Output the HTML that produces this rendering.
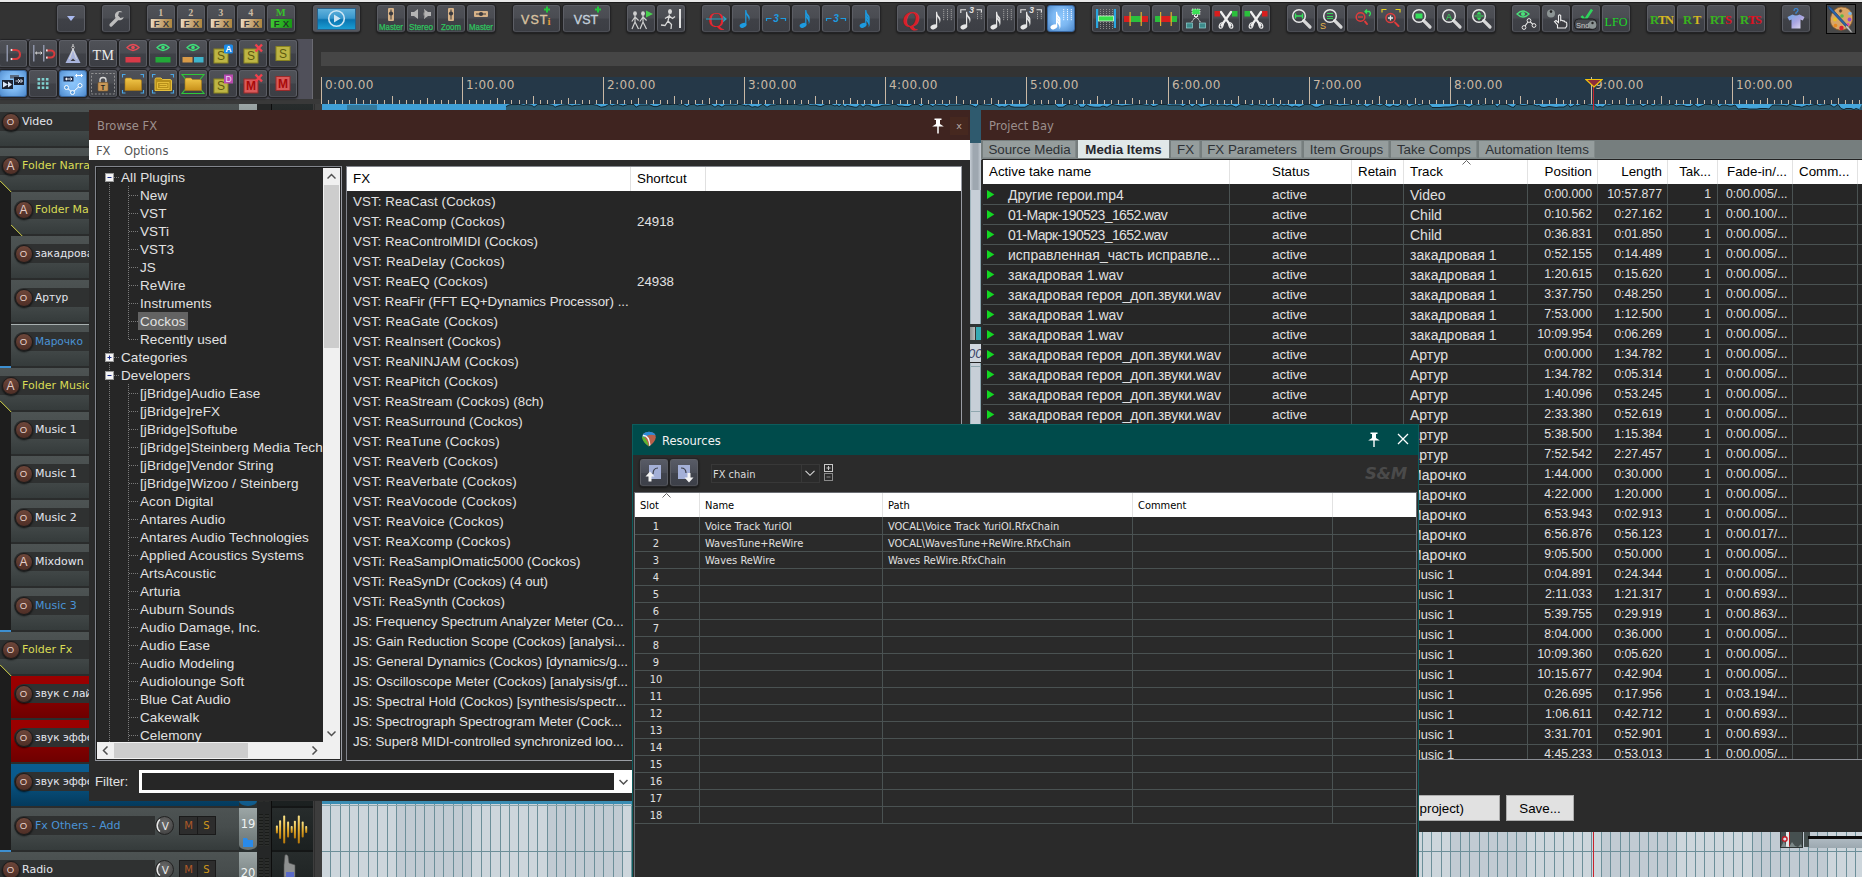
<!DOCTYPE html><html><head><meta charset="utf-8"><title>REAPER</title><style>
*{box-sizing:border-box;margin:0;padding:0}
html,body{width:1862px;height:877px;overflow:hidden;background:#333}
body{position:relative;font-family:"Liberation Sans",sans-serif;font-size:13.33px;color:#ddd}
div,span.t,svg.a{position:absolute}
.t{white-space:nowrap;transform:translateY(-50%);line-height:1}
.t.r{transform:translate(-100%,-50%)}
.t.c{transform:translate(-50%,-50%)}
.win{overflow:hidden}
.btn{width:28px;height:27px;border:1px solid #5c5e65;border-bottom-color:#4b4d54;border-radius:3px;background:linear-gradient(#4f5157 0,#4a4c52 48%,#3f4147 52%,#3c3e44 100%);box-shadow:0 0 0 1px #232325,0 1px 2px 1px rgba(0,0,0,.45)}
.btn.on{background:radial-gradient(ellipse at 50% 45%,#8cc6fc 0,#7db8f2 45%,#4c88cb 100%);border-color:#3a68a0}
.btn svg{position:absolute;left:0;top:0}
.seg{font-family:"DejaVu Sans",sans-serif}
.tah{font-family:"DejaVu Sans Condensed","DejaVu Sans",sans-serif}
</style></head><body>
<div style="left:0px;top:0px;width:1862px;height:2px;background:#e9e9e9"></div>
<div style="left:0px;top:2px;width:1862px;height:1px;background:#1c1c1c"></div>
<div style="left:321px;top:52px;width:1541px;height:14px;background:#464646"></div>
<div style="left:0px;top:39px;width:313px;height:60px;background:#50505a;border-right:1px solid #6a6a72"></div>
<div style="left:0px;top:99px;width:321px;height:5px;background:#393939"></div>
<div style="left:321px;top:104px;width:1541px;height:6px;background:#2c5a6e"></div>
<div style="left:322px;top:104px;width:184px;height:6px;background:#3f9fd6"></div>
<div style="left:347px;top:105px;width:30px;height:5px;background:#2c5a6e;opacity:.55"></div>
<svg class="a" style="left:0;top:104px" width="1862" height="6"><path d="M506 0L506 2.6L509 1.0L511 0.6L516 0.6L519 0.3L524 1.4L526 0.6L530 1.0L532 1.4L534 3.2L538 0.3L543 0.6L546 0.3L551 1.0L553 1.4L555 3.2L558 2.0L562 1.0L567 0.6L572 2.0L577 1.0L579 1.4L582 0.6L587 0.6L592 0.3L597 1.4L601 3.2L605 2.6L609 0.4L612 2.0L615 1.0L618 0.6L623 2.0L628 0.4L631 0.4L634 0.6L636 3.2L640 1.0L643 1.0L647 1.0L649 0.6L654 2.6L657 2.6L662 0.4L667 0.4L669 0.6L672 0.4L674 0.3L677 0.4L680 1.0L683 0.3L687 2.6L690 0.6L694 0.3L697 2.0L700 1.4L704 1.0L708 0.6L711 0.4L715 3.2L718 1.0L722 3.2L725 1.0L728 1.0L731 1.0L733 1.0L736 1.4L739 0.3L743 1.0L746 2.0L748 1.0L752 3.2L755 2.6L758 3.2L763 0.3L767 3.2L771 1.0L775 1.0L777 0.4L781 0.3L784 0.6L787 0.4L790 0.6L793 0.3L795 0.3L800 1.0L805 0.6L808 0.3L810 1.4L815 1.0L818 2.0L821 2.6L825 0.6L827 0.4L831 0.4L835 2.0L837 1.0L839 2.6L842 0.4L845 3.2L847 1.4L852 2.6L855 3.2L857 3.2L860 0.6L863 3.2L866 1.0L869 1.4L874 3.2L879 2.6L882 1.4L885 1.0L888 1.4L893 0.4L896 0.3L898 2.0L902 2.0L905 2.6L909 2.6L912 0.6L915 0.6L918 0.4L921 2.6L924 0.4L929 0.3L933 2.6L935 0.6L939 1.4L943 1.0L947 2.6L949 1.0L953 1.0L955 1.0L958 1.0L960 1.0L965 0.4L968 0.4L971 1.0L976 3.2L979 0.3L981 0.6L986 1.0L990 1.4L993 0.3L996 1.4L999 3.2L1002 2.6L1005 3.2L1009 1.0L1011 2.6L1015 3.2L1019 3.2L1022 3.2L1025 3.2L1030 0.3L1034 1.0L1039 0.3L1042 1.0L1045 0.4L1050 0.6L1055 0.3L1058 3.2L1063 3.2L1067 0.6L1072 0.3L1075 1.4L1078 0.3L1080 3.2L1084 3.2L1086 0.6L1090 2.6L1095 3.2L1100 3.2L1103 2.0L1107 3.2L1112 0.4L1117 1.4L1122 2.0L1127 1.4L1131 1.0L1135 0.6L1139 0.4L1142 0.6L1145 1.0L1147 1.4L1150 0.6L1153 2.6L1156 2.0L1159 0.4L1162 0.6L1166 0.4L1169 1.4L1172 1.0L1177 1.0L1180 1.0L1183 2.6L1186 0.6L1189 0.3L1192 3.2L1196 0.4L1198 1.0L1201 3.2L1206 2.0L1211 0.6L1213 1.4L1215 0.6L1218 2.0L1220 1.0L1223 1.0L1227 2.0L1231 1.0L1236 3.2L1241 0.4L1244 0.6L1247 0.3L1250 1.0L1252 2.0L1254 0.6L1257 0.6L1262 1.4L1264 2.0L1266 0.4L1268 2.6L1273 1.0L1276 1.0L1278 3.2L1281 0.6L1284 2.0L1286 1.0L1289 2.0L1292 3.2L1295 2.0L1299 3.2L1302 2.0L1305 0.3L1308 0.3L1310 0.3L1315 3.2L1318 3.2L1322 1.4L1326 0.6L1330 0.4L1335 1.0L1340 2.0L1343 1.4L1346 1.4L1349 1.0L1352 0.3L1355 0.3L1357 2.0L1361 1.0L1363 0.6L1367 3.2L1370 1.4L1373 0.3L1377 1.0L1380 2.0L1384 0.3L1387 2.6L1390 3.2L1393 1.4L1395 2.0L1398 2.6L1401 0.3L1404 1.0L1406 0.4L1409 3.2L1412 1.4L1417 0.3L1419 2.0L1421 1.0L1425 0.3L1429 0.3L1432 3.5L1435 3.5L1440 3.5L1445 3.0L1449 3.0L1454 2.5L1459 1.0L1464 1.0L1469 3.2L1474 0.3L1479 1.4L1481 0.3L1483 1.0L1486 0.6L1490 0.4L1495 0.3L1497 3.2L1500 0.4L1503 0.3L1507 0.6L1512 3.2L1514 3.2L1516 0.4L1519 0.6L1522 1.4L1525 1.4L1529 0.4L1533 0.6L1537 2.0L1539 1.4L1541 3.0L1544 3.5L1549 2.5L1553 3.0L1556 3.5L1559 3.0L1564 3.0L1568 0.4L1570 3.2L1573 2.0L1575 0.4L1577 2.0L1581 0.6L1586 0.4L1589 1.0L1592 1.4L1594 0.6L1597 3.2L1600 2.6L1603 3.2L1606 0.6L1609 1.4L1613 0.4L1617 0.3L1620 0.3L1624 0.4L1628 2.0L1631 1.0L1634 1.0L1637 0.6L1640 0.3L1643 2.6L1647 0.6L1650 0.3L1653 2.0L1656 0.6L1660 1.0L1665 0.6L1668 1.0L1671 0.3L1674 0.6L1676 2.0L1679 1.4L1682 1.0L1687 2.6L1690 2.6L1694 0.3L1698 3.2L1703 1.4L1705 0.3L1709 0.4L1714 1.0L1717 0.4L1719 3.2L1722 1.0L1726 1.0L1729 2.0L1732 2.0L1735 1.0L1738 5.0L1743 4.5L1746 4.5L1749 5.0L1754 5.0L1757 5.0L1760 4.5L1763 4.5L1766 4.5L1769 5.0L1772 1.4L1774 1.0L1778 1.0L1783 1.4L1787 2.0L1790 0.3L1794 2.0L1799 2.6L1802 3.2L1807 1.4L1809 2.0L1812 1.0L1816 0.4L1820 2.0L1822 1.0L1824 1.0L1828 0.4L1830 0.6L1834 3.2L1838 0.4L1841 4.5L1844 5.5L1846 4.5L1851 4.5L1854 5.5L1856 4.5L1859 5.5L1862 0Z" fill="#45a6dc"/><path d="M506 2.6L509 1.0L511 0.6L516 0.6L519 0.3L524 1.4L526 0.6L530 1.0L532 1.4L534 3.2L538 0.3L543 0.6L546 0.3L551 1.0L553 1.4L555 3.2L558 2.0L562 1.0L567 0.6L572 2.0L577 1.0L579 1.4L582 0.6L587 0.6L592 0.3L597 1.4L601 3.2L605 2.6L609 0.4L612 2.0L615 1.0L618 0.6L623 2.0L628 0.4L631 0.4L634 0.6L636 3.2L640 1.0L643 1.0L647 1.0L649 0.6L654 2.6L657 2.6L662 0.4L667 0.4L669 0.6L672 0.4L674 0.3L677 0.4L680 1.0L683 0.3L687 2.6L690 0.6L694 0.3L697 2.0L700 1.4L704 1.0L708 0.6L711 0.4L715 3.2L718 1.0L722 3.2L725 1.0L728 1.0L731 1.0L733 1.0L736 1.4L739 0.3L743 1.0L746 2.0L748 1.0L752 3.2L755 2.6L758 3.2L763 0.3L767 3.2L771 1.0L775 1.0L777 0.4L781 0.3L784 0.6L787 0.4L790 0.6L793 0.3L795 0.3L800 1.0L805 0.6L808 0.3L810 1.4L815 1.0L818 2.0L821 2.6L825 0.6L827 0.4L831 0.4L835 2.0L837 1.0L839 2.6L842 0.4L845 3.2L847 1.4L852 2.6L855 3.2L857 3.2L860 0.6L863 3.2L866 1.0L869 1.4L874 3.2L879 2.6L882 1.4L885 1.0L888 1.4L893 0.4L896 0.3L898 2.0L902 2.0L905 2.6L909 2.6L912 0.6L915 0.6L918 0.4L921 2.6L924 0.4L929 0.3L933 2.6L935 0.6L939 1.4L943 1.0L947 2.6L949 1.0L953 1.0L955 1.0L958 1.0L960 1.0L965 0.4L968 0.4L971 1.0L976 3.2L979 0.3L981 0.6L986 1.0L990 1.4L993 0.3L996 1.4L999 3.2L1002 2.6L1005 3.2L1009 1.0L1011 2.6L1015 3.2L1019 3.2L1022 3.2L1025 3.2L1030 0.3L1034 1.0L1039 0.3L1042 1.0L1045 0.4L1050 0.6L1055 0.3L1058 3.2L1063 3.2L1067 0.6L1072 0.3L1075 1.4L1078 0.3L1080 3.2L1084 3.2L1086 0.6L1090 2.6L1095 3.2L1100 3.2L1103 2.0L1107 3.2L1112 0.4L1117 1.4L1122 2.0L1127 1.4L1131 1.0L1135 0.6L1139 0.4L1142 0.6L1145 1.0L1147 1.4L1150 0.6L1153 2.6L1156 2.0L1159 0.4L1162 0.6L1166 0.4L1169 1.4L1172 1.0L1177 1.0L1180 1.0L1183 2.6L1186 0.6L1189 0.3L1192 3.2L1196 0.4L1198 1.0L1201 3.2L1206 2.0L1211 0.6L1213 1.4L1215 0.6L1218 2.0L1220 1.0L1223 1.0L1227 2.0L1231 1.0L1236 3.2L1241 0.4L1244 0.6L1247 0.3L1250 1.0L1252 2.0L1254 0.6L1257 0.6L1262 1.4L1264 2.0L1266 0.4L1268 2.6L1273 1.0L1276 1.0L1278 3.2L1281 0.6L1284 2.0L1286 1.0L1289 2.0L1292 3.2L1295 2.0L1299 3.2L1302 2.0L1305 0.3L1308 0.3L1310 0.3L1315 3.2L1318 3.2L1322 1.4L1326 0.6L1330 0.4L1335 1.0L1340 2.0L1343 1.4L1346 1.4L1349 1.0L1352 0.3L1355 0.3L1357 2.0L1361 1.0L1363 0.6L1367 3.2L1370 1.4L1373 0.3L1377 1.0L1380 2.0L1384 0.3L1387 2.6L1390 3.2L1393 1.4L1395 2.0L1398 2.6L1401 0.3L1404 1.0L1406 0.4L1409 3.2L1412 1.4L1417 0.3L1419 2.0L1421 1.0L1425 0.3L1429 0.3L1432 3.5L1435 3.5L1440 3.5L1445 3.0L1449 3.0L1454 2.5L1459 1.0L1464 1.0L1469 3.2L1474 0.3L1479 1.4L1481 0.3L1483 1.0L1486 0.6L1490 0.4L1495 0.3L1497 3.2L1500 0.4L1503 0.3L1507 0.6L1512 3.2L1514 3.2L1516 0.4L1519 0.6L1522 1.4L1525 1.4L1529 0.4L1533 0.6L1537 2.0L1539 1.4L1541 3.0L1544 3.5L1549 2.5L1553 3.0L1556 3.5L1559 3.0L1564 3.0L1568 0.4L1570 3.2L1573 2.0L1575 0.4L1577 2.0L1581 0.6L1586 0.4L1589 1.0L1592 1.4L1594 0.6L1597 3.2L1600 2.6L1603 3.2L1606 0.6L1609 1.4L1613 0.4L1617 0.3L1620 0.3L1624 0.4L1628 2.0L1631 1.0L1634 1.0L1637 0.6L1640 0.3L1643 2.6L1647 0.6L1650 0.3L1653 2.0L1656 0.6L1660 1.0L1665 0.6L1668 1.0L1671 0.3L1674 0.6L1676 2.0L1679 1.4L1682 1.0L1687 2.6L1690 2.6L1694 0.3L1698 3.2L1703 1.4L1705 0.3L1709 0.4L1714 1.0L1717 0.4L1719 3.2L1722 1.0L1726 1.0L1729 2.0L1732 2.0L1735 1.0L1738 5.0L1743 4.5L1746 4.5L1749 5.0L1754 5.0L1757 5.0L1760 4.5L1763 4.5L1766 4.5L1769 5.0L1772 1.4L1774 1.0L1778 1.0L1783 1.4L1787 2.0L1790 0.3L1794 2.0L1799 2.6L1802 3.2L1807 1.4L1809 2.0L1812 1.0L1816 0.4L1820 2.0L1822 1.0L1824 1.0L1828 0.4L1830 0.6L1834 3.2L1838 0.4L1841 4.5L1844 5.5L1846 4.5L1851 4.5L1854 5.5L1856 4.5L1859 5.5" fill="none" stroke="#0e1a20" stroke-width=".9"/></svg>
<div style="left:970px;top:110px;width:11px;height:33px;background:#2f5a6e"></div>
<div style="left:970px;top:143px;width:11px;height:47px;background:linear-gradient(90deg,#c7ced6 0,#9ea7b0 30%,#9ea7b0 70%,#c7ced6 100%)"></div>
<div style="left:970px;top:190px;width:11px;height:240px;background:#c7cfd7;border-left:1px solid #9eb4bc;border-right:1px solid #8aa4ae"></div>
<div style="left:970px;top:324px;width:11px;height:20px;background:#2e3434"></div>
<div style="left:970px;top:327px;width:5px;height:13px;background:linear-gradient(90deg,#8a8e8e,#b8bcbc)"></div>
<div style="left:976px;top:327px;width:5px;height:13px;background:#35a9b3"></div>
<div style="left:970px;top:344px;width:11px;height:19px;overflow:hidden;background:#cfd7de;border-bottom:1px solid #222">
<span class="t" style="left:-2px;top:9px;font-size:13px;font-style:italic;color:#3b4668">00</span>
</div>
<div style="left:971px;top:366px;width:9px;height:1px;background:#8ea6ae"></div>
<div style="left:971px;top:411px;width:9px;height:1px;background:#8ea6ae"></div>
<svg class="a" shape-rendering="crispEdges" style="left:322px;top:800px" width="320" height="77"><rect width="320" height="77" fill="#cdd6dc"/><rect x="75" y="0" width="75" height="77" fill="#c1cbd3"/><rect x="225" y="0" width="75" height="77" fill="#c1cbd3"/><rect x="8" y="0" width="1" height="77" fill="#6c8f99"/><rect x="18" y="0" width="1" height="77" fill="#6c8f99"/><rect x="27" y="0" width="1" height="77" fill="#6c8f99"/><rect x="36" y="0" width="1" height="77" fill="#6c8f99"/><rect x="46" y="0" width="1" height="77" fill="#6c8f99"/><rect x="55" y="0" width="1" height="77" fill="#6c8f99"/><rect x="65" y="0" width="1" height="77" fill="#6c8f99"/><rect x="74" y="0" width="1" height="77" fill="#6c8f99"/><rect x="83" y="0" width="1" height="77" fill="#6c8f99"/><rect x="93" y="0" width="1" height="77" fill="#6c8f99"/><rect x="102" y="0" width="1" height="77" fill="#6c8f99"/><rect x="112" y="0" width="1" height="77" fill="#6c8f99"/><rect x="121" y="0" width="1" height="77" fill="#6c8f99"/><rect x="131" y="0" width="1" height="77" fill="#6c8f99"/><rect x="140" y="0" width="1" height="77" fill="#6c8f99"/><rect x="149" y="0" width="1" height="77" fill="#6c8f99"/><rect x="159" y="0" width="1" height="77" fill="#6c8f99"/><rect x="168" y="0" width="1" height="77" fill="#6c8f99"/><rect x="178" y="0" width="1" height="77" fill="#6c8f99"/><rect x="187" y="0" width="1" height="77" fill="#6c8f99"/><rect x="196" y="0" width="1" height="77" fill="#6c8f99"/><rect x="206" y="0" width="1" height="77" fill="#6c8f99"/><rect x="215" y="0" width="1" height="77" fill="#6c8f99"/><rect x="225" y="0" width="1" height="77" fill="#6c8f99"/><rect x="234" y="0" width="1" height="77" fill="#6c8f99"/><rect x="243" y="0" width="1" height="77" fill="#6c8f99"/><rect x="253" y="0" width="1" height="77" fill="#6c8f99"/><rect x="262" y="0" width="1" height="77" fill="#6c8f99"/><rect x="272" y="0" width="1" height="77" fill="#6c8f99"/><rect x="281" y="0" width="1" height="77" fill="#6c8f99"/><rect x="291" y="0" width="1" height="77" fill="#6c8f99"/><rect x="300" y="0" width="1" height="77" fill="#6c8f99"/><rect x="309" y="0" width="1" height="77" fill="#6c8f99"/><rect x="319" y="0" width="1" height="77" fill="#6c8f99"/></svg>
<div style="left:322px;top:801px;width:320px;height:3px;background:#3a8db3"></div>
<div style="left:322px;top:851px;width:320px;height:1px;background:#6c8f99"></div>
<div style="left:322px;top:805px;width:320px;height:1px;background:#8aa6ae"></div>
<svg class="a" shape-rendering="crispEdges" style="left:1410px;top:832px" width="452" height="45"><rect width="452" height="45" fill="#cdd6dc"/><rect x="41" y="0" width="75" height="45" fill="#c1cbd3"/><rect x="191" y="0" width="76" height="45" fill="#c1cbd3"/><rect x="342" y="0" width="75" height="45" fill="#c1cbd3"/><rect x="3" y="0" width="1" height="45" fill="#6c8f99"/><rect x="12" y="0" width="1" height="45" fill="#6c8f99"/><rect x="21" y="0" width="1" height="45" fill="#6c8f99"/><rect x="31" y="0" width="1" height="45" fill="#6c8f99"/><rect x="40" y="0" width="1" height="45" fill="#6c8f99"/><rect x="50" y="0" width="1" height="45" fill="#6c8f99"/><rect x="59" y="0" width="1" height="45" fill="#6c8f99"/><rect x="69" y="0" width="1" height="45" fill="#6c8f99"/><rect x="78" y="0" width="1" height="45" fill="#6c8f99"/><rect x="87" y="0" width="1" height="45" fill="#6c8f99"/><rect x="97" y="0" width="1" height="45" fill="#6c8f99"/><rect x="106" y="0" width="1" height="45" fill="#6c8f99"/><rect x="116" y="0" width="1" height="45" fill="#6c8f99"/><rect x="125" y="0" width="1" height="45" fill="#6c8f99"/><rect x="134" y="0" width="1" height="45" fill="#6c8f99"/><rect x="144" y="0" width="1" height="45" fill="#6c8f99"/><rect x="153" y="0" width="1" height="45" fill="#6c8f99"/><rect x="163" y="0" width="1" height="45" fill="#6c8f99"/><rect x="172" y="0" width="1" height="45" fill="#6c8f99"/><rect x="181" y="0" width="1" height="45" fill="#6c8f99"/><rect x="191" y="0" width="1" height="45" fill="#6c8f99"/><rect x="200" y="0" width="1" height="45" fill="#6c8f99"/><rect x="210" y="0" width="1" height="45" fill="#6c8f99"/><rect x="219" y="0" width="1" height="45" fill="#6c8f99"/><rect x="229" y="0" width="1" height="45" fill="#6c8f99"/><rect x="238" y="0" width="1" height="45" fill="#6c8f99"/><rect x="247" y="0" width="1" height="45" fill="#6c8f99"/><rect x="257" y="0" width="1" height="45" fill="#6c8f99"/><rect x="266" y="0" width="1" height="45" fill="#6c8f99"/><rect x="276" y="0" width="1" height="45" fill="#6c8f99"/><rect x="285" y="0" width="1" height="45" fill="#6c8f99"/><rect x="294" y="0" width="1" height="45" fill="#6c8f99"/><rect x="304" y="0" width="1" height="45" fill="#6c8f99"/><rect x="313" y="0" width="1" height="45" fill="#6c8f99"/><rect x="323" y="0" width="1" height="45" fill="#6c8f99"/><rect x="332" y="0" width="1" height="45" fill="#6c8f99"/><rect x="342" y="0" width="1" height="45" fill="#6c8f99"/><rect x="351" y="0" width="1" height="45" fill="#6c8f99"/><rect x="360" y="0" width="1" height="45" fill="#6c8f99"/><rect x="370" y="0" width="1" height="45" fill="#6c8f99"/><rect x="379" y="0" width="1" height="45" fill="#6c8f99"/><rect x="389" y="0" width="1" height="45" fill="#6c8f99"/><rect x="398" y="0" width="1" height="45" fill="#6c8f99"/><rect x="407" y="0" width="1" height="45" fill="#6c8f99"/><rect x="417" y="0" width="1" height="45" fill="#6c8f99"/><rect x="426" y="0" width="1" height="45" fill="#6c8f99"/><rect x="436" y="0" width="1" height="45" fill="#6c8f99"/><rect x="445" y="0" width="1" height="45" fill="#6c8f99"/></svg>
<div style="left:1410px;top:851px;width:452px;height:1px;background:#6c8f99"></div>
<div style="left:313px;top:800px;width:9px;height:77px;background:#3b3b3b"></div>
<div style="left:321px;top:77px;width:1541px;height:27px;background:#253848"></div>
<svg class="a" shape-rendering="crispEdges" style="left:0;top:77px" width="1862" height="27" fill="#c9b8a4"><rect x="321" y="0" width="1" height="27"/><rect x="328" y="23" width="1" height="4"/><rect x="335" y="23" width="1" height="4"/><rect x="342" y="23" width="1" height="4"/><rect x="349" y="23" width="1" height="4"/><rect x="356" y="21" width="1" height="6"/><rect x="363" y="23" width="1" height="4"/><rect x="370" y="23" width="1" height="4"/><rect x="377" y="23" width="1" height="4"/><rect x="384" y="23" width="1" height="4"/><rect x="392" y="19" width="1" height="8"/><rect x="399" y="23" width="1" height="4"/><rect x="406" y="23" width="1" height="4"/><rect x="413" y="23" width="1" height="4"/><rect x="420" y="23" width="1" height="4"/><rect x="427" y="21" width="1" height="6"/><rect x="434" y="23" width="1" height="4"/><rect x="441" y="23" width="1" height="4"/><rect x="448" y="23" width="1" height="4"/><rect x="455" y="23" width="1" height="4"/><rect x="462" y="0" width="1" height="27"/><rect x="469" y="23" width="1" height="4"/><rect x="476" y="23" width="1" height="4"/><rect x="483" y="23" width="1" height="4"/><rect x="490" y="23" width="1" height="4"/><rect x="497" y="21" width="1" height="6"/><rect x="504" y="23" width="1" height="4"/><rect x="511" y="23" width="1" height="4"/><rect x="519" y="23" width="1" height="4"/><rect x="526" y="23" width="1" height="4"/><rect x="533" y="19" width="1" height="8"/><rect x="540" y="23" width="1" height="4"/><rect x="547" y="23" width="1" height="4"/><rect x="554" y="23" width="1" height="4"/><rect x="561" y="23" width="1" height="4"/><rect x="568" y="21" width="1" height="6"/><rect x="575" y="23" width="1" height="4"/><rect x="582" y="23" width="1" height="4"/><rect x="589" y="23" width="1" height="4"/><rect x="596" y="23" width="1" height="4"/><rect x="603" y="0" width="1" height="27"/><rect x="610" y="23" width="1" height="4"/><rect x="617" y="23" width="1" height="4"/><rect x="624" y="23" width="1" height="4"/><rect x="631" y="23" width="1" height="4"/><rect x="638" y="21" width="1" height="6"/><rect x="646" y="23" width="1" height="4"/><rect x="653" y="23" width="1" height="4"/><rect x="660" y="23" width="1" height="4"/><rect x="667" y="23" width="1" height="4"/><rect x="674" y="19" width="1" height="8"/><rect x="681" y="23" width="1" height="4"/><rect x="688" y="23" width="1" height="4"/><rect x="695" y="23" width="1" height="4"/><rect x="702" y="23" width="1" height="4"/><rect x="709" y="21" width="1" height="6"/><rect x="716" y="23" width="1" height="4"/><rect x="723" y="23" width="1" height="4"/><rect x="730" y="23" width="1" height="4"/><rect x="737" y="23" width="1" height="4"/><rect x="744" y="0" width="1" height="27"/><rect x="751" y="23" width="1" height="4"/><rect x="758" y="23" width="1" height="4"/><rect x="765" y="23" width="1" height="4"/><rect x="773" y="23" width="1" height="4"/><rect x="780" y="21" width="1" height="6"/><rect x="787" y="23" width="1" height="4"/><rect x="794" y="23" width="1" height="4"/><rect x="801" y="23" width="1" height="4"/><rect x="808" y="23" width="1" height="4"/><rect x="815" y="19" width="1" height="8"/><rect x="822" y="23" width="1" height="4"/><rect x="829" y="23" width="1" height="4"/><rect x="836" y="23" width="1" height="4"/><rect x="843" y="23" width="1" height="4"/><rect x="850" y="21" width="1" height="6"/><rect x="857" y="23" width="1" height="4"/><rect x="864" y="23" width="1" height="4"/><rect x="871" y="23" width="1" height="4"/><rect x="878" y="23" width="1" height="4"/><rect x="885" y="0" width="1" height="27"/><rect x="892" y="23" width="1" height="4"/><rect x="900" y="23" width="1" height="4"/><rect x="907" y="23" width="1" height="4"/><rect x="914" y="23" width="1" height="4"/><rect x="921" y="21" width="1" height="6"/><rect x="928" y="23" width="1" height="4"/><rect x="935" y="23" width="1" height="4"/><rect x="942" y="23" width="1" height="4"/><rect x="949" y="23" width="1" height="4"/><rect x="956" y="19" width="1" height="8"/><rect x="963" y="23" width="1" height="4"/><rect x="970" y="23" width="1" height="4"/><rect x="977" y="23" width="1" height="4"/><rect x="984" y="23" width="1" height="4"/><rect x="991" y="21" width="1" height="6"/><rect x="998" y="23" width="1" height="4"/><rect x="1005" y="23" width="1" height="4"/><rect x="1012" y="23" width="1" height="4"/><rect x="1019" y="23" width="1" height="4"/><rect x="1026" y="0" width="1" height="27"/><rect x="1034" y="23" width="1" height="4"/><rect x="1041" y="23" width="1" height="4"/><rect x="1048" y="23" width="1" height="4"/><rect x="1055" y="23" width="1" height="4"/><rect x="1062" y="21" width="1" height="6"/><rect x="1069" y="23" width="1" height="4"/><rect x="1076" y="23" width="1" height="4"/><rect x="1083" y="23" width="1" height="4"/><rect x="1090" y="23" width="1" height="4"/><rect x="1097" y="19" width="1" height="8"/><rect x="1104" y="23" width="1" height="4"/><rect x="1111" y="23" width="1" height="4"/><rect x="1118" y="23" width="1" height="4"/><rect x="1125" y="23" width="1" height="4"/><rect x="1132" y="21" width="1" height="6"/><rect x="1139" y="23" width="1" height="4"/><rect x="1146" y="23" width="1" height="4"/><rect x="1153" y="23" width="1" height="4"/><rect x="1161" y="23" width="1" height="4"/><rect x="1168" y="0" width="1" height="27"/><rect x="1175" y="23" width="1" height="4"/><rect x="1182" y="23" width="1" height="4"/><rect x="1189" y="23" width="1" height="4"/><rect x="1196" y="23" width="1" height="4"/><rect x="1203" y="21" width="1" height="6"/><rect x="1210" y="23" width="1" height="4"/><rect x="1217" y="23" width="1" height="4"/><rect x="1224" y="23" width="1" height="4"/><rect x="1231" y="23" width="1" height="4"/><rect x="1238" y="19" width="1" height="8"/><rect x="1245" y="23" width="1" height="4"/><rect x="1252" y="23" width="1" height="4"/><rect x="1259" y="23" width="1" height="4"/><rect x="1266" y="23" width="1" height="4"/><rect x="1273" y="21" width="1" height="6"/><rect x="1280" y="23" width="1" height="4"/><rect x="1288" y="23" width="1" height="4"/><rect x="1295" y="23" width="1" height="4"/><rect x="1302" y="23" width="1" height="4"/><rect x="1309" y="0" width="1" height="27"/><rect x="1316" y="23" width="1" height="4"/><rect x="1323" y="23" width="1" height="4"/><rect x="1330" y="23" width="1" height="4"/><rect x="1337" y="23" width="1" height="4"/><rect x="1344" y="21" width="1" height="6"/><rect x="1351" y="23" width="1" height="4"/><rect x="1358" y="23" width="1" height="4"/><rect x="1365" y="23" width="1" height="4"/><rect x="1372" y="23" width="1" height="4"/><rect x="1379" y="19" width="1" height="8"/><rect x="1386" y="23" width="1" height="4"/><rect x="1393" y="23" width="1" height="4"/><rect x="1400" y="23" width="1" height="4"/><rect x="1407" y="23" width="1" height="4"/><rect x="1415" y="21" width="1" height="6"/><rect x="1422" y="23" width="1" height="4"/><rect x="1429" y="23" width="1" height="4"/><rect x="1436" y="23" width="1" height="4"/><rect x="1443" y="23" width="1" height="4"/><rect x="1450" y="0" width="1" height="27"/><rect x="1457" y="23" width="1" height="4"/><rect x="1464" y="23" width="1" height="4"/><rect x="1471" y="23" width="1" height="4"/><rect x="1478" y="23" width="1" height="4"/><rect x="1485" y="21" width="1" height="6"/><rect x="1492" y="23" width="1" height="4"/><rect x="1499" y="23" width="1" height="4"/><rect x="1506" y="23" width="1" height="4"/><rect x="1513" y="23" width="1" height="4"/><rect x="1520" y="19" width="1" height="8"/><rect x="1527" y="23" width="1" height="4"/><rect x="1534" y="23" width="1" height="4"/><rect x="1542" y="23" width="1" height="4"/><rect x="1549" y="23" width="1" height="4"/><rect x="1556" y="21" width="1" height="6"/><rect x="1563" y="23" width="1" height="4"/><rect x="1570" y="23" width="1" height="4"/><rect x="1577" y="23" width="1" height="4"/><rect x="1584" y="23" width="1" height="4"/><rect x="1591" y="0" width="1" height="27"/><rect x="1598" y="23" width="1" height="4"/><rect x="1605" y="23" width="1" height="4"/><rect x="1612" y="23" width="1" height="4"/><rect x="1619" y="23" width="1" height="4"/><rect x="1626" y="21" width="1" height="6"/><rect x="1633" y="23" width="1" height="4"/><rect x="1640" y="23" width="1" height="4"/><rect x="1647" y="23" width="1" height="4"/><rect x="1654" y="23" width="1" height="4"/><rect x="1661" y="19" width="1" height="8"/><rect x="1669" y="23" width="1" height="4"/><rect x="1676" y="23" width="1" height="4"/><rect x="1683" y="23" width="1" height="4"/><rect x="1690" y="23" width="1" height="4"/><rect x="1697" y="21" width="1" height="6"/><rect x="1704" y="23" width="1" height="4"/><rect x="1711" y="23" width="1" height="4"/><rect x="1718" y="23" width="1" height="4"/><rect x="1725" y="23" width="1" height="4"/><rect x="1732" y="0" width="1" height="27"/><rect x="1739" y="23" width="1" height="4"/><rect x="1746" y="23" width="1" height="4"/><rect x="1753" y="23" width="1" height="4"/><rect x="1760" y="23" width="1" height="4"/><rect x="1767" y="21" width="1" height="6"/><rect x="1774" y="23" width="1" height="4"/><rect x="1781" y="23" width="1" height="4"/><rect x="1788" y="23" width="1" height="4"/><rect x="1795" y="23" width="1" height="4"/><rect x="1803" y="19" width="1" height="8"/><rect x="1810" y="23" width="1" height="4"/><rect x="1817" y="23" width="1" height="4"/><rect x="1824" y="23" width="1" height="4"/><rect x="1831" y="23" width="1" height="4"/><rect x="1838" y="21" width="1" height="6"/><rect x="1845" y="23" width="1" height="4"/><rect x="1852" y="23" width="1" height="4"/><rect x="1859" y="23" width="1" height="4"/></svg>
<span class="t seg" style="left:325px;top:85px;font-size:12px;letter-spacing:.400px;color:#c9b8a4">0:00.00</span>
<span class="t seg" style="left:466px;top:85px;font-size:12px;letter-spacing:.400px;color:#c9b8a4">1:00.00</span>
<span class="t seg" style="left:607px;top:85px;font-size:12px;letter-spacing:.400px;color:#c9b8a4">2:00.00</span>
<span class="t seg" style="left:748px;top:85px;font-size:12px;letter-spacing:.400px;color:#c9b8a4">3:00.00</span>
<span class="t seg" style="left:889px;top:85px;font-size:12px;letter-spacing:.400px;color:#c9b8a4">4:00.00</span>
<span class="t seg" style="left:1030px;top:85px;font-size:12px;letter-spacing:.400px;color:#c9b8a4">5:00.00</span>
<span class="t seg" style="left:1172px;top:85px;font-size:12px;letter-spacing:.400px;color:#c9b8a4">6:00.00</span>
<span class="t seg" style="left:1313px;top:85px;font-size:12px;letter-spacing:.400px;color:#c9b8a4">7:00.00</span>
<span class="t seg" style="left:1454px;top:85px;font-size:12px;letter-spacing:.400px;color:#c9b8a4">8:00.00</span>
<span class="t seg" style="left:1595px;top:85px;font-size:12px;letter-spacing:.400px;color:#c9b8a4">9:00.00</span>
<span class="t seg" style="left:1736px;top:85px;font-size:12px;letter-spacing:.400px;color:#c9b8a4">10:00.00</span>
<div style="left:1593px;top:87px;width:1px;height:790px;background:#c8232c"></div>
<svg class="a" style="left:1584.500px;top:77px" width="18" height="12"><path d="M1 2.500H17L9 10Z" fill="#8b2c3c" stroke="#f2c20c" stroke-width="1.200"/></svg>
<div class="btn" style="left:57px;top:5px;width:28px;"><svg width="26" height="25" viewBox="0 0 26 25"><path d="M9 10H17L13 15Z" fill="#a9b9ee"/></svg></div>
<div class="btn" style="left:102px;top:5px;width:28px;"><svg width="26" height="25" viewBox="0 0 26 25"><path d="M8 19L15 12" stroke="#bdbdbd" stroke-width="3.2" stroke-linecap="round"/><path d="M19.5 6.2A4.6 4.6 0 1 0 20.8 11.2L17.3 11.9L15.1 9.7L16 6.3Z" fill="#bdbdbd"/></svg></div>
<svg width="0" height="0" style="position:absolute"><defs><linearGradient id="fxg" x1="0" y1="0" x2="1" y2="0"><stop offset="0" stop-color="#ead9c0"/><stop offset=".5" stop-color="#c9a878"/><stop offset="1" stop-color="#ae863f"/></linearGradient><linearGradient id="fxm" x1="0" y1="0" x2="1" y2="0"><stop offset="0" stop-color="#3fc832"/><stop offset="1" stop-color="#179a14"/></linearGradient></defs></svg>
<div class="btn" style="left:147px;top:5px;width:28px;"><svg width="26" height="25" viewBox="0 0 26 25"><text x="12.8" y="9.8" font-size="10" fill="#cbbba3" font-family="Liberation Serif,serif" font-weight="bold" text-anchor="middle">1</text><rect x="2.800" y="13" width="21.200" height="8.800" fill="url(#fxg)"/><text x="5.7" y="20.6" font-size="9.5" fill="#393b42" font-family="Liberation Sans,sans-serif" font-weight="bold" textLength="15.500" lengthAdjust="spacing">FX</text></svg></div>
<div class="btn" style="left:177px;top:5px;width:28px;"><svg width="26" height="25" viewBox="0 0 26 25"><text x="12.8" y="9.8" font-size="10" fill="#cbbba3" font-family="Liberation Serif,serif" font-weight="bold" text-anchor="middle">2</text><rect x="2.800" y="13" width="21.200" height="8.800" fill="url(#fxg)"/><text x="5.7" y="20.6" font-size="9.5" fill="#393b42" font-family="Liberation Sans,sans-serif" font-weight="bold" textLength="15.500" lengthAdjust="spacing">FX</text></svg></div>
<div class="btn" style="left:207px;top:5px;width:28px;"><svg width="26" height="25" viewBox="0 0 26 25"><text x="12.8" y="9.8" font-size="10" fill="#cbbba3" font-family="Liberation Serif,serif" font-weight="bold" text-anchor="middle">3</text><rect x="2.800" y="13" width="21.200" height="8.800" fill="url(#fxg)"/><text x="5.7" y="20.6" font-size="9.5" fill="#393b42" font-family="Liberation Sans,sans-serif" font-weight="bold" textLength="15.500" lengthAdjust="spacing">FX</text></svg></div>
<div class="btn" style="left:237px;top:5px;width:28px;"><svg width="26" height="25" viewBox="0 0 26 25"><text x="12.8" y="9.8" font-size="10" fill="#cbbba3" font-family="Liberation Serif,serif" font-weight="bold" text-anchor="middle">4</text><rect x="2.800" y="13" width="21.200" height="8.800" fill="url(#fxg)"/><text x="5.7" y="20.6" font-size="9.5" fill="#393b42" font-family="Liberation Sans,sans-serif" font-weight="bold" textLength="15.500" lengthAdjust="spacing">FX</text></svg></div>
<div class="btn" style="left:267px;top:5px;width:28px;"><svg width="26" height="25" viewBox="0 0 26 25"><text x="12.8" y="9.8" font-size="10.5" fill="#39c02c" font-family="Liberation Serif,serif" font-weight="bold" text-anchor="middle">M</text><rect x="2.800" y="13" width="21.200" height="8.800" fill="url(#fxm)"/><text x="5.7" y="20.6" font-size="9.5" fill="#203a28" font-family="Liberation Sans,sans-serif" font-weight="bold" textLength="15.500" lengthAdjust="spacing">FX</text></svg></div>
<div class="btn" style="left:313px;top:5px;width:47px;background:#55585f"><div style="left:3px;top:2px;width:39px;height:22px;border:1px solid #2a5f86;background:linear-gradient(#62b2dc 0,#3796cc 46%,#0a74b0 54%,#1a9cd2 100%)"></div><svg width="45" height="25" viewBox="0 0 45 25"><circle cx="22.5" cy="12.5" r="7.8" fill="none" stroke="#cfe6f4" stroke-width="1.6"/><path d="M20 8.6V16.4L26.6 12.5Z" fill="#cfe6f4"/></svg></div>
<div class="btn" style="left:377px;top:5px;width:28px;"><svg width="26" height="25" viewBox="0 0 26 25"><rect x="10" y="2" width="6" height="13" rx="1" fill="#d6b288"/><rect x="12.5" y="3.5" width="1" height="10" fill="#3a3a3e"/><circle cx="13" cy="7.5" r="2.1" fill="#3a3a3e"/><text x="13" y="24.3" font-size="9.2" fill="#2fc45f" font-family="Liberation Sans,sans-serif" text-anchor="middle" stroke="#2fc45f" stroke-width=".25" textLength="24" lengthAdjust="spacingAndGlyphs">Master</text></svg></div>
<div class="btn" style="left:407px;top:5px;width:28px;"><svg width="26" height="25" viewBox="0 0 26 25"><path d="M3 6H6L10 3V13L6 10H3Z" fill="#b4b4b4"/><path d="M23 6H20L16 3V13L20 10H23Z" fill="#b4b4b4"/><path d="M17 4Q14.5 8 17 12" stroke="#8a8a8a" fill="none"/><text x="13" y="24.3" font-size="9.2" fill="#2fc45f" font-family="Liberation Sans,sans-serif" text-anchor="middle" stroke="#2fc45f" stroke-width=".25" textLength="24" lengthAdjust="spacingAndGlyphs">Stereo</text></svg></div>
<div class="btn" style="left:437px;top:5px;width:28px;"><svg width="26" height="25" viewBox="0 0 26 25"><rect x="10" y="2" width="6" height="13" rx="1" fill="#d6b288"/><rect x="12.5" y="3.5" width="1" height="10" fill="#3a3a3e"/><circle cx="13" cy="7.5" r="2.1" fill="#3a3a3e"/><text x="13" y="24.3" font-size="9.2" fill="#2fc45f" font-family="Liberation Sans,sans-serif" text-anchor="middle" stroke="#2fc45f" stroke-width=".25" textLength="20" lengthAdjust="spacingAndGlyphs">Zoom</text></svg></div>
<div class="btn" style="left:467px;top:5px;width:28px;"><svg width="26" height="25" viewBox="0 0 26 25"><rect x="6" y="5" width="14" height="6" rx="1" fill="#d6b288"/><rect x="8" y="7.5" width="10" height="1" fill="#3a3a3e"/><circle cx="13" cy="8" r="2.1" fill="#3a3a3e"/><text x="13" y="24.3" font-size="9.2" fill="#2fc45f" font-family="Liberation Sans,sans-serif" text-anchor="middle" stroke="#2fc45f" stroke-width=".25" textLength="24" lengthAdjust="spacingAndGlyphs">Master</text></svg></div>
<div class="btn" style="left:513px;top:5px;width:47px;"><svg width="45" height="25" viewBox="0 0 45 25"><text x="7.1" y="18.2" font-size="12.5" fill="#d9c2a0" font-family="Liberation Sans,sans-serif" stroke="#d9c2a0" stroke-width=".35" textLength="26.300" lengthAdjust="spacing">VST</text><text x="33.6" y="18.8" font-size="11" fill="#e09a3a" font-family="Liberation Serif,serif" font-weight="bold">i</text><path d="M30 3.500H36M33 .5V6.500" stroke="#22c83c" stroke-width="2"/></svg></div>
<div class="btn" style="left:563px;top:5px;width:47px;"><svg width="45" height="25" viewBox="0 0 45 25"><text x="9.7" y="18.2" font-size="12.5" fill="#c3d0dc" font-family="Liberation Sans,sans-serif" stroke="#c3d0dc" stroke-width=".35" textLength="24.500" lengthAdjust="spacing">VST</text><path d="M31 3.500H37M34 .5V6.500" stroke="#22c83c" stroke-width="2"/></svg></div>
<div class="btn" style="left:627px;top:5px;width:28px;"><svg width="26" height="25" viewBox="0 0 26 25"><ellipse cx="7" cy="7.5" rx="1.900" ry="2.300" fill="#d0d0d0"/><path d="M7 9.2V16L4 23M7 16L10.5 23M7 11L3.8 15.5M7 11L10.6 14.5" fill="none" stroke="#d0d0d0" stroke-width="1.2"/><ellipse cx="15" cy="7.5" rx="1.900" ry="2.300" fill="#d0d0d0"/><path d="M15 9.2V16L12 23M15 16L18.5 23M15 11L11.8 15.5M15 11L18.6 14.5" fill="none" stroke="#d0d0d0" stroke-width="1.2"/><path d="M18 4.5V11.5L25 8Z" fill="#49d04e"/></svg></div>
<div class="btn" style="left:657px;top:5px;width:28px;"><svg width="26" height="25" viewBox="0 0 26 25"><ellipse cx="12" cy="5.500" rx="2" ry="2.500" fill="#d8d8d8"/><path d="M11.5 8.5L10 15L13.5 18.5L13 23M10 15L7 19.5L3 19M11 10L7 12.5M11.2 10L14.5 12.5L17 10.5" fill="none" stroke="#d8d8d8" stroke-width="1.3"/><rect x="21" y="3" width="2" height="19" fill="#e2e2e2"/></svg></div>
<div class="btn" style="left:702px;top:5px;width:28px;"><svg width="26" height="25" viewBox="0 0 26 25"><text x="13" y="21" font-size="22" fill="#e8232b" font-family="Liberation Serif,serif" text-anchor="middle">Q</text><path d="M3 13H23M20 10.5L23 13L20 15.5" fill="none" stroke="#22a7c8" stroke-width="1.2"/></svg></div>
<div class="btn" style="left:732px;top:5px;width:28px;"><svg width="26" height="25" viewBox="0 0 26 25"><ellipse cx="10" cy="19.3" rx="3.500" ry="2.300" transform="rotate(-22 10 19.3)" fill="#1d9be0"/><rect x="12.2" y="4" width="1.200" height="15.3" fill="#1d9be0"/><path d="M12.8 4Q13.6 7.6 16 9.4Q17.6 12 15.6 15.5Q16.6 12 12.8 8.2Z" fill="#1d9be0"/></svg></div>
<div class="btn" style="left:762px;top:5px;width:28px;"><svg width="26" height="25" viewBox="0 0 26 25"><path d="M3.5 15V12.5H8.5M17.5 12.5H22.5V15" fill="none" stroke="#1d9be0" stroke-width="1.2"/><text x="13" y="16" font-size="10" fill="#1d9be0" font-family="Liberation Sans,sans-serif" font-weight="bold" font-style="italic" text-anchor="middle">3</text></svg></div>
<div class="btn" style="left:792px;top:5px;width:28px;"><svg width="26" height="25" viewBox="0 0 26 25"><ellipse cx="10" cy="19.3" rx="3.500" ry="2.300" transform="rotate(-22 10 19.3)" fill="#1d9be0"/><rect x="12.2" y="4" width="1.200" height="15.3" fill="#1d9be0"/><path d="M12.8 4Q13.6 7.6 16 9.4Q17.6 12 15.6 15.5Q16.6 12 12.8 8.2Z" fill="#1d9be0"/><path d="M12.8 7Q13.6 10.6 16 12.4Q17.6 15 15.6 18.5Q16.6 15 12.8 11.2Z" fill="#1d9be0"/></svg></div>
<div class="btn" style="left:822px;top:5px;width:28px;"><svg width="26" height="25" viewBox="0 0 26 25"><path d="M3.5 15V12.5H8.5M17.5 12.5H22.5V15" fill="none" stroke="#1d9be0" stroke-width="1.2"/><text x="13" y="16" font-size="10" fill="#1d9be0" font-family="Liberation Sans,sans-serif" font-weight="bold" font-style="italic" text-anchor="middle">3</text></svg></div>
<div class="btn" style="left:852px;top:5px;width:28px;"><svg width="26" height="25" viewBox="0 0 26 25"><ellipse cx="10" cy="19.3" rx="3.500" ry="2.300" transform="rotate(-22 10 19.3)" fill="#1d9be0"/><rect x="12.2" y="4" width="1.200" height="15.3" fill="#1d9be0"/><path d="M12.8 4Q13.6 7.6 16 9.4Q17.6 12 15.6 15.5Q16.6 12 12.8 8.2Z" fill="#1d9be0"/><path d="M12.8 7Q13.6 10.6 16 12.4Q17.6 15 15.6 18.5Q16.6 15 12.8 11.2Z" fill="#1d9be0"/><path d="M12.8 10Q13.6 13.6 16 15.4Q17.6 18 15.6 21.5Q16.6 18 12.8 14.2Z" fill="#1d9be0"/></svg></div>
<div class="btn" style="left:897px;top:5px;width:28px;"><svg width="26" height="25" viewBox="0 0 26 25"><text x="13" y="21" font-size="24" fill="#d8202a" font-family="Liberation Serif,serif" font-style="italic" font-weight="bold" text-anchor="middle">Q</text></svg></div>
<div class="btn" style="left:927px;top:5px;width:28px;"><svg width="26" height="25" viewBox="0 0 26 25"><ellipse cx="5.8" cy="20.8" rx="3.500" ry="2.300" transform="rotate(-22 5.8 20.8)" fill="#e4e4e4"/><rect x="8.0" y="5.8" width="1.200" height="15.0" fill="#e4e4e4"/><path d="M8.6 5.8Q9.4 9.4 11.8 11.2Q13.399999999999999 13.8 11.399999999999999 17.3Q12.399999999999999 13.8 8.6 10.0Z" fill="#e4e4e4"/><g fill="#9a9a9a"><rect x="15.2" y="3" width="1" height="1.200"/><rect x="15.2" y="5" width="1" height="1.200"/><rect x="15.2" y="7" width="1" height="1.200"/><rect x="15.2" y="9" width="1" height="1.200"/><rect x="15.2" y="11" width="1" height="1.200"/><rect x="15.2" y="13" width="1" height="1.200"/><rect x="19" y="3" width="1" height="1.200"/><rect x="19" y="5" width="1" height="1.200"/><rect x="19" y="7" width="1" height="1.200"/><rect x="19" y="9" width="1" height="1.200"/><rect x="19" y="11" width="1" height="1.200"/><rect x="19" y="13" width="1" height="1.200"/><rect x="22.8" y="3" width="1" height="1.200"/><rect x="22.8" y="5" width="1" height="1.200"/><rect x="22.8" y="7" width="1" height="1.200"/><rect x="22.8" y="9" width="1" height="1.200"/><rect x="22.8" y="11" width="1" height="1.200"/><rect x="22.8" y="13" width="1" height="1.200"/></g></svg></div>
<div class="btn" style="left:957px;top:5px;width:28px;"><svg width="26" height="25" viewBox="0 0 26 25"><ellipse cx="5.8" cy="20.8" rx="3.500" ry="2.300" transform="rotate(-22 5.8 20.8)" fill="#e4e4e4"/><rect x="8.0" y="5.8" width="1.200" height="15.0" fill="#e4e4e4"/><path d="M8.6 5.8Q9.4 9.4 11.8 11.2Q13.399999999999999 13.8 11.399999999999999 17.3Q12.399999999999999 13.8 8.6 10.0Z" fill="#e4e4e4"/><path d="M2.800 7V3.800H8M18.500 3.800H23.400V7" fill="none" stroke="#e4e4e4" stroke-width="1.100"/><text x="13.6" y="6.6" font-size="8.5" fill="#e4e4e4" font-family="Liberation Sans,sans-serif" font-weight="bold" font-style="italic" text-anchor="middle">3</text><g fill="#9a9a9a"><rect x="19" y="6" width="1" height="1.200"/><rect x="19" y="8" width="1" height="1.200"/><rect x="19" y="10" width="1" height="1.200"/><rect x="19" y="12" width="1" height="1.200"/><rect x="22.8" y="6" width="1" height="1.200"/><rect x="22.8" y="8" width="1" height="1.200"/><rect x="22.8" y="10" width="1" height="1.200"/><rect x="22.8" y="12" width="1" height="1.200"/></g></svg></div>
<div class="btn" style="left:987px;top:5px;width:28px;"><svg width="26" height="25" viewBox="0 0 26 25"><ellipse cx="5.8" cy="20.8" rx="3.500" ry="2.300" transform="rotate(-22 5.8 20.8)" fill="#e4e4e4"/><rect x="8.0" y="5.8" width="1.200" height="15.0" fill="#e4e4e4"/><path d="M8.6 5.8Q9.4 9.4 11.8 11.2Q13.399999999999999 13.8 11.399999999999999 17.3Q12.399999999999999 13.8 8.6 10.0Z" fill="#e4e4e4"/><path d="M8.6 8.8Q9.4 12.4 11.8 14.200000000000001Q13.399999999999999 16.8 11.399999999999999 20.3Q12.399999999999999 16.8 8.6 13.0Z" fill="#e4e4e4"/><g fill="#9a9a9a"><rect x="15.2" y="3" width="1" height="1.200"/><rect x="15.2" y="5" width="1" height="1.200"/><rect x="15.2" y="7" width="1" height="1.200"/><rect x="15.2" y="9" width="1" height="1.200"/><rect x="15.2" y="11" width="1" height="1.200"/><rect x="15.2" y="13" width="1" height="1.200"/><rect x="19" y="3" width="1" height="1.200"/><rect x="19" y="5" width="1" height="1.200"/><rect x="19" y="7" width="1" height="1.200"/><rect x="19" y="9" width="1" height="1.200"/><rect x="19" y="11" width="1" height="1.200"/><rect x="19" y="13" width="1" height="1.200"/><rect x="22.8" y="3" width="1" height="1.200"/><rect x="22.8" y="5" width="1" height="1.200"/><rect x="22.8" y="7" width="1" height="1.200"/><rect x="22.8" y="9" width="1" height="1.200"/><rect x="22.8" y="11" width="1" height="1.200"/><rect x="22.8" y="13" width="1" height="1.200"/></g></svg></div>
<div class="btn" style="left:1017px;top:5px;width:28px;"><svg width="26" height="25" viewBox="0 0 26 25"><ellipse cx="5.8" cy="20.8" rx="3.500" ry="2.300" transform="rotate(-22 5.8 20.8)" fill="#e4e4e4"/><rect x="8.0" y="5.8" width="1.200" height="15.0" fill="#e4e4e4"/><path d="M8.6 5.8Q9.4 9.4 11.8 11.2Q13.399999999999999 13.8 11.399999999999999 17.3Q12.399999999999999 13.8 8.6 10.0Z" fill="#e4e4e4"/><path d="M8.6 8.8Q9.4 12.4 11.8 14.200000000000001Q13.399999999999999 16.8 11.399999999999999 20.3Q12.399999999999999 16.8 8.6 13.0Z" fill="#e4e4e4"/><path d="M2.800 7V3.800H8M18.500 3.800H23.400V7" fill="none" stroke="#e4e4e4" stroke-width="1.100"/><text x="13.6" y="6.6" font-size="8.5" fill="#e4e4e4" font-family="Liberation Sans,sans-serif" font-weight="bold" font-style="italic" text-anchor="middle">3</text><g fill="#9a9a9a"><rect x="19" y="6" width="1" height="1.200"/><rect x="19" y="8" width="1" height="1.200"/><rect x="19" y="10" width="1" height="1.200"/><rect x="19" y="12" width="1" height="1.200"/><rect x="22.8" y="6" width="1" height="1.200"/><rect x="22.8" y="8" width="1" height="1.200"/><rect x="22.8" y="10" width="1" height="1.200"/><rect x="22.8" y="12" width="1" height="1.200"/></g></svg></div>
<div class="btn on" style="left:1047px;top:5px;width:28px;"><svg width="26" height="25" viewBox="0 0 26 25"><ellipse cx="5.8" cy="20.8" rx="3.500" ry="2.300" transform="rotate(-22 5.8 20.8)" fill="#fff"/><rect x="8.0" y="5.8" width="1.200" height="15.0" fill="#fff"/><path d="M8.6 5.8Q9.4 9.4 11.8 11.2Q13.399999999999999 13.8 11.399999999999999 17.3Q12.399999999999999 13.8 8.6 10.0Z" fill="#fff"/><path d="M8.6 8.8Q9.4 12.4 11.8 14.200000000000001Q13.399999999999999 16.8 11.399999999999999 20.3Q12.399999999999999 16.8 8.6 13.0Z" fill="#fff"/><path d="M8.6 11.8Q9.4 15.4 11.8 17.200000000000003Q13.399999999999999 19.8 11.399999999999999 23.3Q12.399999999999999 19.8 8.6 16.0Z" fill="#fff"/><g fill="#eef6ff"><rect x="15.2" y="3" width="1" height="1.200"/><rect x="15.2" y="5" width="1" height="1.200"/><rect x="15.2" y="7" width="1" height="1.200"/><rect x="15.2" y="9" width="1" height="1.200"/><rect x="15.2" y="11" width="1" height="1.200"/><rect x="15.2" y="13" width="1" height="1.200"/><rect x="19" y="3" width="1" height="1.200"/><rect x="19" y="5" width="1" height="1.200"/><rect x="19" y="7" width="1" height="1.200"/><rect x="19" y="9" width="1" height="1.200"/><rect x="19" y="11" width="1" height="1.200"/><rect x="19" y="13" width="1" height="1.200"/><rect x="22.8" y="3" width="1" height="1.200"/><rect x="22.8" y="5" width="1" height="1.200"/><rect x="22.8" y="7" width="1" height="1.200"/><rect x="22.8" y="9" width="1" height="1.200"/><rect x="22.8" y="11" width="1" height="1.200"/><rect x="22.8" y="13" width="1" height="1.200"/></g></svg></div>
<div class="btn" style="left:1092px;top:5px;width:28px;"><svg width="26" height="25" viewBox="0 0 26 25"><g fill="#8c8c8c"><rect x="7" y="3" width="1" height="1"/><rect x="7" y="5" width="1" height="1"/><rect x="7" y="7" width="1" height="1"/><rect x="7" y="9" width="1" height="1"/><rect x="7" y="16" width="1" height="1"/><rect x="7" y="18" width="1" height="1"/><rect x="7" y="20" width="1" height="1"/><rect x="7" y="22" width="1" height="1"/><rect x="10" y="3" width="1" height="1"/><rect x="10" y="5" width="1" height="1"/><rect x="10" y="7" width="1" height="1"/><rect x="10" y="9" width="1" height="1"/><rect x="10" y="16" width="1" height="1"/><rect x="10" y="18" width="1" height="1"/><rect x="10" y="20" width="1" height="1"/><rect x="10" y="22" width="1" height="1"/><rect x="13" y="3" width="1" height="1"/><rect x="13" y="5" width="1" height="1"/><rect x="13" y="7" width="1" height="1"/><rect x="13" y="9" width="1" height="1"/><rect x="13" y="16" width="1" height="1"/><rect x="13" y="18" width="1" height="1"/><rect x="13" y="20" width="1" height="1"/><rect x="13" y="22" width="1" height="1"/><rect x="16" y="3" width="1" height="1"/><rect x="16" y="5" width="1" height="1"/><rect x="16" y="7" width="1" height="1"/><rect x="16" y="9" width="1" height="1"/><rect x="16" y="16" width="1" height="1"/><rect x="16" y="18" width="1" height="1"/><rect x="16" y="20" width="1" height="1"/><rect x="16" y="22" width="1" height="1"/><rect x="19" y="3" width="1" height="1"/><rect x="19" y="5" width="1" height="1"/><rect x="19" y="7" width="1" height="1"/><rect x="19" y="9" width="1" height="1"/><rect x="19" y="16" width="1" height="1"/><rect x="19" y="18" width="1" height="1"/><rect x="19" y="20" width="1" height="1"/><rect x="19" y="22" width="1" height="1"/></g><rect x="3" y="3" width="2.2" height="19" fill="#2aa6e0"/><rect x="20.8" y="3" width="2.2" height="19" fill="#2aa6e0"/><rect x="5.5" y="10" width="15" height="5" fill="#36e04a" stroke="#d8f8d8" stroke-width=".8"/></svg></div>
<div class="btn" style="left:1122px;top:5px;width:28px;"><svg width="26" height="25" viewBox="0 0 26 25"><rect x="1" y="10" width="24" height="6" fill="#d81e1e"/><rect x="7.5" y="10" width="11" height="6" fill="#2bbf3c"/><rect x="6.5" y="6" width="1.2" height="14" fill="#e0b030"/><rect x="17.6" y="6" width="1.2" height="14" fill="#e0b030"/></svg></div>
<div class="btn" style="left:1152px;top:5px;width:28px;"><svg width="26" height="25" viewBox="0 0 26 25"><rect x="2" y="10" width="22" height="6" fill="#2bbf3c"/><rect x="8" y="10" width="10" height="6" fill="#d81e1e"/><rect x="7" y="6" width="1.2" height="14" fill="#e0b030"/><rect x="17.6" y="6" width="1.2" height="14" fill="#e0b030"/></svg></div>
<div class="btn" style="left:1182px;top:5px;width:28px;"><svg width="26" height="25" viewBox="0 0 26 25"><rect x="9" y="3" width="8" height="5.5" fill="#3be056" stroke="#e8e8e8" stroke-dasharray="1.5 1" stroke-width=".8"/><path d="M11 10H15L13 12.5Z" fill="#e8e8e8"/><path d="M11.5 9V12L8 17V22M14.5 9V12L18 17V22" fill="none" stroke="#e8e8e8" stroke-width="1" stroke-dasharray="2 1"/><rect x="3.5" y="17" width="6" height="5" fill="#3d8a8a" stroke="#8fd0d0" stroke-width=".7"/><rect x="16.5" y="17" width="6" height="5" fill="#3d8a8a" stroke="#8fd0d0" stroke-width=".7"/></svg></div>
<div class="btn" style="left:1212px;top:5px;width:28px;"><svg width="26" height="25" viewBox="0 0 26 25"><rect x="1.5" y="5" width="5.5" height="5.5" fill="#d81e1e"/><rect x="19" y="5" width="5.5" height="5.5" fill="#2bbf3c"/><path d="M8 6L17.5 19.5M18 6L8.5 19.5" stroke="#efefef" stroke-width="2.2" stroke-linecap="round"/><ellipse cx="8.2" cy="19.5" rx="1.8" ry="2.8" transform="rotate(20 8.2 19.5)" fill="none" stroke="#efefef" stroke-width="1.2"/><ellipse cx="17.8" cy="19.5" rx="1.8" ry="2.8" transform="rotate(-20 17.8 19.5)" fill="none" stroke="#efefef" stroke-width="1.2"/></svg></div>
<div class="btn" style="left:1242px;top:5px;width:28px;"><svg width="26" height="25" viewBox="0 0 26 25"><rect x="1.5" y="5" width="5.5" height="5.5" fill="#2bbf3c"/><rect x="19" y="5" width="5.5" height="5.5" fill="#d81e1e"/><path d="M8 6L17.5 19.5M18 6L8.5 19.5" stroke="#efefef" stroke-width="2.2" stroke-linecap="round"/><ellipse cx="8.2" cy="19.5" rx="1.8" ry="2.8" transform="rotate(20 8.2 19.5)" fill="none" stroke="#efefef" stroke-width="1.2"/><ellipse cx="17.8" cy="19.5" rx="1.8" ry="2.8" transform="rotate(-20 17.8 19.5)" fill="none" stroke="#efefef" stroke-width="1.2"/></svg></div>
<div class="btn" style="left:1287px;top:5px;width:28px;"><svg width="26" height="25" viewBox="0 0 26 25"><path d="M15.6 14.6L22 21" stroke="#d8d8d8" stroke-width="3.2" stroke-linecap="round"/><circle cx="11" cy="10" r="6.3" fill="none" stroke="#e8e8e8" stroke-width="1.5"/><path d="M7.5 7.5V12.5M14.5 7.5V12.5M7.5 10H14.5" stroke="#35e05a" stroke-width="1.4" fill="none"/></svg></div>
<div class="btn" style="left:1317px;top:5px;width:28px;"><svg width="26" height="25" viewBox="0 0 26 25"><path d="M16.6 14.6L23 21" stroke="#d8d8d8" stroke-width="3.2" stroke-linecap="round"/><circle cx="12" cy="10" r="6.3" fill="none" stroke="#e8e8e8" stroke-width="1.5"/><path d="M9 7.800H15M9 10H15M9 12.200H15" stroke="#35e05a" stroke-width=".9" shape-rendering="crispEdges"/><text x="2" y="23" font-size="9" fill="#e8b64c" font-family="Liberation Sans,sans-serif">S</text></svg></div>
<div class="btn" style="left:1347px;top:5px;width:28px;"><svg width="26" height="25" viewBox="0 0 26 25"><path d="M17.1 15.6L19 18" stroke="#e03c3c" stroke-width="2" stroke-linecap="round"/><circle cx="12.5" cy="11" r="4.3" fill="none" stroke="#e03c3c" stroke-width="1.5"/><path d="M10 11H15" stroke="#e03c3c" stroke-width="1.3"/><path d="M17 5.5H21.5Q23.5 8 21 10M19 3.5L17 5.5L19 7.5" fill="none" stroke="#35e05a" stroke-width="1.3"/></svg></div>
<div class="btn" style="left:1377px;top:5px;width:28px;"><svg width="26" height="25" viewBox="0 0 26 25"><path d="M4 6.5V3.5H8.5M17.5 3.5H22V6.5" fill="none" stroke="#e6d020" stroke-width="1.2"/><path d="M17.1 16.6L20.5 20" stroke="#e03c3c" stroke-width="2" stroke-linecap="round"/><circle cx="12.5" cy="12" r="4.6" fill="none" stroke="#e03c3c" stroke-width="1.5"/><path d="M10 12H15M12.5 9.5V14.5" stroke="#e8e8e8" stroke-width="1.3"/></svg></div>
<div class="btn" style="left:1407px;top:5px;width:28px;"><svg width="26" height="25" viewBox="0 0 26 25"><path d="M15.6 14.6L22 21" stroke="#d8d8d8" stroke-width="3.2" stroke-linecap="round"/><circle cx="11" cy="10" r="6.3" fill="none" stroke="#e8e8e8" stroke-width="1.5"/><rect x="7.5" y="7.5" width="7" height="5" fill="#35e05a"/></svg></div>
<div class="btn" style="left:1437px;top:5px;width:28px;"><svg width="26" height="25" viewBox="0 0 26 25"><path d="M15.6 14.6L22 21" stroke="#d8d8d8" stroke-width="3.2" stroke-linecap="round"/><circle cx="11" cy="10" r="6.3" fill="none" stroke="#e8e8e8" stroke-width="1.5"/><text x="11" y="13.5" font-size="9" fill="#35e05a" font-family="Liberation Sans,sans-serif" text-anchor="middle">A</text></svg></div>
<div class="btn" style="left:1467px;top:5px;width:28px;"><svg width="26" height="25" viewBox="0 0 26 25"><path d="M15.6 14.6L22 21" stroke="#d8d8d8" stroke-width="3.2" stroke-linecap="round"/><circle cx="11" cy="10" r="6.3" fill="none" stroke="#e8e8e8" stroke-width="1.5"/><path d="M6.5 10H15.5" stroke="#35e05a" stroke-width="1"/><path d="M8.5 8.5H13.5L11 5.5ZM8.5 11.5H13.5L11 14.5Z" fill="#35e05a"/></svg></div>
<div class="btn" style="left:1512px;top:5px;width:28px;"><svg width="26" height="25" viewBox="0 0 26 25"><path d="M4 8Q10 2 16 8Q10 14 4 8Z" fill="none" stroke="#4be07a" stroke-width="1.3"/><circle cx="10" cy="8" r="2.1" fill="#4be07a"/><path d="M11 21.5L16 14.5L21 19.5" fill="none" stroke="#e8e8e8" stroke-width="1.1"/><circle cx="11" cy="21.5" r="1.9" fill="#3e3e43" stroke="#e8e8e8"/><circle cx="16" cy="14.5" r="1.9" fill="#3e3e43" stroke="#e8e8e8"/><circle cx="21" cy="19.5" r="1.9" fill="#3e3e43" stroke="#e8e8e8"/></svg></div>
<div class="btn" style="left:1542px;top:5px;width:28px;"><svg width="26" height="25" viewBox="0 0 26 25"><circle cx="8" cy="7.5" r="4" fill="#8c9494"/><circle cx="8" cy="5.6" r="1.3" fill="#222"/><path d="M14.5 22V19L11.5 15.5L13 14.5L15.5 16.5V9.5Q16.6 8.3 17.7 9.5V14.5Q19 13.8 20 15Q21.3 14.6 22 16Q23.6 15.8 23.8 17.5V20L22.5 22Z" fill="#3e3e43" stroke="#f0f0f0" stroke-width="1.1"/></svg></div>
<div class="btn" style="left:1572px;top:5px;width:28px;"><svg width="26" height="25" viewBox="0 0 26 25"><path d="M8.5 10L12 14L19 3.5" fill="none" stroke="#2fd45c" stroke-width="2.6"/><rect x="1.5" y="13" width="22" height="10.5" rx="4" fill="#46484d" stroke="#1e1e20"/><text x="3" y="21.5" font-size="7.5" fill="#c8c8c8" font-family="Liberation Sans,sans-serif">Snd</text><circle cx="19.5" cy="18.8" r="4" fill="#8c9494"/><circle cx="19.5" cy="17" r="1.2" fill="#222"/></svg></div>
<div class="btn" style="left:1602px;top:5px;width:28px;"><svg width="26" height="25" viewBox="0 0 26 25"><text x="13" y="19.8" font-size="13.5" fill="#1fd62a" font-family="Liberation Serif,serif" text-anchor="middle" textLength="23" lengthAdjust="spacingAndGlyphs">LFO</text></svg></div>
<div class="btn" style="left:1647px;top:5px;width:28px;"><svg width="26" height="25" viewBox="0 0 26 25"><text x="2" y="18" font-size="12.5" fill="#39b41e" font-family="Liberation Serif,serif" font-weight="bold">R</text><text x="10" y="18" font-size="12.5" fill="#d6b820" font-family="Liberation Serif,serif" font-weight="bold">T</text><text x="17" y="18" font-size="12.5" fill="#d6b820" font-family="Liberation Serif,serif" font-weight="bold">N</text></svg></div>
<div class="btn" style="left:1677px;top:5px;width:28px;"><svg width="26" height="25" viewBox="0 0 26 25"><text x="5" y="18" font-size="12.5" fill="#39b41e" font-family="Liberation Serif,serif" font-weight="bold">R</text><text x="15" y="18" font-size="12.5" fill="#d6b820" font-family="Liberation Serif,serif" font-weight="bold">T</text></svg></div>
<div class="btn" style="left:1707px;top:5px;width:28px;"><svg width="26" height="25" viewBox="0 0 26 25"><text x="2" y="18" font-size="12.5" fill="#39b41e" font-family="Liberation Serif,serif" font-weight="bold">R</text><text x="10" y="18" font-size="12.5" fill="#39b41e" font-family="Liberation Serif,serif" font-weight="bold">T</text><text x="17" y="18" font-size="12.5" fill="#e01020" font-family="Liberation Serif,serif" font-weight="bold">S</text></svg></div>
<div class="btn" style="left:1737px;top:5px;width:28px;"><svg width="26" height="25" viewBox="0 0 26 25"><text x="2" y="18" font-size="12.5" fill="#39b41e" font-family="Liberation Serif,serif" font-weight="bold">R</text><text x="10" y="18" font-size="12.5" fill="#e01020" font-family="Liberation Serif,serif" font-weight="bold">T</text><text x="17" y="18" font-size="12.5" fill="#e01020" font-family="Liberation Serif,serif" font-weight="bold">S</text></svg></div>
<div class="btn" style="left:1782px;top:5px;width:28px;"><svg width="26" height="25" viewBox="0 0 26 25"><defs><linearGradient id="sh" x1="0" y1="0" x2="1" y2="1"><stop offset="0" stop-color="#6ea8e8"/><stop offset=".5" stop-color="#a9a4e0"/><stop offset="1" stop-color="#e8e4f4"/></linearGradient></defs><path d="M11 5Q11 2.5 13 2.5Q15.2 2.5 15 4.5Q14.6 6 13 6.5V8" fill="none" stroke="#3c8ad8" stroke-width="1.1"/><path d="M4.5 11L9.5 8.5Q13 10.5 16.5 8.5L21.5 11L19.8 14.5L17.5 13.5V22.5H8.5V13.5L6.2 14.5Z" fill="url(#sh)"/></svg></div>
<div style="left:1826px;top:4px;width:30px;height:30px;background:#484848;border:1px solid #050505"><svg width="28" height="28" viewBox="0 0 28 28" style="position:absolute;left:0;top:0"><path d="M14 2Q24 2 25.5 11Q26.5 19 20 23.5Q12 27.5 6 22Q1.5 17 4.5 9.5Q7.5 2.5 14 2ZM13.5 4.5Q11.5 5 12.5 7Q14.5 8 15 6Q15 4.500 13.5 4.5Z" fill="#d9a566" fill-rule="evenodd" stroke="#8a5a2a" stroke-width=".8"/><circle cx="23" cy="8.5" r="1.8" fill="#7ab8e8"/><circle cx="15" cy="11" r="1.8" fill="#58b848"/><circle cx="8" cy="14.5" r="1.9" fill="#e8c020"/><circle cx="22.5" cy="14.5" r="1.9" fill="#9848c8"/><circle cx="8.5" cy="20.5" r="1.8" fill="#e88820"/><circle cx="14.5" cy="23" r="2.2" fill="#d82030"/><circle cx="21" cy="19.5" r="1.5" fill="#e848a8"/><path d="M1 1L4 2.5L21 21L19.5 22.5L2 4Z" fill="#2a62a8" stroke="#173a6a" stroke-width=".6"/><path d="M19.5 20L22 22.5L25.5 27.5L24 27.5L18.5 22Z" fill="#c8c8c8" stroke="#555" stroke-width=".5"/></svg></div>
<div class="btn" style="left:-1px;top:40px;width:28px;"><svg width="26" height="25" viewBox="0 0 26 25"><rect x="6.500" y="4" width="1.500" height="16.500" fill="#8d93a8"/><path d="M11.5 9.0H15.5A4.5 4.5 0 0 1 15.5 18.0H11.5" fill="none" stroke="#d63a3c" stroke-width="2.1"/><rect x="10.7" y="7.95" width="1.600" height="2.1" fill="#e4e4e4"/><rect x="10.7" y="16.95" width="1.600" height="2.1" fill="#e4e4e4"/></svg></div>
<div class="btn" style="left:29px;top:40px;width:28px;"><svg width="26" height="25" viewBox="0 0 26 25"><rect x="3" y="4" width="1.500" height="16.500" fill="#8d93a8"/><rect x="13" y="4" width="1.500" height="16.500" fill="#8d93a8"/><path d="M5.500 12H12M7 10.700L5.500 12L7 13.300M10.500 10.700L12 12L10.500 13.300" fill="none" stroke="#e8e8e8" stroke-width=".9"/><path d="M16.8 9.4H20.8A3.6 3.6 0 0 1 20.8 16.6H16.8" fill="none" stroke="#d63a3c" stroke-width="2"/><rect x="16.0" y="8.4" width="1.600" height="2" fill="#e4e4e4"/><rect x="16.0" y="15.600000000000001" width="1.600" height="2" fill="#e4e4e4"/></svg></div>
<div class="btn" style="left:59px;top:40px;width:28px;"><svg width="26" height="25" viewBox="0 0 26 25"><path d="M13 7L5.500 22H20.500Z" fill="#a9b4dc"/><path d="M13 3V8M13 8L9.500 18M13 8L16.500 18" stroke="#d8d8d8" stroke-width="1" fill="none"/><circle cx="13" cy="6.500" r="1.300" fill="#3e3e43" stroke="#d8d8d8" stroke-width=".8"/><path d="M10.500 20H15.500L13 17.500Z" fill="#3e3e43"/></svg></div>
<div class="btn" style="left:89px;top:40px;width:28px;"><svg width="26" height="25" viewBox="0 0 26 25"><text x="2.5" y="18.5" font-size="14" fill="#ececec" font-family="Liberation Serif,serif" textLength="21.500" lengthAdjust="spacing">TM</text></svg></div>
<div class="btn" style="left:119px;top:40px;width:28px;"><svg width="26" height="25" viewBox="0 0 26 25"><path d="M7 6.5Q13 0.5 19 6.5Q13 12.5 7 6.5Z" fill="none" stroke="#e84a55" stroke-width="1.3"/><circle cx="13" cy="6.5" r="1.8" fill="#e84a55"/><rect x="5.5" y="16" width="15" height="5.500" fill="#d83a48"/></svg></div>
<div class="btn" style="left:149px;top:40px;width:28px;"><svg width="26" height="25" viewBox="0 0 26 25"><path d="M7 6.5Q13 0.5 19 6.5Q13 12.5 7 6.5Z" fill="none" stroke="#3ee07a" stroke-width="1.3"/><circle cx="13" cy="6.5" r="1.8" fill="#3ee07a"/><rect x="5.5" y="16" width="15" height="5.500" fill="#22a838"/></svg></div>
<div class="btn" style="left:179px;top:40px;width:28px;"><svg width="26" height="25" viewBox="0 0 26 25"><path d="M7 6.5Q13 0.5 19 6.5Q13 12.5 7 6.5Z" fill="none" stroke="#3ee07a" stroke-width="1.3"/><circle cx="13" cy="6.5" r="1.8" fill="#3ee07a"/><rect x="2.5" y="16" width="10" height="5.500" fill="#d89a48"/><rect x="14" y="16" width="9.5" height="5.500" fill="#3eb4cc"/></svg></div>
<div class="btn" style="left:209px;top:40px;width:28px;"><svg width="26" height="25" viewBox="0 0 26 25"><rect x="4" y="8" width="14" height="14" fill="#bdb545" stroke="#8a8420" stroke-width="1"/><text x="11.0" y="19" font-size="12" fill="#5e5a10" font-family="Liberation Sans,sans-serif" text-anchor="middle">S</text><rect x="14" y="3.500" width="9" height="9" rx="1.500" fill="#1a8ae8"/><text x="18.5" y="11" font-size="8.5" fill="#fff" font-family="Liberation Sans,sans-serif" font-weight="bold" text-anchor="middle">A</text></svg></div>
<div class="btn" style="left:239px;top:40px;width:28px;"><svg width="26" height="25" viewBox="0 0 26 25"><rect x="4" y="8" width="14" height="14" fill="#bdb545" stroke="#8a8420" stroke-width="1"/><text x="11.0" y="19" font-size="12" fill="#5e5a10" font-family="Liberation Sans,sans-serif" text-anchor="middle">S</text><path d="M15.5 3.5L22.0 10.5M22.0 3.5L15.5 10.5" stroke="#f0404c" stroke-width="2.4"/></svg></div>
<div class="btn" style="left:269px;top:40px;width:28px;"><svg width="26" height="25" viewBox="0 0 26 25"><rect x="6" y="5.5" width="14" height="14" fill="#bdb545" stroke="#8a8420" stroke-width="1"/><text x="13.0" y="16.5" font-size="12" fill="#5e5a10" font-family="Liberation Sans,sans-serif" text-anchor="middle">S</text></svg></div>
<div class="btn on" style="left:-1px;top:70px;width:28px;"><svg width="26" height="25" viewBox="0 0 26 25"><rect x="2" y="9" width="11" height="9" fill="#1c2230"/><path d="M3 10.500L8 13.500L3 16.500ZM8 10.500L12 13.500L8 16.500Z" fill="#dce8f8"/><rect x="10" y="4" width="9" height="3.500" fill="#5a6a80"/><rect x="14" y="6" width="10" height="8" fill="#1c2230"/><path d="M15.500 10H22.500M20.500 8L22.500 10L20.500 12M18 8L20 10L18 12" fill="none" stroke="#dce8f8" stroke-width=".9"/></svg></div>
<div class="btn" style="left:29px;top:70px;width:28px;"><svg width="26" height="25" viewBox="0 0 26 25"><rect x="7.5" y="7" width="2.600" height="2.600" fill="#7fd0cf"/><rect x="7.5" y="11.2" width="2.600" height="2.600" fill="#7fd0cf"/><rect x="7.5" y="15.4" width="2.600" height="2.600" fill="#7fd0cf"/><rect x="11.7" y="7" width="2.600" height="2.600" fill="#7fd0cf"/><rect x="11.7" y="11.2" width="2.600" height="2.600" fill="#7fd0cf"/><rect x="11.7" y="15.4" width="2.600" height="2.600" fill="#7fd0cf"/><rect x="15.9" y="7" width="2.600" height="2.600" fill="#7fd0cf"/><rect x="15.9" y="11.2" width="2.600" height="2.600" fill="#7fd0cf"/><rect x="15.9" y="15.4" width="2.600" height="2.600" fill="#7fd0cf"/></svg></div>
<div class="btn on" style="left:59px;top:70px;width:28px;"><svg width="26" height="25" viewBox="0 0 26 25"><rect x="3.500" y="5.500" width="10" height="5" fill="#1c2a48"/><path d="M5 8H12M10.500 6.700L12 8L10.500 9.300M6.500 6.700V9.300" stroke="#fff" stroke-width=".9" fill="none"/><path d="M15.500 4.500H22.500M17 3L15.500 4.500L17 6M21 3L22.500 4.500L21 6" stroke="#fff" stroke-width="1" fill="none"/><path d="M6.500 16.500L12.500 21.500L20 14.500" fill="none" stroke="#fff" stroke-width="1"/><circle cx="6.500" cy="16.500" r="2" fill="#5a9ee0" stroke="#fff"/><circle cx="12.500" cy="21.500" r="2" fill="#5a9ee0" stroke="#fff"/><circle cx="20" cy="14.500" r="2" fill="#5a9ee0" stroke="#fff"/></svg></div>
<div class="btn" style="left:89px;top:70px;width:28px;"><svg width="26" height="25" viewBox="0 0 26 25"><rect x="1.500" y="2.500" width="23" height="20.500" fill="none" stroke="#a4a4a4" stroke-dasharray="2 1.600" stroke-width=".8"/><path d="M10 11.500V9Q10 6.500 13 6.500Q16 6.500 16 9V11.500" fill="none" stroke="#d8d8d8" stroke-width="1.300"/><rect x="8" y="11.500" width="10" height="8.500" rx="1" fill="#c89858" stroke="#8a6028" stroke-width=".6"/><text x="13" y="18.5" font-size="7" fill="#222" font-family="Liberation Sans,sans-serif" font-weight="bold" text-anchor="middle">T</text></svg></div>
<div class="btn" style="left:119px;top:70px;width:28px;"><svg width="26" height="25" viewBox="0 0 26 25"><defs><linearGradient id="fg" x1="0" y1="0" x2="0" y2="1"><stop offset="0" stop-color="#f2c84a"/><stop offset="1" stop-color="#c8901a"/></linearGradient></defs><path d="M2.500 6.500V3.500H5.500M20.500 3.500H23.500V6.500M2.500 19V22H5.500M20.500 22H23.500V19" fill="none" stroke="#4aa8e8" stroke-width="1.100"/><path d="M5 8.500Q5 7 6.500 7H11L12.500 8.500H20Q21.500 8.500 21.500 10V19.500H5Z" fill="url(#fg)" stroke="#a87818" stroke-width=".6"/></svg></div>
<div class="btn" style="left:149px;top:70px;width:28px;"><svg width="26" height="25" viewBox="0 0 26 25"><defs><linearGradient id="fg" x1="0" y1="0" x2="0" y2="1"><stop offset="0" stop-color="#f2c84a"/><stop offset="1" stop-color="#c8901a"/></linearGradient></defs><path d="M2.500 6.500V3.500H5.500M20.500 3.500H23.500V6.500M2.500 19V22H5.500M20.500 22H23.500V19" fill="none" stroke="#4aa8e8" stroke-width="1.100"/><path d="M5 8.500Q5 7 6.500 7H11L12.500 8.500H20Q21.500 8.500 21.500 10V19.500H5Z" fill="#b8901a" stroke="#f0c840" stroke-width=".9"/><path d="M7.500 11.500H19V17.500H7.500ZM9.500 13.500H17V15.500H9.500" fill="none" stroke="#f0c840" stroke-width=".8"/></svg></div>
<div class="btn" style="left:179px;top:70px;width:28px;"><svg width="26" height="25" viewBox="0 0 26 25"><defs><linearGradient id="fg" x1="0" y1="0" x2="0" y2="1"><stop offset="0" stop-color="#f2c84a"/><stop offset="1" stop-color="#c8901a"/></linearGradient></defs><path d="M2 3.500H24L20.500 8V18L24 22.500H2L5.500 18V8Z" fill="none" stroke="#2fc838" stroke-width="1.100"/><path d="M5 8.500Q5 7 6.500 7H11L12.500 8.500H20Q21.500 8.500 21.500 10V19.500H5Z" fill="url(#fg)" stroke="#a87818" stroke-width=".6"/></svg></div>
<div class="btn" style="left:209px;top:70px;width:28px;"><svg width="26" height="25" viewBox="0 0 26 25"><rect x="4" y="8" width="14" height="14" fill="#bdb545" stroke="#8a8420" stroke-width="1"/><text x="11.0" y="19" font-size="12" fill="#5e5a10" font-family="Liberation Sans,sans-serif" text-anchor="middle">S</text><rect x="14" y="3.500" width="9" height="9" fill="#b84ab0"/><text x="18.5" y="11" font-size="8.5" fill="#f4d8f4" font-family="Liberation Sans,sans-serif" text-anchor="middle">D</text></svg></div>
<div class="btn" style="left:239px;top:70px;width:28px;"><svg width="26" height="25" viewBox="0 0 26 25"><rect x="4" y="8" width="14" height="14" fill="#d85a5a" stroke="#9a2a2a" stroke-width="1"/><text x="11.0" y="19" font-size="12" font-weight="bold" fill="#a80a0a" font-family="Liberation Sans,sans-serif" text-anchor="middle">M</text><path d="M15.5 3.5L22.0 10.5M22.0 3.5L15.5 10.5" stroke="#f0404c" stroke-width="2.4"/></svg></div>
<div class="btn" style="left:269px;top:70px;width:28px;"><svg width="26" height="25" viewBox="0 0 26 25"><rect x="6" y="5.5" width="14" height="14" fill="#d85a5a" stroke="#9a2a2a" stroke-width="1"/><text x="13.0" y="16.5" font-size="12" font-weight="bold" fill="#a80a0a" font-family="Liberation Sans,sans-serif" text-anchor="middle">M</text></svg></div>
<div style="left:0px;top:104px;width:321px;height:773px;background:#1d1d1d"></div>
<div style="left:0px;top:104px;width:239px;height:44px;background:linear-gradient(#4d5353 0,#474d4d 19px,#414747 27px,#353b3b 42px,#2a2c2c 42px);"></div>
<div style="left:0px;top:112px;width:155px;height:19px;background:#2f3131"></div>
<div style="left:1.5px;top:112.5px;width:18px;height:18px;border-radius:9px;background:linear-gradient(#6d463a,#4e2e26);border:1.500px solid #1c1a1a;box-shadow:0 1px 2px rgba(0,0,0,.8)"></div>
<span class="t c" style="left:10.5px;top:122px;font-size:9.500px;color:#e8d2ca">O</span>
<span class="t seg" style="left:22px;top:121.2px;font-size:11px;color:#e4e6ee">Video</span>
<div style="left:155px;top:112px;width:19px;height:19px;border-radius:10px;background:radial-gradient(circle at 50% 35%,#6a6a6a,#3a3a3a);border:1px solid #222"></div>
<svg class="a" style="left:155px;top:112px" width="19" height="19"><path d="M5 15.5A7.800 7.800 0 0 1 5 3.500" fill="none" stroke="#e8e8e8" stroke-width="1.400"/></svg>
<span class="t c seg" style="left:165.3px;top:122px;font-size:10.500px;color:#e8e8e8">V</span>
<div style="left:179px;top:112px;width:19px;height:19px;background:#2d2d2d;border:1px solid #1a1a1a"></div>
<div style="left:197px;top:112px;width:19px;height:19px;background:#2d2d2d;border:1px solid #1a1a1a"></div>
<span class="t c seg" style="left:188.5px;top:122px;font-size:10px;color:#b05a28">M</span>
<span class="t c seg" style="left:206.5px;top:122px;font-size:10px;color:#d0981c">S</span>
<div style="left:239px;top:104px;width:18px;height:44px;background:#2a3030"></div>
<div style="left:239px;top:104px;width:18px;height:42px;background:linear-gradient(#9ca6a6,#7e8888 55%,#687272);border-radius:0 0 9px 9px / 0 0 5px 5px"></div>
<span class="t c seg" style="left:248px;top:120.5px;font-size:11.500px;color:#eef2f2">3</span>
<div style="left:257px;top:104px;width:14px;height:44px;background:#252727"></div>
<div style="left:259px;top:110px;width:4px;height:32px;background:repeating-linear-gradient(#191b19 0,#191b19 1px,#2b2d2b 1px,#2b2d2b 3px)"></div>
<div style="left:265px;top:110px;width:4px;height:32px;background:repeating-linear-gradient(#191b19 0,#191b19 1px,#2b2d2b 1px,#2b2d2b 3px)"></div>
<div style="left:271px;top:104px;width:1px;height:44px;background:#0c0c0c"></div>
<div style="left:272px;top:104px;width:41px;height:42px;background:linear-gradient(#272c2c,#1b2020)"></div>
<div style="left:272px;top:146px;width:41px;height:2px;background:#141616"></div>
<div style="left:0px;top:148px;width:239px;height:44px;background:linear-gradient(#4d5353 0,#474d4d 19px,#414747 27px,#353b3b 42px,#2a2c2c 42px);clip-path:polygon(0 0,100% 0,100% 100%,11px 100%,0 33px);"></div>
<svg class="a" style="left:0px;top:180px" width="13" height="13"><path d="M0 .8L11.500 12.300" stroke="#d8d84a" stroke-width="1"/></svg>
<div style="left:0px;top:156px;width:155px;height:19px;background:#2f3131"></div>
<div style="left:1.5px;top:156.5px;width:18px;height:18px;border-radius:9px;background:linear-gradient(#6d463a,#4e2e26);border:1.500px solid #1c1a1a;box-shadow:0 1px 2px rgba(0,0,0,.8)"></div>
<span class="t c" style="left:10.5px;top:165.5px;font-size:12px;color:#e4ccc6">A</span>
<span class="t seg" style="left:22px;top:165.2px;font-size:11px;color:#d9dc55">Folder Narrator</span>
<div style="left:155px;top:156px;width:19px;height:19px;border-radius:10px;background:radial-gradient(circle at 50% 35%,#6a6a6a,#3a3a3a);border:1px solid #222"></div>
<svg class="a" style="left:155px;top:156px" width="19" height="19"><path d="M5 15.5A7.800 7.800 0 0 1 5 3.500" fill="none" stroke="#e8e8e8" stroke-width="1.400"/></svg>
<span class="t c seg" style="left:165.3px;top:166px;font-size:10.500px;color:#e8e8e8">V</span>
<div style="left:179px;top:156px;width:19px;height:19px;background:#2d2d2d;border:1px solid #1a1a1a"></div>
<div style="left:197px;top:156px;width:19px;height:19px;background:#2d2d2d;border:1px solid #1a1a1a"></div>
<span class="t c seg" style="left:188.5px;top:166px;font-size:10px;color:#b05a28">M</span>
<span class="t c seg" style="left:206.5px;top:166px;font-size:10px;color:#d0981c">S</span>
<div style="left:239px;top:148px;width:18px;height:44px;background:#2a3030"></div>
<div style="left:239px;top:148px;width:18px;height:42px;background:linear-gradient(#9ca6a6,#7e8888 55%,#687272);border-radius:0 0 9px 9px / 0 0 5px 5px"></div>
<span class="t c seg" style="left:248px;top:164.5px;font-size:11.500px;color:#eef2f2">4</span>
<div style="left:257px;top:148px;width:14px;height:44px;background:#252727"></div>
<div style="left:259px;top:154px;width:4px;height:32px;background:repeating-linear-gradient(#191b19 0,#191b19 1px,#2b2d2b 1px,#2b2d2b 3px)"></div>
<div style="left:265px;top:154px;width:4px;height:32px;background:repeating-linear-gradient(#191b19 0,#191b19 1px,#2b2d2b 1px,#2b2d2b 3px)"></div>
<div style="left:271px;top:148px;width:1px;height:44px;background:#0c0c0c"></div>
<div style="left:272px;top:148px;width:41px;height:42px;background:linear-gradient(#272c2c,#1b2020)"></div>
<div style="left:272px;top:190px;width:41px;height:2px;background:#141616"></div>
<div style="left:11px;top:192px;width:228px;height:44px;background:linear-gradient(#4d5353 0,#474d4d 19px,#414747 27px,#353b3b 42px,#2a2c2c 42px);clip-path:polygon(0 0,100% 0,100% 100%,11px 100%,0 33px);"></div>
<svg class="a" style="left:11px;top:224px" width="13" height="13"><path d="M0 .8L11.500 12.300" stroke="#d8d84a" stroke-width="1"/></svg>
<div style="left:14px;top:200px;width:141px;height:19px;background:#2f3131;border-radius:9.500px 0 0 9.500px"></div>
<div style="left:14.5px;top:200.5px;width:18px;height:18px;border-radius:9px;background:linear-gradient(#6d463a,#4e2e26);border:1.500px solid #1c1a1a;box-shadow:0 1px 2px rgba(0,0,0,.8)"></div>
<span class="t c" style="left:23.5px;top:209.5px;font-size:12px;color:#e4ccc6">A</span>
<span class="t seg" style="left:35px;top:209.2px;font-size:11px;color:#d9dc55">Folder Main</span>
<div style="left:155px;top:200px;width:19px;height:19px;border-radius:10px;background:radial-gradient(circle at 50% 35%,#6a6a6a,#3a3a3a);border:1px solid #222"></div>
<svg class="a" style="left:155px;top:200px" width="19" height="19"><path d="M5 15.5A7.800 7.800 0 0 1 5 3.500" fill="none" stroke="#e8e8e8" stroke-width="1.400"/></svg>
<span class="t c seg" style="left:165.3px;top:210px;font-size:10.500px;color:#e8e8e8">V</span>
<div style="left:179px;top:200px;width:19px;height:19px;background:#2d2d2d;border:1px solid #1a1a1a"></div>
<div style="left:197px;top:200px;width:19px;height:19px;background:#2d2d2d;border:1px solid #1a1a1a"></div>
<span class="t c seg" style="left:188.5px;top:210px;font-size:10px;color:#b05a28">M</span>
<span class="t c seg" style="left:206.5px;top:210px;font-size:10px;color:#d0981c">S</span>
<div style="left:239px;top:192px;width:18px;height:44px;background:#2a3030"></div>
<div style="left:239px;top:192px;width:18px;height:42px;background:linear-gradient(#9ca6a6,#7e8888 55%,#687272);border-radius:0 0 9px 9px / 0 0 5px 5px"></div>
<span class="t c seg" style="left:248px;top:208.5px;font-size:11.500px;color:#eef2f2">5</span>
<div style="left:257px;top:192px;width:14px;height:44px;background:#252727"></div>
<div style="left:259px;top:198px;width:4px;height:32px;background:repeating-linear-gradient(#191b19 0,#191b19 1px,#2b2d2b 1px,#2b2d2b 3px)"></div>
<div style="left:265px;top:198px;width:4px;height:32px;background:repeating-linear-gradient(#191b19 0,#191b19 1px,#2b2d2b 1px,#2b2d2b 3px)"></div>
<div style="left:271px;top:192px;width:1px;height:44px;background:#0c0c0c"></div>
<div style="left:272px;top:192px;width:41px;height:42px;background:linear-gradient(#272c2c,#1b2020)"></div>
<div style="left:272px;top:234px;width:41px;height:2px;background:#141616"></div>
<div style="left:11px;top:236px;width:228px;height:44px;background:linear-gradient(#4d5353 0,#474d4d 19px,#414747 27px,#353b3b 42px,#2a2c2c 42px);"></div>
<div style="left:14px;top:244px;width:141px;height:19px;background:#2f3131;border-radius:9.500px 0 0 9.500px"></div>
<div style="left:14.5px;top:244.5px;width:18px;height:18px;border-radius:9px;background:linear-gradient(#6d463a,#4e2e26);border:1.500px solid #1c1a1a;box-shadow:0 1px 2px rgba(0,0,0,.8)"></div>
<span class="t c" style="left:23.5px;top:254px;font-size:9.500px;color:#e8d2ca">O</span>
<span class="t seg" style="left:35px;top:253.2px;font-size:10.600px;color:#e4e6ee">закадровая 1</span>
<div style="left:155px;top:244px;width:19px;height:19px;border-radius:10px;background:radial-gradient(circle at 50% 35%,#6a6a6a,#3a3a3a);border:1px solid #222"></div>
<svg class="a" style="left:155px;top:244px" width="19" height="19"><path d="M5 15.5A7.800 7.800 0 0 1 5 3.500" fill="none" stroke="#e8e8e8" stroke-width="1.400"/></svg>
<span class="t c seg" style="left:165.3px;top:254px;font-size:10.500px;color:#e8e8e8">V</span>
<div style="left:179px;top:244px;width:19px;height:19px;background:#2d2d2d;border:1px solid #1a1a1a"></div>
<div style="left:197px;top:244px;width:19px;height:19px;background:#2d2d2d;border:1px solid #1a1a1a"></div>
<span class="t c seg" style="left:188.5px;top:254px;font-size:10px;color:#b05a28">M</span>
<span class="t c seg" style="left:206.5px;top:254px;font-size:10px;color:#d0981c">S</span>
<div style="left:239px;top:236px;width:18px;height:44px;background:#2a3030"></div>
<div style="left:239px;top:236px;width:18px;height:42px;background:linear-gradient(#9ca6a6,#7e8888 55%,#687272);border-radius:0 0 9px 9px / 0 0 5px 5px"></div>
<span class="t c seg" style="left:248px;top:252.5px;font-size:11.500px;color:#eef2f2">6</span>
<div style="left:257px;top:236px;width:14px;height:44px;background:#252727"></div>
<div style="left:259px;top:242px;width:4px;height:32px;background:repeating-linear-gradient(#191b19 0,#191b19 1px,#2b2d2b 1px,#2b2d2b 3px)"></div>
<div style="left:265px;top:242px;width:4px;height:32px;background:repeating-linear-gradient(#191b19 0,#191b19 1px,#2b2d2b 1px,#2b2d2b 3px)"></div>
<div style="left:271px;top:236px;width:1px;height:44px;background:#0c0c0c"></div>
<div style="left:272px;top:236px;width:41px;height:42px;background:linear-gradient(#272c2c,#1b2020)"></div>
<div style="left:272px;top:278px;width:41px;height:2px;background:#141616"></div>
<div style="left:11px;top:280px;width:228px;height:44px;background:linear-gradient(#4d5353 0,#474d4d 19px,#414747 27px,#353b3b 42px,#2a2c2c 42px);"></div>
<div style="left:14px;top:288px;width:141px;height:19px;background:#2f3131;border-radius:9.500px 0 0 9.500px"></div>
<div style="left:14.5px;top:288.5px;width:18px;height:18px;border-radius:9px;background:linear-gradient(#6d463a,#4e2e26);border:1.500px solid #1c1a1a;box-shadow:0 1px 2px rgba(0,0,0,.8)"></div>
<span class="t c" style="left:23.5px;top:298px;font-size:9.500px;color:#e8d2ca">O</span>
<span class="t seg" style="left:35px;top:297.2px;font-size:10.600px;color:#e4e6ee">Артур</span>
<div style="left:155px;top:288px;width:19px;height:19px;border-radius:10px;background:radial-gradient(circle at 50% 35%,#6a6a6a,#3a3a3a);border:1px solid #222"></div>
<svg class="a" style="left:155px;top:288px" width="19" height="19"><path d="M5 15.5A7.800 7.800 0 0 1 5 3.500" fill="none" stroke="#e8e8e8" stroke-width="1.400"/></svg>
<span class="t c seg" style="left:165.3px;top:298px;font-size:10.500px;color:#e8e8e8">V</span>
<div style="left:179px;top:288px;width:19px;height:19px;background:#2d2d2d;border:1px solid #1a1a1a"></div>
<div style="left:197px;top:288px;width:19px;height:19px;background:#2d2d2d;border:1px solid #1a1a1a"></div>
<span class="t c seg" style="left:188.5px;top:298px;font-size:10px;color:#b05a28">M</span>
<span class="t c seg" style="left:206.5px;top:298px;font-size:10px;color:#d0981c">S</span>
<div style="left:239px;top:280px;width:18px;height:44px;background:#2a3030"></div>
<div style="left:239px;top:280px;width:18px;height:42px;background:linear-gradient(#9ca6a6,#7e8888 55%,#687272);border-radius:0 0 9px 9px / 0 0 5px 5px"></div>
<span class="t c seg" style="left:248px;top:296.5px;font-size:11.500px;color:#eef2f2">7</span>
<div style="left:257px;top:280px;width:14px;height:44px;background:#252727"></div>
<div style="left:259px;top:286px;width:4px;height:32px;background:repeating-linear-gradient(#191b19 0,#191b19 1px,#2b2d2b 1px,#2b2d2b 3px)"></div>
<div style="left:265px;top:286px;width:4px;height:32px;background:repeating-linear-gradient(#191b19 0,#191b19 1px,#2b2d2b 1px,#2b2d2b 3px)"></div>
<div style="left:271px;top:280px;width:1px;height:44px;background:#0c0c0c"></div>
<div style="left:272px;top:280px;width:41px;height:42px;background:linear-gradient(#272c2c,#1b2020)"></div>
<div style="left:272px;top:322px;width:41px;height:2px;background:#141616"></div>
<div style="left:11px;top:324px;width:228px;height:44px;background:linear-gradient(#4d5353 0,#474d4d 19px,#414747 27px,#353b3b 42px,#2a2c2c 42px);"></div>
<div style="left:0px;top:366px;width:11px;height:2px;background:#3d8fd0"></div>
<div style="left:11px;top:324px;width:228px;height:1px;background:#a8b0b0"></div>
<div style="left:14px;top:332px;width:141px;height:19px;background:#2f3131;border-radius:9.500px 0 0 9.500px"></div>
<div style="left:14.5px;top:332.5px;width:18px;height:18px;border-radius:9px;background:linear-gradient(#6d463a,#4e2e26);border:1.500px solid #1c1a1a;box-shadow:0 1px 2px rgba(0,0,0,.8)"></div>
<span class="t c" style="left:23.5px;top:342px;font-size:9.500px;color:#e8d2ca">O</span>
<span class="t seg" style="left:35px;top:341.2px;font-size:10.600px;color:#4a93d6">Марочко</span>
<div style="left:155px;top:332px;width:19px;height:19px;border-radius:10px;background:radial-gradient(circle at 50% 35%,#6a6a6a,#3a3a3a);border:1px solid #222"></div>
<svg class="a" style="left:155px;top:332px" width="19" height="19"><path d="M5 15.5A7.800 7.800 0 0 1 5 3.500" fill="none" stroke="#e8e8e8" stroke-width="1.400"/></svg>
<span class="t c seg" style="left:165.3px;top:342px;font-size:10.500px;color:#e8e8e8">V</span>
<div style="left:179px;top:332px;width:19px;height:19px;background:#2d2d2d;border:1px solid #1a1a1a"></div>
<div style="left:197px;top:332px;width:19px;height:19px;background:#2d2d2d;border:1px solid #1a1a1a"></div>
<span class="t c seg" style="left:188.5px;top:342px;font-size:10px;color:#b05a28">M</span>
<span class="t c seg" style="left:206.5px;top:342px;font-size:10px;color:#d0981c">S</span>
<div style="left:239px;top:324px;width:18px;height:44px;background:#2a3030"></div>
<div style="left:239px;top:324px;width:18px;height:42px;background:linear-gradient(#9ca6a6,#7e8888 55%,#687272);border-radius:0 0 9px 9px / 0 0 5px 5px"></div>
<span class="t c seg" style="left:248px;top:340.5px;font-size:11.500px;color:#eef2f2">8</span>
<div style="left:257px;top:324px;width:14px;height:44px;background:#252727"></div>
<div style="left:259px;top:330px;width:4px;height:32px;background:repeating-linear-gradient(#191b19 0,#191b19 1px,#2b2d2b 1px,#2b2d2b 3px)"></div>
<div style="left:265px;top:330px;width:4px;height:32px;background:repeating-linear-gradient(#191b19 0,#191b19 1px,#2b2d2b 1px,#2b2d2b 3px)"></div>
<div style="left:271px;top:324px;width:1px;height:44px;background:#0c0c0c"></div>
<div style="left:272px;top:324px;width:41px;height:42px;background:linear-gradient(#272c2c,#1b2020)"></div>
<div style="left:272px;top:366px;width:41px;height:2px;background:#141616"></div>
<div style="left:0px;top:368px;width:239px;height:44px;background:linear-gradient(#4d5353 0,#474d4d 19px,#414747 27px,#353b3b 42px,#2a2c2c 42px);clip-path:polygon(0 0,100% 0,100% 100%,11px 100%,0 33px);"></div>
<svg class="a" style="left:0px;top:400px" width="13" height="13"><path d="M0 .8L11.500 12.300" stroke="#d8d84a" stroke-width="1"/></svg>
<div style="left:0px;top:376px;width:155px;height:19px;background:#2f3131"></div>
<div style="left:1.5px;top:376.5px;width:18px;height:18px;border-radius:9px;background:linear-gradient(#6d463a,#4e2e26);border:1.500px solid #1c1a1a;box-shadow:0 1px 2px rgba(0,0,0,.8)"></div>
<span class="t c" style="left:10.5px;top:385.5px;font-size:12px;color:#e4ccc6">A</span>
<span class="t seg" style="left:22px;top:385.2px;font-size:11px;color:#d9dc55">Folder Music</span>
<div style="left:155px;top:376px;width:19px;height:19px;border-radius:10px;background:radial-gradient(circle at 50% 35%,#6a6a6a,#3a3a3a);border:1px solid #222"></div>
<svg class="a" style="left:155px;top:376px" width="19" height="19"><path d="M5 15.5A7.800 7.800 0 0 1 5 3.500" fill="none" stroke="#e8e8e8" stroke-width="1.400"/></svg>
<span class="t c seg" style="left:165.3px;top:386px;font-size:10.500px;color:#e8e8e8">V</span>
<div style="left:179px;top:376px;width:19px;height:19px;background:#2d2d2d;border:1px solid #1a1a1a"></div>
<div style="left:197px;top:376px;width:19px;height:19px;background:#2d2d2d;border:1px solid #1a1a1a"></div>
<span class="t c seg" style="left:188.5px;top:386px;font-size:10px;color:#b05a28">M</span>
<span class="t c seg" style="left:206.5px;top:386px;font-size:10px;color:#d0981c">S</span>
<div style="left:239px;top:368px;width:18px;height:44px;background:#2a3030"></div>
<div style="left:239px;top:368px;width:18px;height:42px;background:linear-gradient(#9ca6a6,#7e8888 55%,#687272);border-radius:0 0 9px 9px / 0 0 5px 5px"></div>
<span class="t c seg" style="left:248px;top:384.5px;font-size:11.500px;color:#eef2f2">9</span>
<div style="left:257px;top:368px;width:14px;height:44px;background:#252727"></div>
<div style="left:259px;top:374px;width:4px;height:32px;background:repeating-linear-gradient(#191b19 0,#191b19 1px,#2b2d2b 1px,#2b2d2b 3px)"></div>
<div style="left:265px;top:374px;width:4px;height:32px;background:repeating-linear-gradient(#191b19 0,#191b19 1px,#2b2d2b 1px,#2b2d2b 3px)"></div>
<div style="left:271px;top:368px;width:1px;height:44px;background:#0c0c0c"></div>
<div style="left:272px;top:368px;width:41px;height:42px;background:linear-gradient(#272c2c,#1b2020)"></div>
<div style="left:272px;top:410px;width:41px;height:2px;background:#141616"></div>
<div style="left:11px;top:412px;width:228px;height:44px;background:linear-gradient(#4d5353 0,#474d4d 19px,#414747 27px,#353b3b 42px,#2a2c2c 42px);"></div>
<div style="left:14px;top:420px;width:141px;height:19px;background:#2f3131;border-radius:9.500px 0 0 9.500px"></div>
<div style="left:14.5px;top:420.5px;width:18px;height:18px;border-radius:9px;background:linear-gradient(#6d463a,#4e2e26);border:1.500px solid #1c1a1a;box-shadow:0 1px 2px rgba(0,0,0,.8)"></div>
<span class="t c" style="left:23.5px;top:430px;font-size:9.500px;color:#e8d2ca">O</span>
<span class="t seg" style="left:35px;top:429.2px;font-size:11px;color:#e4e6ee">Music 1</span>
<div style="left:155px;top:420px;width:19px;height:19px;border-radius:10px;background:radial-gradient(circle at 50% 35%,#6a6a6a,#3a3a3a);border:1px solid #222"></div>
<svg class="a" style="left:155px;top:420px" width="19" height="19"><path d="M5 15.5A7.800 7.800 0 0 1 5 3.500" fill="none" stroke="#e8e8e8" stroke-width="1.400"/></svg>
<span class="t c seg" style="left:165.3px;top:430px;font-size:10.500px;color:#e8e8e8">V</span>
<div style="left:179px;top:420px;width:19px;height:19px;background:#2d2d2d;border:1px solid #1a1a1a"></div>
<div style="left:197px;top:420px;width:19px;height:19px;background:#2d2d2d;border:1px solid #1a1a1a"></div>
<span class="t c seg" style="left:188.5px;top:430px;font-size:10px;color:#b05a28">M</span>
<span class="t c seg" style="left:206.5px;top:430px;font-size:10px;color:#d0981c">S</span>
<div style="left:239px;top:412px;width:18px;height:44px;background:#2a3030"></div>
<div style="left:239px;top:412px;width:18px;height:42px;background:linear-gradient(#9ca6a6,#7e8888 55%,#687272);border-radius:0 0 9px 9px / 0 0 5px 5px"></div>
<span class="t c seg" style="left:248px;top:428.5px;font-size:11.500px;color:#eef2f2">10</span>
<div style="left:257px;top:412px;width:14px;height:44px;background:#252727"></div>
<div style="left:259px;top:418px;width:4px;height:32px;background:repeating-linear-gradient(#191b19 0,#191b19 1px,#2b2d2b 1px,#2b2d2b 3px)"></div>
<div style="left:265px;top:418px;width:4px;height:32px;background:repeating-linear-gradient(#191b19 0,#191b19 1px,#2b2d2b 1px,#2b2d2b 3px)"></div>
<div style="left:271px;top:412px;width:1px;height:44px;background:#0c0c0c"></div>
<div style="left:272px;top:412px;width:41px;height:42px;background:linear-gradient(#272c2c,#1b2020)"></div>
<div style="left:272px;top:454px;width:41px;height:2px;background:#141616"></div>
<div style="left:11px;top:456px;width:228px;height:44px;background:linear-gradient(#4d5353 0,#474d4d 19px,#414747 27px,#353b3b 42px,#2a2c2c 42px);"></div>
<div style="left:14px;top:464px;width:141px;height:19px;background:#2f3131;border-radius:9.500px 0 0 9.500px"></div>
<div style="left:14.5px;top:464.5px;width:18px;height:18px;border-radius:9px;background:linear-gradient(#6d463a,#4e2e26);border:1.500px solid #1c1a1a;box-shadow:0 1px 2px rgba(0,0,0,.8)"></div>
<span class="t c" style="left:23.5px;top:474px;font-size:9.500px;color:#e8d2ca">O</span>
<span class="t seg" style="left:35px;top:473.2px;font-size:11px;color:#e4e6ee">Music 1</span>
<div style="left:155px;top:464px;width:19px;height:19px;border-radius:10px;background:radial-gradient(circle at 50% 35%,#6a6a6a,#3a3a3a);border:1px solid #222"></div>
<svg class="a" style="left:155px;top:464px" width="19" height="19"><path d="M5 15.5A7.800 7.800 0 0 1 5 3.500" fill="none" stroke="#e8e8e8" stroke-width="1.400"/></svg>
<span class="t c seg" style="left:165.3px;top:474px;font-size:10.500px;color:#e8e8e8">V</span>
<div style="left:179px;top:464px;width:19px;height:19px;background:#2d2d2d;border:1px solid #1a1a1a"></div>
<div style="left:197px;top:464px;width:19px;height:19px;background:#2d2d2d;border:1px solid #1a1a1a"></div>
<span class="t c seg" style="left:188.5px;top:474px;font-size:10px;color:#b05a28">M</span>
<span class="t c seg" style="left:206.5px;top:474px;font-size:10px;color:#d0981c">S</span>
<div style="left:239px;top:456px;width:18px;height:44px;background:#2a3030"></div>
<div style="left:239px;top:456px;width:18px;height:42px;background:linear-gradient(#9ca6a6,#7e8888 55%,#687272);border-radius:0 0 9px 9px / 0 0 5px 5px"></div>
<span class="t c seg" style="left:248px;top:472.5px;font-size:11.500px;color:#eef2f2">11</span>
<div style="left:257px;top:456px;width:14px;height:44px;background:#252727"></div>
<div style="left:259px;top:462px;width:4px;height:32px;background:repeating-linear-gradient(#191b19 0,#191b19 1px,#2b2d2b 1px,#2b2d2b 3px)"></div>
<div style="left:265px;top:462px;width:4px;height:32px;background:repeating-linear-gradient(#191b19 0,#191b19 1px,#2b2d2b 1px,#2b2d2b 3px)"></div>
<div style="left:271px;top:456px;width:1px;height:44px;background:#0c0c0c"></div>
<div style="left:272px;top:456px;width:41px;height:42px;background:linear-gradient(#272c2c,#1b2020)"></div>
<div style="left:272px;top:498px;width:41px;height:2px;background:#141616"></div>
<div style="left:11px;top:500px;width:228px;height:44px;background:linear-gradient(#4d5353 0,#474d4d 19px,#414747 27px,#353b3b 42px,#2a2c2c 42px);"></div>
<div style="left:14px;top:508px;width:141px;height:19px;background:#2f3131;border-radius:9.500px 0 0 9.500px"></div>
<div style="left:14.5px;top:508.5px;width:18px;height:18px;border-radius:9px;background:linear-gradient(#6d463a,#4e2e26);border:1.500px solid #1c1a1a;box-shadow:0 1px 2px rgba(0,0,0,.8)"></div>
<span class="t c" style="left:23.5px;top:518px;font-size:9.500px;color:#e8d2ca">O</span>
<span class="t seg" style="left:35px;top:517.2px;font-size:11px;color:#e4e6ee">Music 2</span>
<div style="left:155px;top:508px;width:19px;height:19px;border-radius:10px;background:radial-gradient(circle at 50% 35%,#6a6a6a,#3a3a3a);border:1px solid #222"></div>
<svg class="a" style="left:155px;top:508px" width="19" height="19"><path d="M5 15.5A7.800 7.800 0 0 1 5 3.500" fill="none" stroke="#e8e8e8" stroke-width="1.400"/></svg>
<span class="t c seg" style="left:165.3px;top:518px;font-size:10.500px;color:#e8e8e8">V</span>
<div style="left:179px;top:508px;width:19px;height:19px;background:#2d2d2d;border:1px solid #1a1a1a"></div>
<div style="left:197px;top:508px;width:19px;height:19px;background:#2d2d2d;border:1px solid #1a1a1a"></div>
<span class="t c seg" style="left:188.5px;top:518px;font-size:10px;color:#b05a28">M</span>
<span class="t c seg" style="left:206.5px;top:518px;font-size:10px;color:#d0981c">S</span>
<div style="left:239px;top:500px;width:18px;height:44px;background:#2a3030"></div>
<div style="left:239px;top:500px;width:18px;height:42px;background:linear-gradient(#9ca6a6,#7e8888 55%,#687272);border-radius:0 0 9px 9px / 0 0 5px 5px"></div>
<span class="t c seg" style="left:248px;top:516.5px;font-size:11.500px;color:#eef2f2">12</span>
<div style="left:257px;top:500px;width:14px;height:44px;background:#252727"></div>
<div style="left:259px;top:506px;width:4px;height:32px;background:repeating-linear-gradient(#191b19 0,#191b19 1px,#2b2d2b 1px,#2b2d2b 3px)"></div>
<div style="left:265px;top:506px;width:4px;height:32px;background:repeating-linear-gradient(#191b19 0,#191b19 1px,#2b2d2b 1px,#2b2d2b 3px)"></div>
<div style="left:271px;top:500px;width:1px;height:44px;background:#0c0c0c"></div>
<div style="left:272px;top:500px;width:41px;height:42px;background:linear-gradient(#272c2c,#1b2020)"></div>
<div style="left:272px;top:542px;width:41px;height:2px;background:#141616"></div>
<div style="left:11px;top:544px;width:228px;height:44px;background:linear-gradient(#4d5353 0,#474d4d 19px,#414747 27px,#353b3b 42px,#2a2c2c 42px);"></div>
<div style="left:14px;top:552px;width:141px;height:19px;background:#2f3131;border-radius:9.500px 0 0 9.500px"></div>
<div style="left:14.5px;top:552.5px;width:18px;height:18px;border-radius:9px;background:linear-gradient(#6d463a,#4e2e26);border:1.500px solid #1c1a1a;box-shadow:0 1px 2px rgba(0,0,0,.8)"></div>
<span class="t c" style="left:23.5px;top:561.5px;font-size:12px;color:#e4ccc6">A</span>
<span class="t seg" style="left:35px;top:561.2px;font-size:11px;color:#e4e6ee">Mixdown</span>
<div style="left:155px;top:552px;width:19px;height:19px;border-radius:10px;background:radial-gradient(circle at 50% 35%,#6a6a6a,#3a3a3a);border:1px solid #222"></div>
<svg class="a" style="left:155px;top:552px" width="19" height="19"><path d="M5 15.5A7.800 7.800 0 0 1 5 3.500" fill="none" stroke="#e8e8e8" stroke-width="1.400"/></svg>
<span class="t c seg" style="left:165.3px;top:562px;font-size:10.500px;color:#e8e8e8">V</span>
<div style="left:179px;top:552px;width:19px;height:19px;background:#2d2d2d;border:1px solid #1a1a1a"></div>
<div style="left:197px;top:552px;width:19px;height:19px;background:#2d2d2d;border:1px solid #1a1a1a"></div>
<span class="t c seg" style="left:188.5px;top:562px;font-size:10px;color:#b05a28">M</span>
<span class="t c seg" style="left:206.5px;top:562px;font-size:10px;color:#d0981c">S</span>
<div style="left:239px;top:544px;width:18px;height:44px;background:#2a3030"></div>
<div style="left:239px;top:544px;width:18px;height:42px;background:linear-gradient(#9ca6a6,#7e8888 55%,#687272);border-radius:0 0 9px 9px / 0 0 5px 5px"></div>
<span class="t c seg" style="left:248px;top:560.5px;font-size:11.500px;color:#eef2f2">13</span>
<div style="left:257px;top:544px;width:14px;height:44px;background:#252727"></div>
<div style="left:259px;top:550px;width:4px;height:32px;background:repeating-linear-gradient(#191b19 0,#191b19 1px,#2b2d2b 1px,#2b2d2b 3px)"></div>
<div style="left:265px;top:550px;width:4px;height:32px;background:repeating-linear-gradient(#191b19 0,#191b19 1px,#2b2d2b 1px,#2b2d2b 3px)"></div>
<div style="left:271px;top:544px;width:1px;height:44px;background:#0c0c0c"></div>
<div style="left:272px;top:544px;width:41px;height:42px;background:linear-gradient(#272c2c,#1b2020)"></div>
<div style="left:272px;top:586px;width:41px;height:2px;background:#141616"></div>
<div style="left:11px;top:588px;width:228px;height:44px;background:linear-gradient(#4d5353 0,#474d4d 19px,#414747 27px,#353b3b 42px,#2a2c2c 42px);"></div>
<div style="left:0px;top:630px;width:11px;height:2px;background:#3d8fd0"></div>
<div style="left:14px;top:596px;width:141px;height:19px;background:#2f3131;border-radius:9.500px 0 0 9.500px"></div>
<div style="left:14.5px;top:596.5px;width:18px;height:18px;border-radius:9px;background:linear-gradient(#6d463a,#4e2e26);border:1.500px solid #1c1a1a;box-shadow:0 1px 2px rgba(0,0,0,.8)"></div>
<span class="t c" style="left:23.5px;top:606px;font-size:9.500px;color:#e8d2ca">O</span>
<span class="t seg" style="left:35px;top:605.2px;font-size:11px;color:#4a93d6">Music 3</span>
<div style="left:155px;top:596px;width:19px;height:19px;border-radius:10px;background:radial-gradient(circle at 50% 35%,#6a6a6a,#3a3a3a);border:1px solid #222"></div>
<svg class="a" style="left:155px;top:596px" width="19" height="19"><path d="M5 15.5A7.800 7.800 0 0 1 5 3.500" fill="none" stroke="#e8e8e8" stroke-width="1.400"/></svg>
<span class="t c seg" style="left:165.3px;top:606px;font-size:10.500px;color:#e8e8e8">V</span>
<div style="left:179px;top:596px;width:19px;height:19px;background:#2d2d2d;border:1px solid #1a1a1a"></div>
<div style="left:197px;top:596px;width:19px;height:19px;background:#2d2d2d;border:1px solid #1a1a1a"></div>
<span class="t c seg" style="left:188.5px;top:606px;font-size:10px;color:#b05a28">M</span>
<span class="t c seg" style="left:206.5px;top:606px;font-size:10px;color:#d0981c">S</span>
<div style="left:239px;top:588px;width:18px;height:44px;background:#2a3030"></div>
<div style="left:239px;top:588px;width:18px;height:42px;background:linear-gradient(#9ca6a6,#7e8888 55%,#687272);border-radius:0 0 9px 9px / 0 0 5px 5px"></div>
<span class="t c seg" style="left:248px;top:604.5px;font-size:11.500px;color:#eef2f2">14</span>
<div style="left:257px;top:588px;width:14px;height:44px;background:#252727"></div>
<div style="left:259px;top:594px;width:4px;height:32px;background:repeating-linear-gradient(#191b19 0,#191b19 1px,#2b2d2b 1px,#2b2d2b 3px)"></div>
<div style="left:265px;top:594px;width:4px;height:32px;background:repeating-linear-gradient(#191b19 0,#191b19 1px,#2b2d2b 1px,#2b2d2b 3px)"></div>
<div style="left:271px;top:588px;width:1px;height:44px;background:#0c0c0c"></div>
<div style="left:272px;top:588px;width:41px;height:42px;background:linear-gradient(#272c2c,#1b2020)"></div>
<div style="left:272px;top:630px;width:41px;height:2px;background:#141616"></div>
<div style="left:0px;top:632px;width:239px;height:44px;background:linear-gradient(#4d5353 0,#474d4d 19px,#414747 27px,#353b3b 42px,#2a2c2c 42px);clip-path:polygon(0 0,100% 0,100% 100%,11px 100%,0 33px);"></div>
<svg class="a" style="left:0px;top:664px" width="13" height="13"><path d="M0 .8L11.500 12.300" stroke="#d8d84a" stroke-width="1"/></svg>
<div style="left:0px;top:640px;width:155px;height:19px;background:#2f3131"></div>
<div style="left:1.5px;top:640.5px;width:18px;height:18px;border-radius:9px;background:linear-gradient(#6d463a,#4e2e26);border:1.500px solid #1c1a1a;box-shadow:0 1px 2px rgba(0,0,0,.8)"></div>
<span class="t c" style="left:10.5px;top:650px;font-size:9.500px;color:#e8d2ca">O</span>
<span class="t seg" style="left:22px;top:649.2px;font-size:11px;color:#d9dc55">Folder Fx</span>
<div style="left:155px;top:640px;width:19px;height:19px;border-radius:10px;background:radial-gradient(circle at 50% 35%,#6a6a6a,#3a3a3a);border:1px solid #222"></div>
<svg class="a" style="left:155px;top:640px" width="19" height="19"><path d="M5 15.5A7.800 7.800 0 0 1 5 3.500" fill="none" stroke="#e8e8e8" stroke-width="1.400"/></svg>
<span class="t c seg" style="left:165.3px;top:650px;font-size:10.500px;color:#e8e8e8">V</span>
<div style="left:179px;top:640px;width:19px;height:19px;background:#2d2d2d;border:1px solid #1a1a1a"></div>
<div style="left:197px;top:640px;width:19px;height:19px;background:#2d2d2d;border:1px solid #1a1a1a"></div>
<span class="t c seg" style="left:188.5px;top:650px;font-size:10px;color:#b05a28">M</span>
<span class="t c seg" style="left:206.5px;top:650px;font-size:10px;color:#d0981c">S</span>
<div style="left:239px;top:632px;width:18px;height:44px;background:#2a3030"></div>
<div style="left:239px;top:632px;width:18px;height:42px;background:linear-gradient(#9ca6a6,#7e8888 55%,#687272);border-radius:0 0 9px 9px / 0 0 5px 5px"></div>
<span class="t c seg" style="left:248px;top:648.5px;font-size:11.500px;color:#eef2f2">15</span>
<div style="left:257px;top:632px;width:14px;height:44px;background:#252727"></div>
<div style="left:259px;top:638px;width:4px;height:32px;background:repeating-linear-gradient(#191b19 0,#191b19 1px,#2b2d2b 1px,#2b2d2b 3px)"></div>
<div style="left:265px;top:638px;width:4px;height:32px;background:repeating-linear-gradient(#191b19 0,#191b19 1px,#2b2d2b 1px,#2b2d2b 3px)"></div>
<div style="left:271px;top:632px;width:1px;height:44px;background:#0c0c0c"></div>
<div style="left:272px;top:632px;width:41px;height:42px;background:linear-gradient(#272c2c,#1b2020)"></div>
<div style="left:272px;top:674px;width:41px;height:2px;background:#141616"></div>
<div style="left:11px;top:676px;width:228px;height:44px;background:linear-gradient(#9b0000 0,#960000 19px,#800000 27px,#6e0000 42px,#2b2d2d 42px);"></div>
<div style="left:14px;top:684px;width:141px;height:19px;background:#2f3131;border-radius:9.500px 0 0 9.500px"></div>
<div style="left:14.5px;top:684.5px;width:18px;height:18px;border-radius:9px;background:linear-gradient(#6d463a,#4e2e26);border:1.500px solid #1c1a1a;box-shadow:0 1px 2px rgba(0,0,0,.8)"></div>
<span class="t c" style="left:23.5px;top:694px;font-size:9.500px;color:#e8d2ca">O</span>
<span class="t seg" style="left:35px;top:693.2px;font-size:10.600px;color:#e4e6ee">звук с лайв</span>
<div style="left:155px;top:684px;width:19px;height:19px;border-radius:10px;background:radial-gradient(circle at 50% 35%,#6a6a6a,#3a3a3a);border:1px solid #222"></div>
<svg class="a" style="left:155px;top:684px" width="19" height="19"><path d="M5 15.5A7.800 7.800 0 0 1 5 3.500" fill="none" stroke="#e8e8e8" stroke-width="1.400"/></svg>
<span class="t c seg" style="left:165.3px;top:694px;font-size:10.500px;color:#e8e8e8">V</span>
<div style="left:179px;top:684px;width:19px;height:19px;background:#2d2d2d;border:1px solid #1a1a1a"></div>
<div style="left:197px;top:684px;width:19px;height:19px;background:#2d2d2d;border:1px solid #1a1a1a"></div>
<span class="t c seg" style="left:188.5px;top:694px;font-size:10px;color:#b05a28">M</span>
<span class="t c seg" style="left:206.5px;top:694px;font-size:10px;color:#d0981c">S</span>
<div style="left:239px;top:676px;width:18px;height:44px;background:#2a3030"></div>
<div style="left:239px;top:676px;width:18px;height:42px;background:linear-gradient(#a01818,#801010);border-radius:0 0 9px 9px / 0 0 5px 5px"></div>
<span class="t c seg" style="left:248px;top:692.5px;font-size:11.500px;color:#eef2f2">16</span>
<div style="left:257px;top:676px;width:14px;height:44px;background:#252727"></div>
<div style="left:259px;top:682px;width:4px;height:32px;background:repeating-linear-gradient(#191b19 0,#191b19 1px,#2b2d2b 1px,#2b2d2b 3px)"></div>
<div style="left:265px;top:682px;width:4px;height:32px;background:repeating-linear-gradient(#191b19 0,#191b19 1px,#2b2d2b 1px,#2b2d2b 3px)"></div>
<div style="left:271px;top:676px;width:1px;height:44px;background:#0c0c0c"></div>
<div style="left:272px;top:676px;width:41px;height:42px;background:linear-gradient(#272c2c,#1b2020)"></div>
<div style="left:272px;top:718px;width:41px;height:2px;background:#141616"></div>
<div style="left:11px;top:720px;width:228px;height:44px;background:linear-gradient(#9b0000 0,#960000 19px,#800000 27px,#6e0000 42px,#2b2d2d 42px);"></div>
<div style="left:14px;top:728px;width:141px;height:19px;background:#2f3131;border-radius:9.500px 0 0 9.500px"></div>
<div style="left:14.5px;top:728.5px;width:18px;height:18px;border-radius:9px;background:linear-gradient(#6d463a,#4e2e26);border:1.500px solid #1c1a1a;box-shadow:0 1px 2px rgba(0,0,0,.8)"></div>
<span class="t c" style="left:23.5px;top:738px;font-size:9.500px;color:#e8d2ca">O</span>
<span class="t seg" style="left:35px;top:737.2px;font-size:10.600px;color:#e4e6ee">звук эффекты</span>
<div style="left:155px;top:728px;width:19px;height:19px;border-radius:10px;background:radial-gradient(circle at 50% 35%,#6a6a6a,#3a3a3a);border:1px solid #222"></div>
<svg class="a" style="left:155px;top:728px" width="19" height="19"><path d="M5 15.5A7.800 7.800 0 0 1 5 3.500" fill="none" stroke="#e8e8e8" stroke-width="1.400"/></svg>
<span class="t c seg" style="left:165.3px;top:738px;font-size:10.500px;color:#e8e8e8">V</span>
<div style="left:179px;top:728px;width:19px;height:19px;background:#2d2d2d;border:1px solid #1a1a1a"></div>
<div style="left:197px;top:728px;width:19px;height:19px;background:#2d2d2d;border:1px solid #1a1a1a"></div>
<span class="t c seg" style="left:188.5px;top:738px;font-size:10px;color:#b05a28">M</span>
<span class="t c seg" style="left:206.5px;top:738px;font-size:10px;color:#d0981c">S</span>
<div style="left:239px;top:720px;width:18px;height:44px;background:#2a3030"></div>
<div style="left:239px;top:720px;width:18px;height:42px;background:linear-gradient(#a01818,#801010);border-radius:0 0 9px 9px / 0 0 5px 5px"></div>
<span class="t c seg" style="left:248px;top:736.5px;font-size:11.500px;color:#eef2f2">17</span>
<div style="left:257px;top:720px;width:14px;height:44px;background:#252727"></div>
<div style="left:259px;top:726px;width:4px;height:32px;background:repeating-linear-gradient(#191b19 0,#191b19 1px,#2b2d2b 1px,#2b2d2b 3px)"></div>
<div style="left:265px;top:726px;width:4px;height:32px;background:repeating-linear-gradient(#191b19 0,#191b19 1px,#2b2d2b 1px,#2b2d2b 3px)"></div>
<div style="left:271px;top:720px;width:1px;height:44px;background:#0c0c0c"></div>
<div style="left:272px;top:720px;width:41px;height:42px;background:linear-gradient(#272c2c,#1b2020)"></div>
<div style="left:272px;top:762px;width:41px;height:2px;background:#141616"></div>
<div style="left:11px;top:764px;width:228px;height:44px;background:linear-gradient(#0a5c90 0,#0a5888 19px,#074a74 27px,#043a5c 42px,#2b2d2d 42px);"></div>
<div style="left:14px;top:772px;width:141px;height:19px;background:#2f3131;border-radius:9.500px 0 0 9.500px"></div>
<div style="left:14.5px;top:772.5px;width:18px;height:18px;border-radius:9px;background:linear-gradient(#6d463a,#4e2e26);border:1.500px solid #1c1a1a;box-shadow:0 1px 2px rgba(0,0,0,.8)"></div>
<span class="t c" style="left:23.5px;top:782px;font-size:9.500px;color:#e8d2ca">O</span>
<span class="t seg" style="left:35px;top:781.2px;font-size:10.600px;color:#e4e6ee">звук эффекты</span>
<div style="left:155px;top:772px;width:19px;height:19px;border-radius:10px;background:radial-gradient(circle at 50% 35%,#6a6a6a,#3a3a3a);border:1px solid #222"></div>
<svg class="a" style="left:155px;top:772px" width="19" height="19"><path d="M5 15.5A7.800 7.800 0 0 1 5 3.500" fill="none" stroke="#e8e8e8" stroke-width="1.400"/></svg>
<span class="t c seg" style="left:165.3px;top:782px;font-size:10.500px;color:#e8e8e8">V</span>
<div style="left:179px;top:772px;width:19px;height:19px;background:#2d2d2d;border:1px solid #1a1a1a"></div>
<div style="left:197px;top:772px;width:19px;height:19px;background:#2d2d2d;border:1px solid #1a1a1a"></div>
<span class="t c seg" style="left:188.5px;top:782px;font-size:10px;color:#b05a28">M</span>
<span class="t c seg" style="left:206.5px;top:782px;font-size:10px;color:#d0981c">S</span>
<div style="left:239px;top:764px;width:18px;height:44px;background:#2a3030"></div>
<div style="left:239px;top:764px;width:18px;height:42px;background:linear-gradient(#1a75ad,#105a8a);border-radius:0 0 9px 9px / 0 0 5px 5px"></div>
<span class="t c seg" style="left:248px;top:780.5px;font-size:11.500px;color:#eef2f2">18</span>
<div style="left:257px;top:764px;width:14px;height:44px;background:#252727"></div>
<div style="left:259px;top:770px;width:4px;height:32px;background:repeating-linear-gradient(#191b19 0,#191b19 1px,#2b2d2b 1px,#2b2d2b 3px)"></div>
<div style="left:265px;top:770px;width:4px;height:32px;background:repeating-linear-gradient(#191b19 0,#191b19 1px,#2b2d2b 1px,#2b2d2b 3px)"></div>
<div style="left:271px;top:764px;width:1px;height:44px;background:#0c0c0c"></div>
<div style="left:272px;top:764px;width:41px;height:42px;background:linear-gradient(#272c2c,#1b2020)"></div>
<div style="left:272px;top:806px;width:41px;height:2px;background:#141616"></div>
<div style="left:11px;top:808px;width:228px;height:44px;background:linear-gradient(#4d5353 0,#474d4d 19px,#414747 27px,#353b3b 42px,#2a2c2c 42px);"></div>
<div style="left:0px;top:850px;width:11px;height:2px;background:#3d8fd0"></div>
<div style="left:14px;top:816px;width:141px;height:19px;background:#2f3131;border-radius:9.500px 0 0 9.500px"></div>
<div style="left:14.5px;top:816.5px;width:18px;height:18px;border-radius:9px;background:linear-gradient(#6d463a,#4e2e26);border:1.500px solid #1c1a1a;box-shadow:0 1px 2px rgba(0,0,0,.8)"></div>
<span class="t c" style="left:23.5px;top:826px;font-size:9.500px;color:#e8d2ca">O</span>
<span class="t seg" style="left:35px;top:825.2px;font-size:11px;color:#4a93d6">Fx Others - Add</span>
<div style="left:155px;top:816px;width:19px;height:19px;border-radius:10px;background:radial-gradient(circle at 50% 35%,#6a6a6a,#3a3a3a);border:1px solid #222"></div>
<svg class="a" style="left:155px;top:816px" width="19" height="19"><path d="M5 15.5A7.800 7.800 0 0 1 5 3.500" fill="none" stroke="#e8e8e8" stroke-width="1.400"/></svg>
<span class="t c seg" style="left:165.3px;top:826px;font-size:10.500px;color:#e8e8e8">V</span>
<div style="left:179px;top:816px;width:19px;height:19px;background:#2d2d2d;border:1px solid #1a1a1a"></div>
<div style="left:197px;top:816px;width:19px;height:19px;background:#2d2d2d;border:1px solid #1a1a1a"></div>
<span class="t c seg" style="left:188.5px;top:826px;font-size:10px;color:#b05a28">M</span>
<span class="t c seg" style="left:206.5px;top:826px;font-size:10px;color:#d0981c">S</span>
<div style="left:239px;top:808px;width:18px;height:44px;background:#2a3030"></div>
<div style="left:239px;top:808px;width:18px;height:42px;background:linear-gradient(#9ca6a6,#7e8888 55%,#687272);border-radius:0 0 9px 9px / 0 0 5px 5px"></div>
<span class="t c seg" style="left:248px;top:824.5px;font-size:11.500px;color:#eef2f2">19</span>
<div style="left:257px;top:808px;width:14px;height:44px;background:#252727"></div>
<div style="left:259px;top:814px;width:4px;height:32px;background:repeating-linear-gradient(#191b19 0,#191b19 1px,#2b2d2b 1px,#2b2d2b 3px)"></div>
<div style="left:265px;top:814px;width:4px;height:32px;background:repeating-linear-gradient(#191b19 0,#191b19 1px,#2b2d2b 1px,#2b2d2b 3px)"></div>
<div style="left:271px;top:808px;width:1px;height:44px;background:#0c0c0c"></div>
<div style="left:272px;top:808px;width:41px;height:42px;background:linear-gradient(#272c2c,#1b2020)"></div>
<div style="left:272px;top:850px;width:41px;height:2px;background:#141616"></div>
<div style="left:0px;top:852px;width:239px;height:44px;background:linear-gradient(#4d5353 0,#474d4d 19px,#414747 27px,#353b3b 42px,#2a2c2c 42px);"></div>
<div style="left:0px;top:860px;width:155px;height:19px;background:#2f3131"></div>
<div style="left:1.5px;top:860.5px;width:18px;height:18px;border-radius:9px;background:linear-gradient(#6d463a,#4e2e26);border:1.500px solid #1c1a1a;box-shadow:0 1px 2px rgba(0,0,0,.8)"></div>
<span class="t c" style="left:10.5px;top:870px;font-size:9.500px;color:#e8d2ca">O</span>
<span class="t seg" style="left:22px;top:869.2px;font-size:11px;color:#e4e6ee">Radio</span>
<div style="left:155px;top:860px;width:19px;height:19px;border-radius:10px;background:radial-gradient(circle at 50% 35%,#6a6a6a,#3a3a3a);border:1px solid #222"></div>
<svg class="a" style="left:155px;top:860px" width="19" height="19"><path d="M5 15.5A7.800 7.800 0 0 1 5 3.500" fill="none" stroke="#e8e8e8" stroke-width="1.400"/></svg>
<span class="t c seg" style="left:165.3px;top:870px;font-size:10.500px;color:#e8e8e8">V</span>
<div style="left:179px;top:860px;width:19px;height:19px;background:#2d2d2d;border:1px solid #1a1a1a"></div>
<div style="left:197px;top:860px;width:19px;height:19px;background:#2d2d2d;border:1px solid #1a1a1a"></div>
<span class="t c seg" style="left:188.5px;top:870px;font-size:10px;color:#b05a28">M</span>
<span class="t c seg" style="left:206.5px;top:870px;font-size:10px;color:#d0981c">S</span>
<div style="left:239px;top:852px;width:18px;height:44px;background:#2a3030"></div>
<div style="left:239px;top:852px;width:18px;height:42px;background:linear-gradient(#9ca6a6,#7e8888 55%,#687272);border-radius:0 0 9px 9px / 0 0 5px 5px"></div>
<span class="t c seg" style="left:248px;top:873.5px;font-size:11.500px;color:#eef2f2">20</span>
<div style="left:257px;top:852px;width:14px;height:44px;background:#252727"></div>
<div style="left:259px;top:858px;width:4px;height:32px;background:repeating-linear-gradient(#191b19 0,#191b19 1px,#2b2d2b 1px,#2b2d2b 3px)"></div>
<div style="left:265px;top:858px;width:4px;height:32px;background:repeating-linear-gradient(#191b19 0,#191b19 1px,#2b2d2b 1px,#2b2d2b 3px)"></div>
<div style="left:271px;top:852px;width:1px;height:44px;background:#0c0c0c"></div>
<div style="left:272px;top:852px;width:41px;height:42px;background:linear-gradient(#272c2c,#1b2020)"></div>
<div style="left:272px;top:894px;width:41px;height:2px;background:#141616"></div>
<svg class="a" style="left:243px;top:838px" width="10" height="9"><path d="M0 0H4L5 2H10V9H0Z" fill="#2a8ae8"/></svg>
<svg class="a" style="left:272px;top:808px" width="41" height="44"><defs><linearGradient id="wg" x1="0" y1="0" x2="0" y2="1"><stop offset="0" stop-color="#fbe48a"/><stop offset=".5" stop-color="#e8b030"/><stop offset="1" stop-color="#b87808"/></linearGradient></defs><rect x="3.9" y="17.6" width="2" height="8" rx=".8" fill="url(#wg)"/><rect x="7.1" y="12.3" width="2" height="18.6" rx=".8" fill="url(#wg)"/><rect x="11.2" y="7.6" width="2" height="28" rx=".8" fill="url(#wg)"/><rect x="15.1" y="13.6" width="2" height="16" rx=".8" fill="url(#wg)"/><rect x="18.7" y="18.1" width="2" height="7" rx=".8" fill="url(#wg)"/><rect x="21.9" y="12.8" width="2" height="17.7" rx=".8" fill="url(#wg)"/><rect x="25.8" y="7.6" width="2" height="28" rx=".8" fill="url(#wg)"/><rect x="29.7" y="13.6" width="2" height="16" rx=".8" fill="url(#wg)"/><rect x="33.2" y="18.1" width="2" height="7" rx=".8" fill="url(#wg)"/></svg>
<svg class="a" style="left:282px;top:854px" width="18" height="23"><path d="M3 1Q5 0 6 2L7 9L13 11V23H2V11Z" fill="#8e9090" stroke="#555" stroke-width=".6"/><rect x="4" y="18" width="8" height="5" fill="#5a6ac8"/></svg>
<div style="left:313px;top:104px;width:9px;height:773px;background:#3d3d3d"></div>
<div style="left:314px;top:104px;width:1px;height:773px;background:#2e2e2e"></div>
<div class="win" style="left:89px;top:110px;width:881px;height:691px;background:#2b2b2b">
<div style="left:0px;top:0px;width:881px;height:30px;background:#3f2420"></div>
<span class="t seg" style="left:8px;top:16.5px;font-size:11.500px;color:#9c8f8d">Browse FX</span>
<svg class="a" style="left:842px;top:8px" width="14" height="16"><path d="M3.500 1.300H10.500M7 8V15.500" fill="none" stroke="#fff" stroke-width="1.500"/><path d="M5 1.500H9V6L12.800 8.500H1.200L5 6Z" fill="#fff"/></svg>
<div style="left:861px;top:7px;width:18px;height:18px;background:#46281f"></div>
<span class="t c seg" style="left:870px;top:16px;font-size:9.500px;color:#b8aaa6">x</span>
<div style="left:0px;top:30px;width:881px;height:20px;background:#fff"></div>
<span class="t seg" style="left:7px;top:41.5px;font-size:11.500px;color:#555">FX</span>
<span class="t seg" style="left:35px;top:41.5px;font-size:11.500px;color:#555">Options</span>
<div style="left:6px;top:56px;width:247px;height:595px;background:#262626;border:1px solid #82858c;border-right-color:#9a9da4;border-bottom-color:#9a9da4"></div>
<div style="left:7px;top:57px;width:1px;height:593px;background:#1a1a1a"></div>
<div style="left:7px;top:57px;width:245px;height:1px;background:#1a1a1a"></div>
<div style="left:20px;top:73px;width:1px;height:560px;background-image:linear-gradient(#7a7a7a 50%,transparent 50%);background-size:1px 2px"></div>
<div style="left:39px;top:76px;width:1px;height:153px;background-image:linear-gradient(#7a7a7a 50%,transparent 50%);background-size:1px 2px"></div>
<div style="left:39px;top:274px;width:1px;height:360px;background-image:linear-gradient(#7a7a7a 50%,transparent 50%);background-size:1px 2px"></div>
<div style="left:8px;top:58px;width:226px;height:574px;overflow:hidden">
<div style="left:17px;top:9px;width:5px;height:1px;background-image:linear-gradient(90deg,#7a7a7a 50%,transparent 50%);background-size:2px 1px"></div>
<svg class="a" style="left:7.5px;top:5px" width="10" height="10"><rect x=".5" y=".5" width="8" height="8" fill="#f4f4f4" stroke="#9a9a9a"/><path d="M2.500 4.500H6.500" stroke="#1a2a8a" stroke-width="1"/></svg>
<span class="t" style="left:24px;top:9.7px;font-size:13.500px;letter-spacing:.100px;color:#e2e2e2">All Plugins</span>
<div style="left:32px;top:27px;width:9px;height:1px;background-image:linear-gradient(90deg,#7a7a7a 50%,transparent 50%);background-size:2px 1px"></div>
<span class="t" style="left:43px;top:27.7px;font-size:13.500px;letter-spacing:.100px;color:#e2e2e2">New</span>
<div style="left:32px;top:45px;width:9px;height:1px;background-image:linear-gradient(90deg,#7a7a7a 50%,transparent 50%);background-size:2px 1px"></div>
<span class="t" style="left:43px;top:45.7px;font-size:13.500px;letter-spacing:.100px;color:#e2e2e2">VST</span>
<div style="left:32px;top:63px;width:9px;height:1px;background-image:linear-gradient(90deg,#7a7a7a 50%,transparent 50%);background-size:2px 1px"></div>
<span class="t" style="left:43px;top:63.7px;font-size:13.500px;letter-spacing:.100px;color:#e2e2e2">VSTi</span>
<div style="left:32px;top:81px;width:9px;height:1px;background-image:linear-gradient(90deg,#7a7a7a 50%,transparent 50%);background-size:2px 1px"></div>
<span class="t" style="left:43px;top:81.7px;font-size:13.500px;letter-spacing:.100px;color:#e2e2e2">VST3</span>
<div style="left:32px;top:99px;width:9px;height:1px;background-image:linear-gradient(90deg,#7a7a7a 50%,transparent 50%);background-size:2px 1px"></div>
<span class="t" style="left:43px;top:99.7px;font-size:13.500px;letter-spacing:.100px;color:#e2e2e2">JS</span>
<div style="left:32px;top:117px;width:9px;height:1px;background-image:linear-gradient(90deg,#7a7a7a 50%,transparent 50%);background-size:2px 1px"></div>
<span class="t" style="left:43px;top:117.7px;font-size:13.500px;letter-spacing:.100px;color:#e2e2e2">ReWire</span>
<div style="left:32px;top:135px;width:9px;height:1px;background-image:linear-gradient(90deg,#7a7a7a 50%,transparent 50%);background-size:2px 1px"></div>
<span class="t" style="left:43px;top:135.7px;font-size:13.500px;letter-spacing:.100px;color:#e2e2e2">Instruments</span>
<div style="left:32px;top:153px;width:9px;height:1px;background-image:linear-gradient(90deg,#7a7a7a 50%,transparent 50%);background-size:2px 1px"></div>
<div style="left:41px;top:144px;width:50px;height:18px;background:#636363"></div>
<span class="t" style="left:43px;top:153.7px;font-size:13.500px;letter-spacing:.100px;color:#e2e2e2">Cockos</span>
<div style="left:32px;top:171px;width:9px;height:1px;background-image:linear-gradient(90deg,#7a7a7a 50%,transparent 50%);background-size:2px 1px"></div>
<span class="t" style="left:43px;top:171.7px;font-size:13.500px;letter-spacing:.100px;color:#e2e2e2">Recently used</span>
<div style="left:17px;top:189px;width:5px;height:1px;background-image:linear-gradient(90deg,#7a7a7a 50%,transparent 50%);background-size:2px 1px"></div>
<svg class="a" style="left:7.5px;top:185px" width="10" height="10"><rect x=".5" y=".5" width="8" height="8" fill="#f4f4f4" stroke="#9a9a9a"/><path d="M2.500 4.500H6.500M4.500 2.500V6.500" stroke="#1a2a8a" stroke-width="1"/></svg>
<span class="t" style="left:24px;top:189.7px;font-size:13.500px;letter-spacing:.100px;color:#e2e2e2">Categories</span>
<div style="left:17px;top:207px;width:5px;height:1px;background-image:linear-gradient(90deg,#7a7a7a 50%,transparent 50%);background-size:2px 1px"></div>
<svg class="a" style="left:7.5px;top:203px" width="10" height="10"><rect x=".5" y=".5" width="8" height="8" fill="#f4f4f4" stroke="#9a9a9a"/><path d="M2.500 4.500H6.500" stroke="#1a2a8a" stroke-width="1"/></svg>
<span class="t" style="left:24px;top:207.7px;font-size:13.500px;letter-spacing:.100px;color:#e2e2e2">Developers</span>
<div style="left:32px;top:225px;width:9px;height:1px;background-image:linear-gradient(90deg,#7a7a7a 50%,transparent 50%);background-size:2px 1px"></div>
<span class="t" style="left:43px;top:225.7px;font-size:13.500px;letter-spacing:.100px;color:#e2e2e2">[jBridge]Audio Ease</span>
<div style="left:32px;top:243px;width:9px;height:1px;background-image:linear-gradient(90deg,#7a7a7a 50%,transparent 50%);background-size:2px 1px"></div>
<span class="t" style="left:43px;top:243.7px;font-size:13.500px;letter-spacing:.100px;color:#e2e2e2">[jBridge]reFX</span>
<div style="left:32px;top:261px;width:9px;height:1px;background-image:linear-gradient(90deg,#7a7a7a 50%,transparent 50%);background-size:2px 1px"></div>
<span class="t" style="left:43px;top:261.7px;font-size:13.500px;letter-spacing:.100px;color:#e2e2e2">[jBridge]Softube</span>
<div style="left:32px;top:279px;width:9px;height:1px;background-image:linear-gradient(90deg,#7a7a7a 50%,transparent 50%);background-size:2px 1px"></div>
<span class="t" style="left:43px;top:279.7px;font-size:13.500px;letter-spacing:.100px;color:#e2e2e2">[jBridge]Steinberg Media Technologies</span>
<div style="left:32px;top:297px;width:9px;height:1px;background-image:linear-gradient(90deg,#7a7a7a 50%,transparent 50%);background-size:2px 1px"></div>
<span class="t" style="left:43px;top:297.7px;font-size:13.500px;letter-spacing:.100px;color:#e2e2e2">[jBridge]Vendor String</span>
<div style="left:32px;top:315px;width:9px;height:1px;background-image:linear-gradient(90deg,#7a7a7a 50%,transparent 50%);background-size:2px 1px"></div>
<span class="t" style="left:43px;top:315.7px;font-size:13.500px;letter-spacing:.100px;color:#e2e2e2">[jBridge]Wizoo / Steinberg</span>
<div style="left:32px;top:333px;width:9px;height:1px;background-image:linear-gradient(90deg,#7a7a7a 50%,transparent 50%);background-size:2px 1px"></div>
<span class="t" style="left:43px;top:333.7px;font-size:13.500px;letter-spacing:.100px;color:#e2e2e2">Acon Digital</span>
<div style="left:32px;top:351px;width:9px;height:1px;background-image:linear-gradient(90deg,#7a7a7a 50%,transparent 50%);background-size:2px 1px"></div>
<span class="t" style="left:43px;top:351.7px;font-size:13.500px;letter-spacing:.100px;color:#e2e2e2">Antares Audio</span>
<div style="left:32px;top:369px;width:9px;height:1px;background-image:linear-gradient(90deg,#7a7a7a 50%,transparent 50%);background-size:2px 1px"></div>
<span class="t" style="left:43px;top:369.7px;font-size:13.500px;letter-spacing:.100px;color:#e2e2e2">Antares Audio Technologies</span>
<div style="left:32px;top:387px;width:9px;height:1px;background-image:linear-gradient(90deg,#7a7a7a 50%,transparent 50%);background-size:2px 1px"></div>
<span class="t" style="left:43px;top:387.7px;font-size:13.500px;letter-spacing:.100px;color:#e2e2e2">Applied Acoustics Systems</span>
<div style="left:32px;top:405px;width:9px;height:1px;background-image:linear-gradient(90deg,#7a7a7a 50%,transparent 50%);background-size:2px 1px"></div>
<span class="t" style="left:43px;top:405.7px;font-size:13.500px;letter-spacing:.100px;color:#e2e2e2">ArtsAcoustic</span>
<div style="left:32px;top:423px;width:9px;height:1px;background-image:linear-gradient(90deg,#7a7a7a 50%,transparent 50%);background-size:2px 1px"></div>
<span class="t" style="left:43px;top:423.7px;font-size:13.500px;letter-spacing:.100px;color:#e2e2e2">Arturia</span>
<div style="left:32px;top:441px;width:9px;height:1px;background-image:linear-gradient(90deg,#7a7a7a 50%,transparent 50%);background-size:2px 1px"></div>
<span class="t" style="left:43px;top:441.7px;font-size:13.500px;letter-spacing:.100px;color:#e2e2e2">Auburn Sounds</span>
<div style="left:32px;top:459px;width:9px;height:1px;background-image:linear-gradient(90deg,#7a7a7a 50%,transparent 50%);background-size:2px 1px"></div>
<span class="t" style="left:43px;top:459.7px;font-size:13.500px;letter-spacing:.100px;color:#e2e2e2">Audio Damage, Inc.</span>
<div style="left:32px;top:477px;width:9px;height:1px;background-image:linear-gradient(90deg,#7a7a7a 50%,transparent 50%);background-size:2px 1px"></div>
<span class="t" style="left:43px;top:477.7px;font-size:13.500px;letter-spacing:.100px;color:#e2e2e2">Audio Ease</span>
<div style="left:32px;top:495px;width:9px;height:1px;background-image:linear-gradient(90deg,#7a7a7a 50%,transparent 50%);background-size:2px 1px"></div>
<span class="t" style="left:43px;top:495.7px;font-size:13.500px;letter-spacing:.100px;color:#e2e2e2">Audio Modeling</span>
<div style="left:32px;top:513px;width:9px;height:1px;background-image:linear-gradient(90deg,#7a7a7a 50%,transparent 50%);background-size:2px 1px"></div>
<span class="t" style="left:43px;top:513.7px;font-size:13.500px;letter-spacing:.100px;color:#e2e2e2">Audiolounge Soft</span>
<div style="left:32px;top:531px;width:9px;height:1px;background-image:linear-gradient(90deg,#7a7a7a 50%,transparent 50%);background-size:2px 1px"></div>
<span class="t" style="left:43px;top:531.7px;font-size:13.500px;letter-spacing:.100px;color:#e2e2e2">Blue Cat Audio</span>
<div style="left:32px;top:549px;width:9px;height:1px;background-image:linear-gradient(90deg,#7a7a7a 50%,transparent 50%);background-size:2px 1px"></div>
<span class="t" style="left:43px;top:549.7px;font-size:13.500px;letter-spacing:.100px;color:#e2e2e2">Cakewalk</span>
<div style="left:32px;top:567px;width:9px;height:1px;background-image:linear-gradient(90deg,#7a7a7a 50%,transparent 50%);background-size:2px 1px"></div>
<span class="t" style="left:43px;top:567.7px;font-size:13.500px;letter-spacing:.100px;color:#e2e2e2">Celemony</span>
</div>
<div style="left:234px;top:58px;width:17px;height:574px;background:#f0f0f0"></div>
<div style="left:235px;top:75px;width:15px;height:163px;background:#cdcdcd"></div>
<div style="left:8px;top:632px;width:243px;height:17px;background:#f0f0f0"></div>
<div style="left:25px;top:633px;width:134px;height:15px;background:#cdcdcd"></div>
<svg class="a" style="left:238px;top:62px" width="9" height="9"><path d="M.5 6.500L4.500 2.500L8.500 6.500" fill="none" stroke="#505050" stroke-width="1.500"/></svg>
<svg class="a" style="left:238px;top:619px" width="9" height="9"><path d="M.5 2.500L4.500 6.500L8.500 2.500" fill="none" stroke="#505050" stroke-width="1.500"/></svg>
<svg class="a" style="left:12px;top:636px" width="9" height="9"><path d="M6.500 .5L2.500 4.500L6.500 8.500" fill="none" stroke="#505050" stroke-width="1.500"/></svg>
<svg class="a" style="left:221px;top:636px" width="9" height="9"><path d="M2.500 .5L6.500 4.500L2.500 8.500" fill="none" stroke="#505050" stroke-width="1.500"/></svg>
<div style="left:257px;top:56px;width:616px;height:595px;background:#262626;border:1px solid #82858c;border-right-color:#9a9da4;border-bottom-color:#9a9da4"></div>
<div style="left:258px;top:57px;width:614px;height:24px;background:#fff"></div>
<div style="left:541px;top:57px;width:1px;height:24px;background:#e0e0e0"></div>
<div style="left:616px;top:57px;width:1px;height:24px;background:#e0e0e0"></div>
<span class="t" style="left:264px;top:68.80000000000001px;font-size:13.330px;color:#000">FX</span>
<span class="t" style="left:548px;top:68.80000000000001px;font-size:13.330px;color:#000">Shortcut</span>
<span class="t" style="left:264px;top:91.69999999999999px;font-size:13.300px;color:#e2e2e2;letter-spacing:0.108px">VST: ReaCast (Cockos)</span>
<span class="t" style="left:264px;top:111.69999999999999px;font-size:13.300px;color:#e2e2e2;letter-spacing:0.164px">VST: ReaComp (Cockos)</span>
<span class="t" style="left:548px;top:111.69999999999999px;font-size:13.300px;color:#e2e2e2">24918</span>
<span class="t" style="left:264px;top:131.7px;font-size:13.300px;color:#e2e2e2;letter-spacing:0.035px">VST: ReaControlMIDI (Cockos)</span>
<span class="t" style="left:264px;top:151.7px;font-size:13.300px;color:#e2e2e2;letter-spacing:0.223px">VST: ReaDelay (Cockos)</span>
<span class="t" style="left:264px;top:171.7px;font-size:13.300px;color:#e2e2e2;letter-spacing:0.132px">VST: ReaEQ (Cockos)</span>
<span class="t" style="left:548px;top:171.7px;font-size:13.300px;color:#e2e2e2">24938</span>
<span class="t" style="left:264px;top:191.7px;font-size:13.300px;color:#e2e2e2;letter-spacing:0.000px">VST: ReaFir (FFT EQ+Dynamics Processor) ...</span>
<span class="t" style="left:264px;top:211.7px;font-size:13.300px;color:#e2e2e2;letter-spacing:0.152px">VST: ReaGate (Cockos)</span>
<span class="t" style="left:264px;top:231.7px;font-size:13.300px;color:#e2e2e2;letter-spacing:0.068px">VST: ReaInsert (Cockos)</span>
<span class="t" style="left:264px;top:251.7px;font-size:13.300px;color:#e2e2e2;letter-spacing:0.140px">VST: ReaNINJAM (Cockos)</span>
<span class="t" style="left:264px;top:271.7px;font-size:13.300px;color:#e2e2e2;letter-spacing:0.111px">VST: ReaPitch (Cockos)</span>
<span class="t" style="left:264px;top:291.7px;font-size:13.300px;color:#e2e2e2;letter-spacing:0.029px">VST: ReaStream (Cockos) (8ch)</span>
<span class="t" style="left:264px;top:311.7px;font-size:13.300px;color:#e2e2e2;letter-spacing:0.084px">VST: ReaSurround (Cockos)</span>
<span class="t" style="left:264px;top:331.7px;font-size:13.300px;color:#e2e2e2;letter-spacing:0.186px">VST: ReaTune (Cockos)</span>
<span class="t" style="left:264px;top:351.7px;font-size:13.300px;color:#e2e2e2;letter-spacing:0.222px">VST: ReaVerb (Cockos)</span>
<span class="t" style="left:264px;top:371.7px;font-size:13.300px;color:#e2e2e2;letter-spacing:0.211px">VST: ReaVerbate (Cockos)</span>
<span class="t" style="left:264px;top:391.7px;font-size:13.300px;color:#e2e2e2;letter-spacing:0.285px">VST: ReaVocode (Cockos)</span>
<span class="t" style="left:264px;top:411.70000000000005px;font-size:13.300px;color:#e2e2e2;letter-spacing:0.245px">VST: ReaVoice (Cockos)</span>
<span class="t" style="left:264px;top:431.70000000000005px;font-size:13.300px;color:#e2e2e2;letter-spacing:0.151px">VST: ReaXcomp (Cockos)</span>
<span class="t" style="left:264px;top:451.70000000000005px;font-size:13.300px;color:#e2e2e2;letter-spacing:0.036px">VSTi: ReaSamplOmatic5000 (Cockos)</span>
<span class="t" style="left:264px;top:471.70000000000005px;font-size:13.300px;color:#e2e2e2;letter-spacing:-0.036px">VSTi: ReaSynDr (Cockos) (4 out)</span>
<span class="t" style="left:264px;top:491.70000000000005px;font-size:13.300px;color:#e2e2e2;letter-spacing:0.042px">VSTi: ReaSynth (Cockos)</span>
<span class="t" style="left:264px;top:511.70000000000005px;font-size:13.300px;color:#e2e2e2;letter-spacing:-0.099px">JS: Frequency Spectrum Analyzer Meter (Co...</span>
<span class="t" style="left:264px;top:531.7px;font-size:13.300px;color:#e2e2e2;letter-spacing:-0.011px">JS: Gain Reduction Scope (Cockos) [analysi...</span>
<span class="t" style="left:264px;top:551.7px;font-size:13.300px;color:#e2e2e2;letter-spacing:0.001px">JS: General Dynamics (Cockos) [dynamics/g...</span>
<span class="t" style="left:264px;top:571.7px;font-size:13.300px;color:#e2e2e2;letter-spacing:0.017px">JS: Oscilloscope Meter (Cockos) [analysis/gf...</span>
<span class="t" style="left:264px;top:591.7px;font-size:13.300px;color:#e2e2e2;letter-spacing:0.012px">JS: Spectral Hold (Cockos) [synthesis/spectr...</span>
<span class="t" style="left:264px;top:611.7px;font-size:13.300px;color:#e2e2e2;letter-spacing:-0.021px">JS: Spectrograph Spectrogram Meter (Cock...</span>
<span class="t" style="left:264px;top:631.7px;font-size:13.300px;color:#e2e2e2;letter-spacing:-0.080px">JS: Super8 MIDI-controlled synchronized loo...</span>
<span class="t" style="left:6px;top:671.7px;font-size:13.300px;color:#e2e2e2">Filter:</span>
<div style="left:50px;top:660px;width:494px;height:23px;background:#262626;border:3px solid #fff"></div>
<div style="left:525px;top:662px;width:18px;height:19px;background:#fff"></div>
<svg class="a" style="left:530px;top:668px" width="9" height="9"><path d="M.5 2L4.500 6L8.500 2" fill="none" stroke="#505050" stroke-width="1.500"/></svg>
</div>
<div class="win" style="left:981px;top:110px;width:881px;height:722px;background:#2b2b2b">
<div style="left:0px;top:0px;width:881px;height:30px;background:#3f2420"></div>
<span class="t seg" style="left:8px;top:16.5px;font-size:11.500px;color:#9c8f8d">Project Bay</span>
<div style="left:0px;top:30px;width:881px;height:20px;background:#767e7e"></div>
<div style="left:0px;top:48px;width:881px;height:2px;background:#7c8484"></div>
<div style="left:2px;top:31px;width:93px;height:17px;background:#959d9d;border-right:1px solid #828a8a;border-bottom:1px solid #868e8e"></div>
<span class="t c" style="left:48.5px;top:39.69999999999999px;font-size:13.330px;color:#2e3236">Source Media</span>
<div style="left:97px;top:30px;width:91px;height:18px;background:#e0e8e8"></div>
<span class="t c" style="left:142.5px;top:39.69999999999999px;font-size:13.330px;color:#26262e;font-weight:bold">Media Items</span>
<div style="left:190px;top:31px;width:29px;height:17px;background:#959d9d;border-right:1px solid #828a8a;border-bottom:1px solid #868e8e"></div>
<span class="t c" style="left:204.5px;top:39.69999999999999px;font-size:13.330px;color:#2e3236">FX</span>
<div style="left:221px;top:31px;width:100px;height:17px;background:#959d9d;border-right:1px solid #828a8a;border-bottom:1px solid #868e8e"></div>
<span class="t c" style="left:271.0px;top:39.69999999999999px;font-size:13.330px;color:#2e3236">FX Parameters</span>
<div style="left:323px;top:31px;width:85px;height:17px;background:#959d9d;border-right:1px solid #828a8a;border-bottom:1px solid #868e8e"></div>
<span class="t c" style="left:365.5px;top:39.69999999999999px;font-size:13.330px;color:#2e3236">Item Groups</span>
<div style="left:410px;top:31px;width:86px;height:17px;background:#959d9d;border-right:1px solid #828a8a;border-bottom:1px solid #868e8e"></div>
<span class="t c" style="left:453.0px;top:39.69999999999999px;font-size:13.330px;color:#2e3236">Take Comps</span>
<div style="left:498px;top:31px;width:116px;height:17px;background:#959d9d;border-right:1px solid #828a8a;border-bottom:1px solid #868e8e"></div>
<span class="t c" style="left:556.0px;top:39.69999999999999px;font-size:13.330px;color:#2e3236">Automation Items</span>
<div style="left:1px;top:49px;width:880px;height:601px;background:#262626;border:1px solid #8a8d94;border-top-color:#232323;border-left-color:#2b2b2b;border-right:none"></div>
<div style="left:2px;top:50px;width:879px;height:24px;background:#fff"></div>
<div style="left:248px;top:50px;width:1px;height:24px;background:#e2e2e2"></div>
<div style="left:248px;top:74px;width:1px;height:575px;background:#4a5252"></div>
<div style="left:370px;top:50px;width:1px;height:24px;background:#e2e2e2"></div>
<div style="left:370px;top:74px;width:1px;height:575px;background:#4a5252"></div>
<div style="left:422px;top:50px;width:1px;height:24px;background:#e2e2e2"></div>
<div style="left:422px;top:74px;width:1px;height:575px;background:#4a5252"></div>
<div style="left:546px;top:50px;width:1px;height:24px;background:#e2e2e2"></div>
<div style="left:546px;top:74px;width:1px;height:575px;background:#4a5252"></div>
<div style="left:616px;top:50px;width:1px;height:24px;background:#e2e2e2"></div>
<div style="left:616px;top:74px;width:1px;height:575px;background:#4a5252"></div>
<div style="left:686px;top:50px;width:1px;height:24px;background:#e2e2e2"></div>
<div style="left:686px;top:74px;width:1px;height:575px;background:#4a5252"></div>
<div style="left:736px;top:50px;width:1px;height:24px;background:#e2e2e2"></div>
<div style="left:736px;top:74px;width:1px;height:575px;background:#4a5252"></div>
<div style="left:811px;top:50px;width:1px;height:24px;background:#e2e2e2"></div>
<div style="left:811px;top:74px;width:1px;height:575px;background:#4a5252"></div>
<div style="left:876px;top:50px;width:1px;height:24px;background:#e2e2e2"></div>
<div style="left:876px;top:74px;width:1px;height:575px;background:#4a5252"></div>
<span class="t" style="left:8px;top:62.400000000000006px;font-size:13.330px;color:#000">Active take name</span>
<span class="t" style="left:291px;top:62.400000000000006px;font-size:13.330px;color:#000">Status</span>
<span class="t" style="left:377px;top:62.400000000000006px;font-size:13.330px;color:#000">Retain</span>
<span class="t" style="left:429px;top:62.400000000000006px;font-size:13.330px;color:#000">Track</span>
<span class="t r" style="left:611px;top:62.400000000000006px;font-size:13.330px;color:#000">Position</span>
<span class="t r" style="left:681px;top:62.400000000000006px;font-size:13.330px;color:#000">Length</span>
<span class="t r" style="left:730px;top:62.400000000000006px;font-size:13.330px;color:#000">Tak...</span>
<span class="t" style="left:746px;top:62.400000000000006px;font-size:13.330px;color:#000">Fade-in/...</span>
<span class="t" style="left:818px;top:62.400000000000006px;font-size:13.330px;color:#000">Comm...</span>
<svg class="a" style="left:481px;top:50px" width="9" height="5"><path d="M.5 4.500L4.500 .5L8.500 4.500" fill="none" stroke="#666" stroke-width="1"/></svg>
<div style="left:2px;top:74px;width:879px;height:575px;overflow:hidden">
<div style="left:0px;top:20px;width:879px;height:1px;background:#4a5252"></div>
<svg class="a" style="left:4px;top:5.5px" width="8" height="9"><path d="M0 0L7.300 4.500L0 9Z" fill="#12d822"/></svg>
<span class="t" style="left:25px;top:10.6px;color:#e0e0e0;font-size:14px">Другие герои.mp4</span>
<span class="t" style="left:289px;top:10.6px;color:#e0e0e0;font-size:13.400px">active</span>
<span class="t" style="left:427px;top:10.6px;color:#e0e0e0;font-size:14px">Video</span>
<span class="t r" style="left:609px;top:10px;color:#e0e0e0;font-size:12.300px">0:00.000</span>
<span class="t r" style="left:679px;top:10px;color:#e0e0e0;font-size:12.300px">10:57.877</span>
<span class="t r" style="left:728px;top:10px;color:#e0e0e0;font-size:12.300px">1</span>
<span class="t" style="left:743px;top:10px;color:#e0e0e0;font-size:12.300px">0:00.005/...</span>
<div style="left:0px;top:40px;width:879px;height:1px;background:#4a5252"></div>
<svg class="a" style="left:4px;top:25.5px" width="8" height="9"><path d="M0 0L7.300 4.500L0 9Z" fill="#12d822"/></svg>
<span class="t" style="left:25px;top:30.6px;color:#e0e0e0;font-size:14px;letter-spacing:-0.600px">01-Марк-190523_1652.wav</span>
<span class="t" style="left:289px;top:30.6px;color:#e0e0e0;font-size:13.400px">active</span>
<span class="t" style="left:427px;top:30.6px;color:#e0e0e0;font-size:14px">Child</span>
<span class="t r" style="left:609px;top:30px;color:#e0e0e0;font-size:12.300px">0:10.562</span>
<span class="t r" style="left:679px;top:30px;color:#e0e0e0;font-size:12.300px">0:27.162</span>
<span class="t r" style="left:728px;top:30px;color:#e0e0e0;font-size:12.300px">1</span>
<span class="t" style="left:743px;top:30px;color:#e0e0e0;font-size:12.300px">0:00.100/...</span>
<div style="left:0px;top:60px;width:879px;height:1px;background:#4a5252"></div>
<svg class="a" style="left:4px;top:45.5px" width="8" height="9"><path d="M0 0L7.300 4.500L0 9Z" fill="#12d822"/></svg>
<span class="t" style="left:25px;top:50.6px;color:#e0e0e0;font-size:14px;letter-spacing:-0.600px">01-Марк-190523_1652.wav</span>
<span class="t" style="left:289px;top:50.6px;color:#e0e0e0;font-size:13.400px">active</span>
<span class="t" style="left:427px;top:50.6px;color:#e0e0e0;font-size:14px">Child</span>
<span class="t r" style="left:609px;top:50px;color:#e0e0e0;font-size:12.300px">0:36.831</span>
<span class="t r" style="left:679px;top:50px;color:#e0e0e0;font-size:12.300px">0:01.850</span>
<span class="t r" style="left:728px;top:50px;color:#e0e0e0;font-size:12.300px">1</span>
<span class="t" style="left:743px;top:50px;color:#e0e0e0;font-size:12.300px">0:00.005/...</span>
<div style="left:0px;top:80px;width:879px;height:1px;background:#4a5252"></div>
<svg class="a" style="left:4px;top:65.5px" width="8" height="9"><path d="M0 0L7.300 4.500L0 9Z" fill="#12d822"/></svg>
<span class="t" style="left:25px;top:70.6px;color:#e0e0e0;font-size:14px">исправленная_часть исправле...</span>
<span class="t" style="left:289px;top:70.6px;color:#e0e0e0;font-size:13.400px">active</span>
<span class="t" style="left:427px;top:70.6px;color:#e0e0e0;font-size:14px">закадровая 1</span>
<span class="t r" style="left:609px;top:70px;color:#e0e0e0;font-size:12.300px">0:52.155</span>
<span class="t r" style="left:679px;top:70px;color:#e0e0e0;font-size:12.300px">0:14.489</span>
<span class="t r" style="left:728px;top:70px;color:#e0e0e0;font-size:12.300px">1</span>
<span class="t" style="left:743px;top:70px;color:#e0e0e0;font-size:12.300px">0:00.005/...</span>
<div style="left:0px;top:100px;width:879px;height:1px;background:#4a5252"></div>
<svg class="a" style="left:4px;top:85.5px" width="8" height="9"><path d="M0 0L7.300 4.500L0 9Z" fill="#12d822"/></svg>
<span class="t" style="left:25px;top:90.6px;color:#e0e0e0;font-size:14px">закадровая 1.wav</span>
<span class="t" style="left:289px;top:90.6px;color:#e0e0e0;font-size:13.400px">active</span>
<span class="t" style="left:427px;top:90.6px;color:#e0e0e0;font-size:14px">закадровая 1</span>
<span class="t r" style="left:609px;top:90px;color:#e0e0e0;font-size:12.300px">1:20.615</span>
<span class="t r" style="left:679px;top:90px;color:#e0e0e0;font-size:12.300px">0:15.620</span>
<span class="t r" style="left:728px;top:90px;color:#e0e0e0;font-size:12.300px">1</span>
<span class="t" style="left:743px;top:90px;color:#e0e0e0;font-size:12.300px">0:00.005/...</span>
<div style="left:0px;top:120px;width:879px;height:1px;background:#4a5252"></div>
<svg class="a" style="left:4px;top:105.5px" width="8" height="9"><path d="M0 0L7.300 4.500L0 9Z" fill="#12d822"/></svg>
<span class="t" style="left:25px;top:110.6px;color:#e0e0e0;font-size:14px">закадровая героя_доп.звуки.wav</span>
<span class="t" style="left:289px;top:110.6px;color:#e0e0e0;font-size:13.400px">active</span>
<span class="t" style="left:427px;top:110.6px;color:#e0e0e0;font-size:14px">закадровая 1</span>
<span class="t r" style="left:609px;top:110px;color:#e0e0e0;font-size:12.300px">3:37.750</span>
<span class="t r" style="left:679px;top:110px;color:#e0e0e0;font-size:12.300px">0:48.250</span>
<span class="t r" style="left:728px;top:110px;color:#e0e0e0;font-size:12.300px">1</span>
<span class="t" style="left:743px;top:110px;color:#e0e0e0;font-size:12.300px">0:00.005/...</span>
<div style="left:0px;top:140px;width:879px;height:1px;background:#4a5252"></div>
<svg class="a" style="left:4px;top:125.5px" width="8" height="9"><path d="M0 0L7.300 4.500L0 9Z" fill="#12d822"/></svg>
<span class="t" style="left:25px;top:130.6px;color:#e0e0e0;font-size:14px">закадровая 1.wav</span>
<span class="t" style="left:289px;top:130.6px;color:#e0e0e0;font-size:13.400px">active</span>
<span class="t" style="left:427px;top:130.6px;color:#e0e0e0;font-size:14px">закадровая 1</span>
<span class="t r" style="left:609px;top:130px;color:#e0e0e0;font-size:12.300px">7:53.000</span>
<span class="t r" style="left:679px;top:130px;color:#e0e0e0;font-size:12.300px">1:12.500</span>
<span class="t r" style="left:728px;top:130px;color:#e0e0e0;font-size:12.300px">1</span>
<span class="t" style="left:743px;top:130px;color:#e0e0e0;font-size:12.300px">0:00.005/...</span>
<div style="left:0px;top:160px;width:879px;height:1px;background:#4a5252"></div>
<svg class="a" style="left:4px;top:145.5px" width="8" height="9"><path d="M0 0L7.300 4.500L0 9Z" fill="#12d822"/></svg>
<span class="t" style="left:25px;top:150.6px;color:#e0e0e0;font-size:14px">закадровая 1.wav</span>
<span class="t" style="left:289px;top:150.6px;color:#e0e0e0;font-size:13.400px">active</span>
<span class="t" style="left:427px;top:150.6px;color:#e0e0e0;font-size:14px">закадровая 1</span>
<span class="t r" style="left:609px;top:150px;color:#e0e0e0;font-size:12.300px">10:09.954</span>
<span class="t r" style="left:679px;top:150px;color:#e0e0e0;font-size:12.300px">0:06.269</span>
<span class="t r" style="left:728px;top:150px;color:#e0e0e0;font-size:12.300px">1</span>
<span class="t" style="left:743px;top:150px;color:#e0e0e0;font-size:12.300px">0:00.005/...</span>
<div style="left:0px;top:180px;width:879px;height:1px;background:#4a5252"></div>
<svg class="a" style="left:4px;top:165.5px" width="8" height="9"><path d="M0 0L7.300 4.500L0 9Z" fill="#12d822"/></svg>
<span class="t" style="left:25px;top:170.6px;color:#e0e0e0;font-size:14px">закадровая героя_доп.звуки.wav</span>
<span class="t" style="left:289px;top:170.6px;color:#e0e0e0;font-size:13.400px">active</span>
<span class="t" style="left:427px;top:170.6px;color:#e0e0e0;font-size:14px">Артур</span>
<span class="t r" style="left:609px;top:170px;color:#e0e0e0;font-size:12.300px">0:00.000</span>
<span class="t r" style="left:679px;top:170px;color:#e0e0e0;font-size:12.300px">1:34.782</span>
<span class="t r" style="left:728px;top:170px;color:#e0e0e0;font-size:12.300px">1</span>
<span class="t" style="left:743px;top:170px;color:#e0e0e0;font-size:12.300px">0:00.005/...</span>
<div style="left:0px;top:200px;width:879px;height:1px;background:#4a5252"></div>
<svg class="a" style="left:4px;top:185.5px" width="8" height="9"><path d="M0 0L7.300 4.500L0 9Z" fill="#12d822"/></svg>
<span class="t" style="left:25px;top:190.6px;color:#e0e0e0;font-size:14px">закадровая героя_доп.звуки.wav</span>
<span class="t" style="left:289px;top:190.6px;color:#e0e0e0;font-size:13.400px">active</span>
<span class="t" style="left:427px;top:190.6px;color:#e0e0e0;font-size:14px">Артур</span>
<span class="t r" style="left:609px;top:190px;color:#e0e0e0;font-size:12.300px">1:34.782</span>
<span class="t r" style="left:679px;top:190px;color:#e0e0e0;font-size:12.300px">0:05.314</span>
<span class="t r" style="left:728px;top:190px;color:#e0e0e0;font-size:12.300px">1</span>
<span class="t" style="left:743px;top:190px;color:#e0e0e0;font-size:12.300px">0:00.005/...</span>
<div style="left:0px;top:220px;width:879px;height:1px;background:#4a5252"></div>
<svg class="a" style="left:4px;top:205.5px" width="8" height="9"><path d="M0 0L7.300 4.500L0 9Z" fill="#12d822"/></svg>
<span class="t" style="left:25px;top:210.6px;color:#e0e0e0;font-size:14px">закадровая героя_доп.звуки.wav</span>
<span class="t" style="left:289px;top:210.6px;color:#e0e0e0;font-size:13.400px">active</span>
<span class="t" style="left:427px;top:210.6px;color:#e0e0e0;font-size:14px">Артур</span>
<span class="t r" style="left:609px;top:210px;color:#e0e0e0;font-size:12.300px">1:40.096</span>
<span class="t r" style="left:679px;top:210px;color:#e0e0e0;font-size:12.300px">0:53.245</span>
<span class="t r" style="left:728px;top:210px;color:#e0e0e0;font-size:12.300px">1</span>
<span class="t" style="left:743px;top:210px;color:#e0e0e0;font-size:12.300px">0:00.005/...</span>
<div style="left:0px;top:240px;width:879px;height:1px;background:#4a5252"></div>
<svg class="a" style="left:4px;top:225.5px" width="8" height="9"><path d="M0 0L7.300 4.500L0 9Z" fill="#12d822"/></svg>
<span class="t" style="left:25px;top:230.6px;color:#e0e0e0;font-size:14px">закадровая героя_доп.звуки.wav</span>
<span class="t" style="left:289px;top:230.6px;color:#e0e0e0;font-size:13.400px">active</span>
<span class="t" style="left:427px;top:230.6px;color:#e0e0e0;font-size:14px">Артур</span>
<span class="t r" style="left:609px;top:230px;color:#e0e0e0;font-size:12.300px">2:33.380</span>
<span class="t r" style="left:679px;top:230px;color:#e0e0e0;font-size:12.300px">0:52.619</span>
<span class="t r" style="left:728px;top:230px;color:#e0e0e0;font-size:12.300px">1</span>
<span class="t" style="left:743px;top:230px;color:#e0e0e0;font-size:12.300px">0:00.005/...</span>
<div style="left:0px;top:260px;width:879px;height:1px;background:#4a5252"></div>
<svg class="a" style="left:4px;top:245.5px" width="8" height="9"><path d="M0 0L7.300 4.500L0 9Z" fill="#12d822"/></svg>
<span class="t" style="left:25px;top:250.6px;color:#e0e0e0;font-size:14px">закадровая героя_доп.звуки.wav</span>
<span class="t" style="left:289px;top:250.6px;color:#e0e0e0;font-size:13.400px">active</span>
<span class="t" style="left:427px;top:250.6px;color:#e0e0e0;font-size:14px">Артур</span>
<span class="t r" style="left:609px;top:250px;color:#e0e0e0;font-size:12.300px">5:38.500</span>
<span class="t r" style="left:679px;top:250px;color:#e0e0e0;font-size:12.300px">1:15.384</span>
<span class="t r" style="left:728px;top:250px;color:#e0e0e0;font-size:12.300px">1</span>
<span class="t" style="left:743px;top:250px;color:#e0e0e0;font-size:12.300px">0:00.005/...</span>
<div style="left:0px;top:280px;width:879px;height:1px;background:#4a5252"></div>
<svg class="a" style="left:4px;top:265.5px" width="8" height="9"><path d="M0 0L7.300 4.500L0 9Z" fill="#12d822"/></svg>
<span class="t" style="left:25px;top:270.6px;color:#e0e0e0;font-size:14px">закадровая героя_доп.звуки.wav</span>
<span class="t" style="left:289px;top:270.6px;color:#e0e0e0;font-size:13.400px">active</span>
<span class="t" style="left:427px;top:270.6px;color:#e0e0e0;font-size:14px">Артур</span>
<span class="t r" style="left:609px;top:270px;color:#e0e0e0;font-size:12.300px">7:52.542</span>
<span class="t r" style="left:679px;top:270px;color:#e0e0e0;font-size:12.300px">2:27.457</span>
<span class="t r" style="left:728px;top:270px;color:#e0e0e0;font-size:12.300px">1</span>
<span class="t" style="left:743px;top:270px;color:#e0e0e0;font-size:12.300px">0:00.005/...</span>
<div style="left:0px;top:300px;width:879px;height:1px;background:#4a5252"></div>
<svg class="a" style="left:4px;top:285.5px" width="8" height="9"><path d="M0 0L7.300 4.500L0 9Z" fill="#12d822"/></svg>
<span class="t" style="left:25px;top:290.6px;color:#e0e0e0;font-size:14px">Марочко.wav</span>
<span class="t" style="left:289px;top:290.6px;color:#e0e0e0;font-size:13.400px">active</span>
<span class="t" style="left:427px;top:290.6px;color:#e0e0e0;font-size:14px">Марочко</span>
<span class="t r" style="left:609px;top:290px;color:#e0e0e0;font-size:12.300px">1:44.000</span>
<span class="t r" style="left:679px;top:290px;color:#e0e0e0;font-size:12.300px">0:30.000</span>
<span class="t r" style="left:728px;top:290px;color:#e0e0e0;font-size:12.300px">1</span>
<span class="t" style="left:743px;top:290px;color:#e0e0e0;font-size:12.300px">0:00.005/...</span>
<div style="left:0px;top:320px;width:879px;height:1px;background:#4a5252"></div>
<svg class="a" style="left:4px;top:305.5px" width="8" height="9"><path d="M0 0L7.300 4.500L0 9Z" fill="#12d822"/></svg>
<span class="t" style="left:25px;top:310.6px;color:#e0e0e0;font-size:14px">Марочко.wav</span>
<span class="t" style="left:289px;top:310.6px;color:#e0e0e0;font-size:13.400px">active</span>
<span class="t" style="left:427px;top:310.6px;color:#e0e0e0;font-size:14px">Марочко</span>
<span class="t r" style="left:609px;top:310px;color:#e0e0e0;font-size:12.300px">4:22.000</span>
<span class="t r" style="left:679px;top:310px;color:#e0e0e0;font-size:12.300px">1:20.000</span>
<span class="t r" style="left:728px;top:310px;color:#e0e0e0;font-size:12.300px">1</span>
<span class="t" style="left:743px;top:310px;color:#e0e0e0;font-size:12.300px">0:00.005/...</span>
<div style="left:0px;top:340px;width:879px;height:1px;background:#4a5252"></div>
<svg class="a" style="left:4px;top:325.5px" width="8" height="9"><path d="M0 0L7.300 4.500L0 9Z" fill="#12d822"/></svg>
<span class="t" style="left:25px;top:330.6px;color:#e0e0e0;font-size:14px">Марочко.wav</span>
<span class="t" style="left:289px;top:330.6px;color:#e0e0e0;font-size:13.400px">active</span>
<span class="t" style="left:427px;top:330.6px;color:#e0e0e0;font-size:14px">Марочко</span>
<span class="t r" style="left:609px;top:330px;color:#e0e0e0;font-size:12.300px">6:53.943</span>
<span class="t r" style="left:679px;top:330px;color:#e0e0e0;font-size:12.300px">0:02.913</span>
<span class="t r" style="left:728px;top:330px;color:#e0e0e0;font-size:12.300px">1</span>
<span class="t" style="left:743px;top:330px;color:#e0e0e0;font-size:12.300px">0:00.005/...</span>
<div style="left:0px;top:360px;width:879px;height:1px;background:#4a5252"></div>
<svg class="a" style="left:4px;top:345.5px" width="8" height="9"><path d="M0 0L7.300 4.500L0 9Z" fill="#12d822"/></svg>
<span class="t" style="left:25px;top:350.6px;color:#e0e0e0;font-size:14px">Марочко.wav</span>
<span class="t" style="left:289px;top:350.6px;color:#e0e0e0;font-size:13.400px">active</span>
<span class="t" style="left:427px;top:350.6px;color:#e0e0e0;font-size:14px">Марочко</span>
<span class="t r" style="left:609px;top:350px;color:#e0e0e0;font-size:12.300px">6:56.876</span>
<span class="t r" style="left:679px;top:350px;color:#e0e0e0;font-size:12.300px">0:56.123</span>
<span class="t r" style="left:728px;top:350px;color:#e0e0e0;font-size:12.300px">1</span>
<span class="t" style="left:743px;top:350px;color:#e0e0e0;font-size:12.300px">0:00.017/...</span>
<div style="left:0px;top:380px;width:879px;height:1px;background:#4a5252"></div>
<svg class="a" style="left:4px;top:365.5px" width="8" height="9"><path d="M0 0L7.300 4.500L0 9Z" fill="#12d822"/></svg>
<span class="t" style="left:25px;top:370.6px;color:#e0e0e0;font-size:14px">Марочко.wav</span>
<span class="t" style="left:289px;top:370.6px;color:#e0e0e0;font-size:13.400px">active</span>
<span class="t" style="left:427px;top:370.6px;color:#e0e0e0;font-size:14px">Марочко</span>
<span class="t r" style="left:609px;top:370px;color:#e0e0e0;font-size:12.300px">9:05.500</span>
<span class="t r" style="left:679px;top:370px;color:#e0e0e0;font-size:12.300px">0:50.000</span>
<span class="t r" style="left:728px;top:370px;color:#e0e0e0;font-size:12.300px">1</span>
<span class="t" style="left:743px;top:370px;color:#e0e0e0;font-size:12.300px">0:00.005/...</span>
<div style="left:0px;top:400px;width:879px;height:1px;background:#4a5252"></div>
<svg class="a" style="left:4px;top:385.5px" width="8" height="9"><path d="M0 0L7.300 4.500L0 9Z" fill="#12d822"/></svg>
<span class="t" style="left:25px;top:390.6px;color:#e0e0e0;font-size:14px">Music 1.wav</span>
<span class="t" style="left:289px;top:390.6px;color:#e0e0e0;font-size:13.400px">active</span>
<span class="t" style="left:427px;top:390.6px;color:#e0e0e0;font-size:12.800px">Music 1</span>
<span class="t r" style="left:609px;top:390px;color:#e0e0e0;font-size:12.300px">0:04.891</span>
<span class="t r" style="left:679px;top:390px;color:#e0e0e0;font-size:12.300px">0:24.344</span>
<span class="t r" style="left:728px;top:390px;color:#e0e0e0;font-size:12.300px">1</span>
<span class="t" style="left:743px;top:390px;color:#e0e0e0;font-size:12.300px">0:00.005/...</span>
<div style="left:0px;top:420px;width:879px;height:1px;background:#4a5252"></div>
<svg class="a" style="left:4px;top:405.5px" width="8" height="9"><path d="M0 0L7.300 4.500L0 9Z" fill="#12d822"/></svg>
<span class="t" style="left:25px;top:410.6px;color:#e0e0e0;font-size:14px">Music 1.wav</span>
<span class="t" style="left:289px;top:410.6px;color:#e0e0e0;font-size:13.400px">active</span>
<span class="t" style="left:427px;top:410.6px;color:#e0e0e0;font-size:12.800px">Music 1</span>
<span class="t r" style="left:609px;top:410px;color:#e0e0e0;font-size:12.300px">2:11.033</span>
<span class="t r" style="left:679px;top:410px;color:#e0e0e0;font-size:12.300px">1:21.317</span>
<span class="t r" style="left:728px;top:410px;color:#e0e0e0;font-size:12.300px">1</span>
<span class="t" style="left:743px;top:410px;color:#e0e0e0;font-size:12.300px">0:00.693/...</span>
<div style="left:0px;top:440px;width:879px;height:1px;background:#4a5252"></div>
<svg class="a" style="left:4px;top:425.5px" width="8" height="9"><path d="M0 0L7.300 4.500L0 9Z" fill="#12d822"/></svg>
<span class="t" style="left:25px;top:430.6px;color:#e0e0e0;font-size:14px">Music 1.wav</span>
<span class="t" style="left:289px;top:430.6px;color:#e0e0e0;font-size:13.400px">active</span>
<span class="t" style="left:427px;top:430.6px;color:#e0e0e0;font-size:12.800px">Music 1</span>
<span class="t r" style="left:609px;top:430px;color:#e0e0e0;font-size:12.300px">5:39.755</span>
<span class="t r" style="left:679px;top:430px;color:#e0e0e0;font-size:12.300px">0:29.919</span>
<span class="t r" style="left:728px;top:430px;color:#e0e0e0;font-size:12.300px">1</span>
<span class="t" style="left:743px;top:430px;color:#e0e0e0;font-size:12.300px">0:00.863/...</span>
<div style="left:0px;top:460px;width:879px;height:1px;background:#4a5252"></div>
<svg class="a" style="left:4px;top:445.5px" width="8" height="9"><path d="M0 0L7.300 4.500L0 9Z" fill="#12d822"/></svg>
<span class="t" style="left:25px;top:450.6px;color:#e0e0e0;font-size:14px">Music 1.wav</span>
<span class="t" style="left:289px;top:450.6px;color:#e0e0e0;font-size:13.400px">active</span>
<span class="t" style="left:427px;top:450.6px;color:#e0e0e0;font-size:12.800px">Music 1</span>
<span class="t r" style="left:609px;top:450px;color:#e0e0e0;font-size:12.300px">8:04.000</span>
<span class="t r" style="left:679px;top:450px;color:#e0e0e0;font-size:12.300px">0:36.000</span>
<span class="t r" style="left:728px;top:450px;color:#e0e0e0;font-size:12.300px">1</span>
<span class="t" style="left:743px;top:450px;color:#e0e0e0;font-size:12.300px">0:00.005/...</span>
<div style="left:0px;top:480px;width:879px;height:1px;background:#4a5252"></div>
<svg class="a" style="left:4px;top:465.5px" width="8" height="9"><path d="M0 0L7.300 4.500L0 9Z" fill="#12d822"/></svg>
<span class="t" style="left:25px;top:470.6px;color:#e0e0e0;font-size:14px">Music 1.wav</span>
<span class="t" style="left:289px;top:470.6px;color:#e0e0e0;font-size:13.400px">active</span>
<span class="t" style="left:427px;top:470.6px;color:#e0e0e0;font-size:12.800px">Music 1</span>
<span class="t r" style="left:609px;top:470px;color:#e0e0e0;font-size:12.300px">10:09.360</span>
<span class="t r" style="left:679px;top:470px;color:#e0e0e0;font-size:12.300px">0:05.620</span>
<span class="t r" style="left:728px;top:470px;color:#e0e0e0;font-size:12.300px">1</span>
<span class="t" style="left:743px;top:470px;color:#e0e0e0;font-size:12.300px">0:00.005/...</span>
<div style="left:0px;top:500px;width:879px;height:1px;background:#4a5252"></div>
<svg class="a" style="left:4px;top:485.5px" width="8" height="9"><path d="M0 0L7.300 4.500L0 9Z" fill="#12d822"/></svg>
<span class="t" style="left:25px;top:490.6px;color:#e0e0e0;font-size:14px">Music 1.wav</span>
<span class="t" style="left:289px;top:490.6px;color:#e0e0e0;font-size:13.400px">active</span>
<span class="t" style="left:427px;top:490.6px;color:#e0e0e0;font-size:12.800px">Music 1</span>
<span class="t r" style="left:609px;top:490px;color:#e0e0e0;font-size:12.300px">10:15.677</span>
<span class="t r" style="left:679px;top:490px;color:#e0e0e0;font-size:12.300px">0:42.904</span>
<span class="t r" style="left:728px;top:490px;color:#e0e0e0;font-size:12.300px">1</span>
<span class="t" style="left:743px;top:490px;color:#e0e0e0;font-size:12.300px">0:00.005/...</span>
<div style="left:0px;top:520px;width:879px;height:1px;background:#4a5252"></div>
<svg class="a" style="left:4px;top:505.5px" width="8" height="9"><path d="M0 0L7.300 4.500L0 9Z" fill="#12d822"/></svg>
<span class="t" style="left:25px;top:510.6px;color:#e0e0e0;font-size:14px">Music 1.wav</span>
<span class="t" style="left:289px;top:510.6px;color:#e0e0e0;font-size:13.400px">active</span>
<span class="t" style="left:427px;top:510.6px;color:#e0e0e0;font-size:12.800px">Music 1</span>
<span class="t r" style="left:609px;top:510px;color:#e0e0e0;font-size:12.300px">0:26.695</span>
<span class="t r" style="left:679px;top:510px;color:#e0e0e0;font-size:12.300px">0:17.956</span>
<span class="t r" style="left:728px;top:510px;color:#e0e0e0;font-size:12.300px">1</span>
<span class="t" style="left:743px;top:510px;color:#e0e0e0;font-size:12.300px">0:03.194/...</span>
<div style="left:0px;top:540px;width:879px;height:1px;background:#4a5252"></div>
<svg class="a" style="left:4px;top:525.5px" width="8" height="9"><path d="M0 0L7.300 4.500L0 9Z" fill="#12d822"/></svg>
<span class="t" style="left:25px;top:530.6px;color:#e0e0e0;font-size:14px">Music 1.wav</span>
<span class="t" style="left:289px;top:530.6px;color:#e0e0e0;font-size:13.400px">active</span>
<span class="t" style="left:427px;top:530.6px;color:#e0e0e0;font-size:12.800px">Music 1</span>
<span class="t r" style="left:609px;top:530px;color:#e0e0e0;font-size:12.300px">1:06.611</span>
<span class="t r" style="left:679px;top:530px;color:#e0e0e0;font-size:12.300px">0:42.712</span>
<span class="t r" style="left:728px;top:530px;color:#e0e0e0;font-size:12.300px">1</span>
<span class="t" style="left:743px;top:530px;color:#e0e0e0;font-size:12.300px">0:00.693/...</span>
<div style="left:0px;top:560px;width:879px;height:1px;background:#4a5252"></div>
<svg class="a" style="left:4px;top:545.5px" width="8" height="9"><path d="M0 0L7.300 4.500L0 9Z" fill="#12d822"/></svg>
<span class="t" style="left:25px;top:550.6px;color:#e0e0e0;font-size:14px">Music 1.wav</span>
<span class="t" style="left:289px;top:550.6px;color:#e0e0e0;font-size:13.400px">active</span>
<span class="t" style="left:427px;top:550.6px;color:#e0e0e0;font-size:12.800px">Music 1</span>
<span class="t r" style="left:609px;top:550px;color:#e0e0e0;font-size:12.300px">3:31.701</span>
<span class="t r" style="left:679px;top:550px;color:#e0e0e0;font-size:12.300px">0:52.901</span>
<span class="t r" style="left:728px;top:550px;color:#e0e0e0;font-size:12.300px">1</span>
<span class="t" style="left:743px;top:550px;color:#e0e0e0;font-size:12.300px">0:00.693/...</span>
<div style="left:0px;top:580px;width:879px;height:1px;background:#4a5252"></div>
<svg class="a" style="left:4px;top:565.5px" width="8" height="9"><path d="M0 0L7.300 4.500L0 9Z" fill="#12d822"/></svg>
<span class="t" style="left:25px;top:570.6px;color:#e0e0e0;font-size:14px">Music 1.wav</span>
<span class="t" style="left:289px;top:570.6px;color:#e0e0e0;font-size:13.400px">active</span>
<span class="t" style="left:427px;top:570.6px;color:#e0e0e0;font-size:12.800px">Music 1</span>
<span class="t r" style="left:609px;top:570px;color:#e0e0e0;font-size:12.300px">4:45.233</span>
<span class="t r" style="left:679px;top:570px;color:#e0e0e0;font-size:12.300px">0:53.013</span>
<span class="t r" style="left:728px;top:570px;color:#e0e0e0;font-size:12.300px">1</span>
<span class="t" style="left:743px;top:570px;color:#e0e0e0;font-size:12.300px">0:00.005/...</span>
</div>
<div style="left:1px;top:649px;width:880px;height:1px;background:#8a8d94"></div>
<div style="left:319px;top:685px;width:200px;height:26px;background:#e1e1e1;border:1px solid #adadad"></div>
<span class="t r" style="left:483px;top:698.7px;font-size:13.330px;color:#000">(save to project)</span>
<div style="left:525px;top:685px;width:68px;height:26px;background:#e1e1e1;border:1px solid #adadad"></div>
<span class="t c" style="left:559px;top:698.7px;font-size:13.330px;color:#000">Save...</span>
</div>
<div style="left:1780px;top:832px;width:23px;height:16px;background:#465050;border:1px solid #2e3434;border-top:none"></div>
<div style="left:1786px;top:832px;width:3px;height:15px;background:#dfe8e8"></div>
<div style="left:1788.5px;top:832px;width:1.5px;height:15px;background:#b02020"></div>
<svg class="a" style="left:1780px;top:834px" width="10" height="10"><circle cx="4.800" cy="5" r="2.300" fill="#d8e4ea" stroke="#c01822" stroke-width="1.400"/></svg>
<svg class="a" style="left:1781px;top:832px" width="22" height="16"><path d="M0 15L3 9L5 14L8 15L11 10L14 14L17 15L20 12L21 15Z" fill="#aab8b8" opacity=".55"/></svg>
<div style="left:1804px;top:832px;width:6px;height:15px;background:#465050"></div>
<div style="left:1809px;top:839px;width:53px;height:9px;background:linear-gradient(#aeb9c1,#9ca8b0)"></div>
<div style="left:1808px;top:836px;width:54px;height:3px;background:#0c0c0c"></div>
<div style="left:1593px;top:832px;width:1px;height:45px;background:#c8232c"></div>
<div class="win" style="left:632px;top:424px;width:787px;height:453px;background:#2b2b2b;border-left:1px solid #0d5c5c;border-right:1px solid #0d5c5c">
<div style="left:0px;top:0px;width:785px;height:31px;background:#004b4b;border-top:1px solid #0d5c5c"></div>
<svg class="a" style="left:8px;top:7px" width="16" height="16" viewBox="0 0 16 16"><defs><clipPath id="lg"><path d="M8 .8Q14.800 1 14.800 6.500Q14 11.500 8 15.500Q2 11.500 1.200 6.500Q1.200 1 8 .8Z"/></clipPath></defs><g clip-path="url(#lg)"><rect width="16" height="16" fill="#b8604a"/><path d="M0 0H16V5Q9 2 4 6L0 7Z" fill="#2a8ad8"/><path d="M0 5Q5 5 8 16H0Z" fill="#58b830"/><path d="M2 4.500Q8 4 9 15" fill="none" stroke="#f4f4f4" stroke-width="1.300"/></g></svg>
<span class="t seg" style="left:29px;top:18px;font-size:11.500px;color:#f2f2f2">Resources</span>
<svg class="a" style="left:734px;top:8px" width="14" height="16"><path d="M3.500 1.300H10.500M7 8V15" fill="none" stroke="#fff" stroke-width="1.400"/><path d="M5 1.500H9V6L12.800 8.500H1.200L5 6Z" fill="#fff"/></svg>
<svg class="a" style="left:764px;top:9px" width="12" height="12"><path d="M1 1L11 11M11 1L1 11" stroke="#fff" stroke-width="1.300"/></svg>
<div class="btn" style="left:7px;top:35px;width:28px;height:27px;background:linear-gradient(#585b66,#4b4e58 50%,#41444d 52%,#3d4049)"><svg width="26" height="25" viewBox="0 0 26 25" style="position:absolute;left:0;top:0"><rect x="8" y="5" width="12" height="14" fill="#a4b0d8"/><path d="M17 8Q12 8 12 14" fill="none" stroke="#3a3d48" stroke-width="1.200"/><path d="M7.500 21.500V16.500H4.500L9 11.500L13.500 16.500H10.500V21.500Z" fill="#f4f4f4"/></svg></div>
<div class="btn" style="left:37px;top:35px;width:28px;height:27px;background:linear-gradient(#585b66,#4b4e58 50%,#41444d 52%,#3d4049)"><svg width="26" height="25" viewBox="0 0 26 25" style="position:absolute;left:0;top:0"><rect x="7" y="5" width="12" height="14" fill="#a4b0d8"/><path d="M10 8Q15 8 15 13" fill="none" stroke="#3a3d48" stroke-width="1.200"/><path d="M16.500 13V17.500H13.500L18 22.500L22.500 17.500H19.500V13Z" fill="#f4f4f4"/></svg></div>
<div style="left:78px;top:40px;width:109px;height:19px;background:#2b2b2b;border:1px solid #383838"></div>
<div style="left:168px;top:41px;width:1px;height:17px;background:#383838"></div>
<span class="t tah" style="left:80px;top:49.5px;font-size:11px;color:#dcdcdc">FX chain</span>
<svg class="a" style="left:172px;top:46px" width="10" height="7"><path d="M.5 .800L5 5.300L9.500 .800" fill="none" stroke="#d8d8d8" stroke-width="1.100"/></svg>
<svg class="a" style="left:191px;top:40px" width="10" height="19"><rect x=".5" y=".5" width="8" height="7" fill="none" stroke="#c8c8c8"/><path d="M2.500 4H6.500M4.500 2V6" stroke="#c8c8c8"/><rect x=".5" y="9.500" width="8" height="7" fill="none" stroke="#8a8a8a"/><path d="M2.500 13H6.500" stroke="#8a8a8a"/></svg>
<span class="t seg" style="left:732px;top:49.5px;font-size:16.500px;font-weight:bold;font-style:italic;color:#4a4a4a;letter-spacing:-0.300px">S&amp;M</span>
<div style="left:1px;top:68px;width:783px;height:400px;background:#2a2a2a;border:1px solid #6a6d72"></div>
<div style="left:2px;top:69px;width:781px;height:24px;background:#fff"></div>
<div style="left:66px;top:69px;width:1px;height:24px;background:#e2e2e2"></div>
<div style="left:66px;top:93px;width:1px;height:306px;background:#4a5252"></div>
<div style="left:249px;top:69px;width:1px;height:24px;background:#e2e2e2"></div>
<div style="left:249px;top:93px;width:1px;height:306px;background:#4a5252"></div>
<div style="left:499px;top:69px;width:1px;height:24px;background:#e2e2e2"></div>
<div style="left:499px;top:93px;width:1px;height:306px;background:#4a5252"></div>
<div style="left:699px;top:69px;width:1px;height:24px;background:#e2e2e2"></div>
<div style="left:699px;top:93px;width:1px;height:306px;background:#4a5252"></div>
<span class="t tah" style="left:7px;top:81px;font-size:11px;color:#000">Slot</span>
<span class="t tah" style="left:72px;top:81px;font-size:11px;color:#000">Name</span>
<span class="t tah" style="left:255px;top:81px;font-size:11px;color:#000">Path</span>
<span class="t tah" style="left:505px;top:81px;font-size:11px;color:#000">Comment</span>
<svg class="a" style="left:29px;top:69px" width="9" height="5"><path d="M.5 4.500L4.500 .5L8.500 4.500" fill="none" stroke="#666" stroke-width="1"/></svg>
<div style="left:2px;top:110px;width:781px;height:1px;background:#4a5252"></div>
<span class="t tah c" style="left:23px;top:101.5px;font-size:11px;color:#e0e0e0">1</span>
<span class="t tah" style="left:72px;top:101.5px;font-size:11px;color:#e0e0e0">Voice Track YuriOl</span>
<span class="t tah" style="left:255px;top:101.5px;font-size:11px;color:#e0e0e0">VOCAL\Voice Track YuriOl.RfxChain</span>
<div style="left:2px;top:127px;width:781px;height:1px;background:#4a5252"></div>
<span class="t tah c" style="left:23px;top:118.5px;font-size:11px;color:#e0e0e0">2</span>
<span class="t tah" style="left:72px;top:118.5px;font-size:11px;color:#e0e0e0">WavesTune+ReWire</span>
<span class="t tah" style="left:255px;top:118.5px;font-size:11px;color:#e0e0e0">VOCAL\WavesTune+ReWire.RfxChain</span>
<div style="left:2px;top:144px;width:781px;height:1px;background:#4a5252"></div>
<span class="t tah c" style="left:23px;top:135.5px;font-size:11px;color:#e0e0e0">3</span>
<span class="t tah" style="left:72px;top:135.5px;font-size:11px;color:#e0e0e0">Waves ReWire</span>
<span class="t tah" style="left:255px;top:135.5px;font-size:11px;color:#e0e0e0">Waves ReWire.RfxChain</span>
<div style="left:2px;top:161px;width:781px;height:1px;background:#4a5252"></div>
<span class="t tah c" style="left:23px;top:152.5px;font-size:11px;color:#e0e0e0">4</span>
<div style="left:2px;top:178px;width:781px;height:1px;background:#4a5252"></div>
<span class="t tah c" style="left:23px;top:169.5px;font-size:11px;color:#e0e0e0">5</span>
<div style="left:2px;top:195px;width:781px;height:1px;background:#4a5252"></div>
<span class="t tah c" style="left:23px;top:186.5px;font-size:11px;color:#e0e0e0">6</span>
<div style="left:2px;top:212px;width:781px;height:1px;background:#4a5252"></div>
<span class="t tah c" style="left:23px;top:203.5px;font-size:11px;color:#e0e0e0">7</span>
<div style="left:2px;top:229px;width:781px;height:1px;background:#4a5252"></div>
<span class="t tah c" style="left:23px;top:220.5px;font-size:11px;color:#e0e0e0">8</span>
<div style="left:2px;top:246px;width:781px;height:1px;background:#4a5252"></div>
<span class="t tah c" style="left:23px;top:237.5px;font-size:11px;color:#e0e0e0">9</span>
<div style="left:2px;top:263px;width:781px;height:1px;background:#4a5252"></div>
<span class="t tah c" style="left:23px;top:254.5px;font-size:11px;color:#e0e0e0">10</span>
<div style="left:2px;top:280px;width:781px;height:1px;background:#4a5252"></div>
<span class="t tah c" style="left:23px;top:271.5px;font-size:11px;color:#e0e0e0">11</span>
<div style="left:2px;top:297px;width:781px;height:1px;background:#4a5252"></div>
<span class="t tah c" style="left:23px;top:288.5px;font-size:11px;color:#e0e0e0">12</span>
<div style="left:2px;top:314px;width:781px;height:1px;background:#4a5252"></div>
<span class="t tah c" style="left:23px;top:305.5px;font-size:11px;color:#e0e0e0">13</span>
<div style="left:2px;top:331px;width:781px;height:1px;background:#4a5252"></div>
<span class="t tah c" style="left:23px;top:322.5px;font-size:11px;color:#e0e0e0">14</span>
<div style="left:2px;top:348px;width:781px;height:1px;background:#4a5252"></div>
<span class="t tah c" style="left:23px;top:339.5px;font-size:11px;color:#e0e0e0">15</span>
<div style="left:2px;top:365px;width:781px;height:1px;background:#4a5252"></div>
<span class="t tah c" style="left:23px;top:356.5px;font-size:11px;color:#e0e0e0">16</span>
<div style="left:2px;top:382px;width:781px;height:1px;background:#4a5252"></div>
<span class="t tah c" style="left:23px;top:373.5px;font-size:11px;color:#e0e0e0">17</span>
<div style="left:2px;top:399px;width:781px;height:1px;background:#4a5252"></div>
<span class="t tah c" style="left:23px;top:390.5px;font-size:11px;color:#e0e0e0">18</span>
</div>
</body></html>
